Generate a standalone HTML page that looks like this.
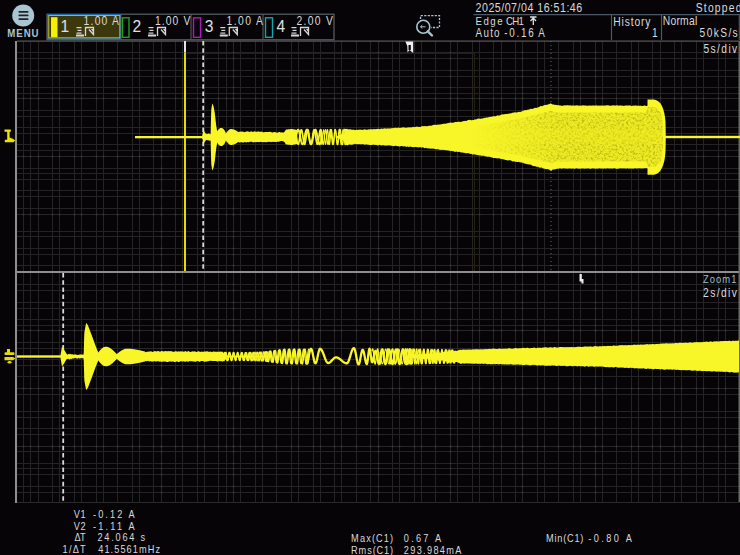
<!DOCTYPE html>
<html><head><meta charset="utf-8"><style>
html,body{margin:0;padding:0;background:#060406;width:740px;height:555px;overflow:hidden}
body{position:relative;font-family:"Liberation Sans",sans-serif}
</style></head><body>
<svg width="740" height="555" viewBox="0 0 740 555" style="position:absolute;left:0;top:0"><g stroke-width="1"><line x1="23.5" y1="41" x2="23.5" y2="271" stroke="#242424"/><line x1="30.5" y1="41" x2="30.5" y2="271" stroke="#242424"/><line x1="38.5" y1="41" x2="38.5" y2="271" stroke="#242424"/><line x1="52.5" y1="41" x2="52.5" y2="271" stroke="#242424"/><line x1="59.5" y1="41" x2="59.5" y2="271" stroke="#242424"/><line x1="74.5" y1="41" x2="74.5" y2="271" stroke="#242424"/><line x1="81.5" y1="41" x2="81.5" y2="271" stroke="#242424"/><line x1="96.5" y1="41" x2="96.5" y2="271" stroke="#242424"/><line x1="103.5" y1="41" x2="103.5" y2="271" stroke="#242424"/><line x1="117.5" y1="41" x2="117.5" y2="271" stroke="#242424"/><line x1="132.5" y1="41" x2="132.5" y2="271" stroke="#242424"/><line x1="139.5" y1="41" x2="139.5" y2="271" stroke="#242424"/><line x1="153.5" y1="41" x2="153.5" y2="271" stroke="#242424"/><line x1="161.5" y1="41" x2="161.5" y2="271" stroke="#262626"/><line x1="175.5" y1="41" x2="175.5" y2="271" stroke="#242424"/><line x1="182.5" y1="41" x2="182.5" y2="271" stroke="#242424"/><line x1="197.5" y1="41" x2="197.5" y2="271" stroke="#242424"/><line x1="204.5" y1="41" x2="204.5" y2="271" stroke="#242424"/><line x1="218.5" y1="41" x2="218.5" y2="271" stroke="#242424"/><line x1="226.5" y1="41" x2="226.5" y2="271" stroke="#242424"/><line x1="233.5" y1="41" x2="233.5" y2="271" stroke="#262626"/><line x1="240.5" y1="41" x2="240.5" y2="271" stroke="#242424"/><line x1="255.5" y1="41" x2="255.5" y2="271" stroke="#242424"/><line x1="262.5" y1="41" x2="262.5" y2="271" stroke="#242424"/><line x1="276.5" y1="41" x2="276.5" y2="271" stroke="#242424"/><line x1="291.5" y1="41" x2="291.5" y2="271" stroke="#242424"/><line x1="298.5" y1="41" x2="298.5" y2="271" stroke="#242424"/><line x1="313.5" y1="41" x2="313.5" y2="271" stroke="#242424"/><line x1="320.5" y1="41" x2="320.5" y2="271" stroke="#242424"/><line x1="334.5" y1="41" x2="334.5" y2="271" stroke="#242424"/><line x1="341.5" y1="41" x2="341.5" y2="271" stroke="#242424"/><line x1="356.5" y1="41" x2="356.5" y2="271" stroke="#242424"/><line x1="370.5" y1="41" x2="370.5" y2="271" stroke="#242424"/><line x1="378.5" y1="41" x2="378.5" y2="271" stroke="#262626"/><line x1="392.5" y1="41" x2="392.5" y2="271" stroke="#242424"/><line x1="399.5" y1="41" x2="399.5" y2="271" stroke="#242424"/><line x1="414.5" y1="41" x2="414.5" y2="271" stroke="#242424"/><line x1="421.5" y1="41" x2="421.5" y2="271" stroke="#242424"/><line x1="435.5" y1="41" x2="435.5" y2="271" stroke="#242424"/><line x1="450.5" y1="41" x2="450.5" y2="271" stroke="#262626"/><line x1="457.5" y1="41" x2="457.5" y2="271" stroke="#242424"/><line x1="472.5" y1="41" x2="472.5" y2="271" stroke="#242424"/><line x1="479.5" y1="41" x2="479.5" y2="271" stroke="#242424"/><line x1="493.5" y1="41" x2="493.5" y2="271" stroke="#242424"/><line x1="501.5" y1="41" x2="501.5" y2="271" stroke="#242424"/><line x1="515.5" y1="41" x2="515.5" y2="271" stroke="#242424"/><line x1="522.5" y1="41" x2="522.5" y2="271" stroke="#262626"/><line x1="537.5" y1="41" x2="537.5" y2="271" stroke="#242424"/><line x1="544.5" y1="41" x2="544.5" y2="271" stroke="#242424"/><line x1="558.5" y1="41" x2="558.5" y2="271" stroke="#242424"/><line x1="573.5" y1="41" x2="573.5" y2="271" stroke="#242424"/><line x1="580.5" y1="41" x2="580.5" y2="271" stroke="#242424"/><line x1="595.5" y1="41" x2="595.5" y2="271" stroke="#262626"/><line x1="602.5" y1="41" x2="602.5" y2="271" stroke="#242424"/><line x1="616.5" y1="41" x2="616.5" y2="271" stroke="#242424"/><line x1="631.5" y1="41" x2="631.5" y2="271" stroke="#242424"/><line x1="638.5" y1="41" x2="638.5" y2="271" stroke="#242424"/><line x1="652.5" y1="41" x2="652.5" y2="271" stroke="#242424"/><line x1="660.5" y1="41" x2="660.5" y2="271" stroke="#242424"/><line x1="674.5" y1="41" x2="674.5" y2="271" stroke="#242424"/><line x1="681.5" y1="41" x2="681.5" y2="271" stroke="#242424"/><line x1="696.5" y1="41" x2="696.5" y2="271" stroke="#242424"/><line x1="703.5" y1="41" x2="703.5" y2="271" stroke="#242424"/><line x1="718.5" y1="41" x2="718.5" y2="271" stroke="#242424"/><line x1="725.5" y1="41" x2="725.5" y2="271" stroke="#242424"/><line x1="16" y1="52.5" x2="739.2" y2="52.5" stroke="#242424"/><line x1="16" y1="58.5" x2="739.2" y2="58.5" stroke="#242424"/><line x1="16" y1="70.5" x2="739.2" y2="70.5" stroke="#242424"/><line x1="16" y1="76.5" x2="739.2" y2="76.5" stroke="#242424"/><line x1="16" y1="87.5" x2="739.2" y2="87.5" stroke="#242424"/><line x1="16" y1="93.5" x2="739.2" y2="93.5" stroke="#242424"/><line x1="16" y1="98.5" x2="739.2" y2="98.5" stroke="#262626"/><line x1="16" y1="110.5" x2="739.2" y2="110.5" stroke="#242424"/><line x1="16" y1="116.5" x2="739.2" y2="116.5" stroke="#242424"/><line x1="16" y1="127.5" x2="739.2" y2="127.5" stroke="#242424"/><line x1="16" y1="133.5" x2="739.2" y2="133.5" stroke="#242424"/><line x1="16" y1="144.5" x2="739.2" y2="144.5" stroke="#242424"/><line x1="16" y1="150.5" x2="739.2" y2="150.5" stroke="#242424"/><line x1="16" y1="156.5" x2="739.2" y2="156.5" stroke="#262626"/><line x1="16" y1="168.5" x2="739.2" y2="168.5" stroke="#242424"/><line x1="16" y1="173.5" x2="739.2" y2="173.5" stroke="#242424"/><line x1="16" y1="179.5" x2="739.2" y2="179.5" stroke="#242424"/><line x1="16" y1="190.5" x2="739.2" y2="190.5" stroke="#242424"/><line x1="16" y1="196.5" x2="739.2" y2="196.5" stroke="#242424"/><line x1="16" y1="208.5" x2="739.2" y2="208.5" stroke="#242424"/><line x1="16" y1="214.5" x2="739.2" y2="214.5" stroke="#262626"/><line x1="16" y1="231.5" x2="739.2" y2="231.5" stroke="#242424"/><line x1="16" y1="236.5" x2="739.2" y2="236.5" stroke="#242424"/><line x1="16" y1="248.5" x2="739.2" y2="248.5" stroke="#242424"/><line x1="16" y1="254.5" x2="739.2" y2="254.5" stroke="#242424"/><line x1="16" y1="265.5" x2="739.2" y2="265.5" stroke="#242424"/><rect x="160.7" y="51.7" width="1.6" height="1.6" fill="#3a3a3a"/><rect x="160.7" y="57.7" width="1.6" height="1.6" fill="#3a3a3a"/><rect x="160.7" y="69.7" width="1.6" height="1.6" fill="#3a3a3a"/><rect x="160.7" y="75.7" width="1.6" height="1.6" fill="#3a3a3a"/><rect x="160.7" y="86.7" width="1.6" height="1.6" fill="#3a3a3a"/><rect x="160.7" y="92.7" width="1.6" height="1.6" fill="#3a3a3a"/><rect x="160.7" y="97.7" width="1.6" height="1.6" fill="#3a3a3a"/><rect x="160.7" y="109.7" width="1.6" height="1.6" fill="#3a3a3a"/><rect x="160.7" y="115.7" width="1.6" height="1.6" fill="#3a3a3a"/><rect x="160.7" y="126.7" width="1.6" height="1.6" fill="#3a3a3a"/><rect x="160.7" y="132.7" width="1.6" height="1.6" fill="#3a3a3a"/><rect x="160.7" y="143.7" width="1.6" height="1.6" fill="#3a3a3a"/><rect x="160.7" y="149.7" width="1.6" height="1.6" fill="#3a3a3a"/><rect x="160.7" y="155.7" width="1.6" height="1.6" fill="#3a3a3a"/><rect x="160.7" y="167.7" width="1.6" height="1.6" fill="#3a3a3a"/><rect x="160.7" y="172.7" width="1.6" height="1.6" fill="#3a3a3a"/><rect x="160.7" y="178.7" width="1.6" height="1.6" fill="#3a3a3a"/><rect x="160.7" y="189.7" width="1.6" height="1.6" fill="#3a3a3a"/><rect x="160.7" y="195.7" width="1.6" height="1.6" fill="#3a3a3a"/><rect x="160.7" y="207.7" width="1.6" height="1.6" fill="#3a3a3a"/><rect x="160.7" y="213.7" width="1.6" height="1.6" fill="#3a3a3a"/><rect x="160.7" y="230.7" width="1.6" height="1.6" fill="#3a3a3a"/><rect x="160.7" y="235.7" width="1.6" height="1.6" fill="#3a3a3a"/><rect x="160.7" y="247.7" width="1.6" height="1.6" fill="#3a3a3a"/><rect x="160.7" y="253.7" width="1.6" height="1.6" fill="#3a3a3a"/><rect x="160.7" y="264.7" width="1.6" height="1.6" fill="#3a3a3a"/><rect x="232.7" y="51.7" width="1.6" height="1.6" fill="#3a3a3a"/><rect x="232.7" y="57.7" width="1.6" height="1.6" fill="#3a3a3a"/><rect x="232.7" y="69.7" width="1.6" height="1.6" fill="#3a3a3a"/><rect x="232.7" y="75.7" width="1.6" height="1.6" fill="#3a3a3a"/><rect x="232.7" y="86.7" width="1.6" height="1.6" fill="#3a3a3a"/><rect x="232.7" y="92.7" width="1.6" height="1.6" fill="#3a3a3a"/><rect x="232.7" y="97.7" width="1.6" height="1.6" fill="#3a3a3a"/><rect x="232.7" y="109.7" width="1.6" height="1.6" fill="#3a3a3a"/><rect x="232.7" y="115.7" width="1.6" height="1.6" fill="#3a3a3a"/><rect x="232.7" y="126.7" width="1.6" height="1.6" fill="#3a3a3a"/><rect x="232.7" y="132.7" width="1.6" height="1.6" fill="#3a3a3a"/><rect x="232.7" y="143.7" width="1.6" height="1.6" fill="#3a3a3a"/><rect x="232.7" y="149.7" width="1.6" height="1.6" fill="#3a3a3a"/><rect x="232.7" y="155.7" width="1.6" height="1.6" fill="#3a3a3a"/><rect x="232.7" y="167.7" width="1.6" height="1.6" fill="#3a3a3a"/><rect x="232.7" y="172.7" width="1.6" height="1.6" fill="#3a3a3a"/><rect x="232.7" y="178.7" width="1.6" height="1.6" fill="#3a3a3a"/><rect x="232.7" y="189.7" width="1.6" height="1.6" fill="#3a3a3a"/><rect x="232.7" y="195.7" width="1.6" height="1.6" fill="#3a3a3a"/><rect x="232.7" y="207.7" width="1.6" height="1.6" fill="#3a3a3a"/><rect x="232.7" y="213.7" width="1.6" height="1.6" fill="#3a3a3a"/><rect x="232.7" y="230.7" width="1.6" height="1.6" fill="#3a3a3a"/><rect x="232.7" y="235.7" width="1.6" height="1.6" fill="#3a3a3a"/><rect x="232.7" y="247.7" width="1.6" height="1.6" fill="#3a3a3a"/><rect x="232.7" y="253.7" width="1.6" height="1.6" fill="#3a3a3a"/><rect x="232.7" y="264.7" width="1.6" height="1.6" fill="#3a3a3a"/><rect x="377.7" y="51.7" width="1.6" height="1.6" fill="#3a3a3a"/><rect x="377.7" y="57.7" width="1.6" height="1.6" fill="#3a3a3a"/><rect x="377.7" y="69.7" width="1.6" height="1.6" fill="#3a3a3a"/><rect x="377.7" y="75.7" width="1.6" height="1.6" fill="#3a3a3a"/><rect x="377.7" y="86.7" width="1.6" height="1.6" fill="#3a3a3a"/><rect x="377.7" y="92.7" width="1.6" height="1.6" fill="#3a3a3a"/><rect x="377.7" y="97.7" width="1.6" height="1.6" fill="#3a3a3a"/><rect x="377.7" y="109.7" width="1.6" height="1.6" fill="#3a3a3a"/><rect x="377.7" y="115.7" width="1.6" height="1.6" fill="#3a3a3a"/><rect x="377.7" y="126.7" width="1.6" height="1.6" fill="#3a3a3a"/><rect x="377.7" y="132.7" width="1.6" height="1.6" fill="#3a3a3a"/><rect x="377.7" y="143.7" width="1.6" height="1.6" fill="#3a3a3a"/><rect x="377.7" y="149.7" width="1.6" height="1.6" fill="#3a3a3a"/><rect x="377.7" y="155.7" width="1.6" height="1.6" fill="#3a3a3a"/><rect x="377.7" y="167.7" width="1.6" height="1.6" fill="#3a3a3a"/><rect x="377.7" y="172.7" width="1.6" height="1.6" fill="#3a3a3a"/><rect x="377.7" y="178.7" width="1.6" height="1.6" fill="#3a3a3a"/><rect x="377.7" y="189.7" width="1.6" height="1.6" fill="#3a3a3a"/><rect x="377.7" y="195.7" width="1.6" height="1.6" fill="#3a3a3a"/><rect x="377.7" y="207.7" width="1.6" height="1.6" fill="#3a3a3a"/><rect x="377.7" y="213.7" width="1.6" height="1.6" fill="#3a3a3a"/><rect x="377.7" y="230.7" width="1.6" height="1.6" fill="#3a3a3a"/><rect x="377.7" y="235.7" width="1.6" height="1.6" fill="#3a3a3a"/><rect x="377.7" y="247.7" width="1.6" height="1.6" fill="#3a3a3a"/><rect x="377.7" y="253.7" width="1.6" height="1.6" fill="#3a3a3a"/><rect x="377.7" y="264.7" width="1.6" height="1.6" fill="#3a3a3a"/><rect x="449.7" y="51.7" width="1.6" height="1.6" fill="#3a3a3a"/><rect x="449.7" y="57.7" width="1.6" height="1.6" fill="#3a3a3a"/><rect x="449.7" y="69.7" width="1.6" height="1.6" fill="#3a3a3a"/><rect x="449.7" y="75.7" width="1.6" height="1.6" fill="#3a3a3a"/><rect x="449.7" y="86.7" width="1.6" height="1.6" fill="#3a3a3a"/><rect x="449.7" y="92.7" width="1.6" height="1.6" fill="#3a3a3a"/><rect x="449.7" y="97.7" width="1.6" height="1.6" fill="#3a3a3a"/><rect x="449.7" y="109.7" width="1.6" height="1.6" fill="#3a3a3a"/><rect x="449.7" y="115.7" width="1.6" height="1.6" fill="#3a3a3a"/><rect x="449.7" y="126.7" width="1.6" height="1.6" fill="#3a3a3a"/><rect x="449.7" y="132.7" width="1.6" height="1.6" fill="#3a3a3a"/><rect x="449.7" y="143.7" width="1.6" height="1.6" fill="#3a3a3a"/><rect x="449.7" y="149.7" width="1.6" height="1.6" fill="#3a3a3a"/><rect x="449.7" y="155.7" width="1.6" height="1.6" fill="#3a3a3a"/><rect x="449.7" y="167.7" width="1.6" height="1.6" fill="#3a3a3a"/><rect x="449.7" y="172.7" width="1.6" height="1.6" fill="#3a3a3a"/><rect x="449.7" y="178.7" width="1.6" height="1.6" fill="#3a3a3a"/><rect x="449.7" y="189.7" width="1.6" height="1.6" fill="#3a3a3a"/><rect x="449.7" y="195.7" width="1.6" height="1.6" fill="#3a3a3a"/><rect x="449.7" y="207.7" width="1.6" height="1.6" fill="#3a3a3a"/><rect x="449.7" y="213.7" width="1.6" height="1.6" fill="#3a3a3a"/><rect x="449.7" y="230.7" width="1.6" height="1.6" fill="#3a3a3a"/><rect x="449.7" y="235.7" width="1.6" height="1.6" fill="#3a3a3a"/><rect x="449.7" y="247.7" width="1.6" height="1.6" fill="#3a3a3a"/><rect x="449.7" y="253.7" width="1.6" height="1.6" fill="#3a3a3a"/><rect x="449.7" y="264.7" width="1.6" height="1.6" fill="#3a3a3a"/><rect x="521.7" y="51.7" width="1.6" height="1.6" fill="#3a3a3a"/><rect x="521.7" y="57.7" width="1.6" height="1.6" fill="#3a3a3a"/><rect x="521.7" y="69.7" width="1.6" height="1.6" fill="#3a3a3a"/><rect x="521.7" y="75.7" width="1.6" height="1.6" fill="#3a3a3a"/><rect x="521.7" y="86.7" width="1.6" height="1.6" fill="#3a3a3a"/><rect x="521.7" y="92.7" width="1.6" height="1.6" fill="#3a3a3a"/><rect x="521.7" y="97.7" width="1.6" height="1.6" fill="#3a3a3a"/><rect x="521.7" y="109.7" width="1.6" height="1.6" fill="#3a3a3a"/><rect x="521.7" y="115.7" width="1.6" height="1.6" fill="#3a3a3a"/><rect x="521.7" y="126.7" width="1.6" height="1.6" fill="#3a3a3a"/><rect x="521.7" y="132.7" width="1.6" height="1.6" fill="#3a3a3a"/><rect x="521.7" y="143.7" width="1.6" height="1.6" fill="#3a3a3a"/><rect x="521.7" y="149.7" width="1.6" height="1.6" fill="#3a3a3a"/><rect x="521.7" y="155.7" width="1.6" height="1.6" fill="#3a3a3a"/><rect x="521.7" y="167.7" width="1.6" height="1.6" fill="#3a3a3a"/><rect x="521.7" y="172.7" width="1.6" height="1.6" fill="#3a3a3a"/><rect x="521.7" y="178.7" width="1.6" height="1.6" fill="#3a3a3a"/><rect x="521.7" y="189.7" width="1.6" height="1.6" fill="#3a3a3a"/><rect x="521.7" y="195.7" width="1.6" height="1.6" fill="#3a3a3a"/><rect x="521.7" y="207.7" width="1.6" height="1.6" fill="#3a3a3a"/><rect x="521.7" y="213.7" width="1.6" height="1.6" fill="#3a3a3a"/><rect x="521.7" y="230.7" width="1.6" height="1.6" fill="#3a3a3a"/><rect x="521.7" y="235.7" width="1.6" height="1.6" fill="#3a3a3a"/><rect x="521.7" y="247.7" width="1.6" height="1.6" fill="#3a3a3a"/><rect x="521.7" y="253.7" width="1.6" height="1.6" fill="#3a3a3a"/><rect x="521.7" y="264.7" width="1.6" height="1.6" fill="#3a3a3a"/><rect x="594.7" y="51.7" width="1.6" height="1.6" fill="#3a3a3a"/><rect x="594.7" y="57.7" width="1.6" height="1.6" fill="#3a3a3a"/><rect x="594.7" y="69.7" width="1.6" height="1.6" fill="#3a3a3a"/><rect x="594.7" y="75.7" width="1.6" height="1.6" fill="#3a3a3a"/><rect x="594.7" y="86.7" width="1.6" height="1.6" fill="#3a3a3a"/><rect x="594.7" y="92.7" width="1.6" height="1.6" fill="#3a3a3a"/><rect x="594.7" y="97.7" width="1.6" height="1.6" fill="#3a3a3a"/><rect x="594.7" y="109.7" width="1.6" height="1.6" fill="#3a3a3a"/><rect x="594.7" y="115.7" width="1.6" height="1.6" fill="#3a3a3a"/><rect x="594.7" y="126.7" width="1.6" height="1.6" fill="#3a3a3a"/><rect x="594.7" y="132.7" width="1.6" height="1.6" fill="#3a3a3a"/><rect x="594.7" y="143.7" width="1.6" height="1.6" fill="#3a3a3a"/><rect x="594.7" y="149.7" width="1.6" height="1.6" fill="#3a3a3a"/><rect x="594.7" y="155.7" width="1.6" height="1.6" fill="#3a3a3a"/><rect x="594.7" y="167.7" width="1.6" height="1.6" fill="#3a3a3a"/><rect x="594.7" y="172.7" width="1.6" height="1.6" fill="#3a3a3a"/><rect x="594.7" y="178.7" width="1.6" height="1.6" fill="#3a3a3a"/><rect x="594.7" y="189.7" width="1.6" height="1.6" fill="#3a3a3a"/><rect x="594.7" y="195.7" width="1.6" height="1.6" fill="#3a3a3a"/><rect x="594.7" y="207.7" width="1.6" height="1.6" fill="#3a3a3a"/><rect x="594.7" y="213.7" width="1.6" height="1.6" fill="#3a3a3a"/><rect x="594.7" y="230.7" width="1.6" height="1.6" fill="#3a3a3a"/><rect x="594.7" y="235.7" width="1.6" height="1.6" fill="#3a3a3a"/><rect x="594.7" y="247.7" width="1.6" height="1.6" fill="#3a3a3a"/><rect x="594.7" y="253.7" width="1.6" height="1.6" fill="#3a3a3a"/><rect x="594.7" y="264.7" width="1.6" height="1.6" fill="#3a3a3a"/><rect x="22.7" y="97.7" width="1.6" height="1.6" fill="#3a3a3a"/><rect x="29.7" y="97.7" width="1.6" height="1.6" fill="#3a3a3a"/><rect x="37.7" y="97.7" width="1.6" height="1.6" fill="#3a3a3a"/><rect x="51.7" y="97.7" width="1.6" height="1.6" fill="#3a3a3a"/><rect x="58.7" y="97.7" width="1.6" height="1.6" fill="#3a3a3a"/><rect x="73.7" y="97.7" width="1.6" height="1.6" fill="#3a3a3a"/><rect x="80.7" y="97.7" width="1.6" height="1.6" fill="#3a3a3a"/><rect x="95.7" y="97.7" width="1.6" height="1.6" fill="#3a3a3a"/><rect x="102.7" y="97.7" width="1.6" height="1.6" fill="#3a3a3a"/><rect x="116.7" y="97.7" width="1.6" height="1.6" fill="#3a3a3a"/><rect x="131.7" y="97.7" width="1.6" height="1.6" fill="#3a3a3a"/><rect x="138.7" y="97.7" width="1.6" height="1.6" fill="#3a3a3a"/><rect x="152.7" y="97.7" width="1.6" height="1.6" fill="#3a3a3a"/><rect x="160.7" y="97.7" width="1.6" height="1.6" fill="#3a3a3a"/><rect x="174.7" y="97.7" width="1.6" height="1.6" fill="#3a3a3a"/><rect x="181.7" y="97.7" width="1.6" height="1.6" fill="#3a3a3a"/><rect x="196.7" y="97.7" width="1.6" height="1.6" fill="#3a3a3a"/><rect x="203.7" y="97.7" width="1.6" height="1.6" fill="#3a3a3a"/><rect x="217.7" y="97.7" width="1.6" height="1.6" fill="#3a3a3a"/><rect x="225.7" y="97.7" width="1.6" height="1.6" fill="#3a3a3a"/><rect x="232.7" y="97.7" width="1.6" height="1.6" fill="#3a3a3a"/><rect x="239.7" y="97.7" width="1.6" height="1.6" fill="#3a3a3a"/><rect x="254.7" y="97.7" width="1.6" height="1.6" fill="#3a3a3a"/><rect x="261.7" y="97.7" width="1.6" height="1.6" fill="#3a3a3a"/><rect x="275.7" y="97.7" width="1.6" height="1.6" fill="#3a3a3a"/><rect x="290.7" y="97.7" width="1.6" height="1.6" fill="#3a3a3a"/><rect x="297.7" y="97.7" width="1.6" height="1.6" fill="#3a3a3a"/><rect x="312.7" y="97.7" width="1.6" height="1.6" fill="#3a3a3a"/><rect x="319.7" y="97.7" width="1.6" height="1.6" fill="#3a3a3a"/><rect x="333.7" y="97.7" width="1.6" height="1.6" fill="#3a3a3a"/><rect x="340.7" y="97.7" width="1.6" height="1.6" fill="#3a3a3a"/><rect x="355.7" y="97.7" width="1.6" height="1.6" fill="#3a3a3a"/><rect x="369.7" y="97.7" width="1.6" height="1.6" fill="#3a3a3a"/><rect x="377.7" y="97.7" width="1.6" height="1.6" fill="#3a3a3a"/><rect x="391.7" y="97.7" width="1.6" height="1.6" fill="#3a3a3a"/><rect x="398.7" y="97.7" width="1.6" height="1.6" fill="#3a3a3a"/><rect x="413.7" y="97.7" width="1.6" height="1.6" fill="#3a3a3a"/><rect x="420.7" y="97.7" width="1.6" height="1.6" fill="#3a3a3a"/><rect x="434.7" y="97.7" width="1.6" height="1.6" fill="#3a3a3a"/><rect x="449.7" y="97.7" width="1.6" height="1.6" fill="#3a3a3a"/><rect x="456.7" y="97.7" width="1.6" height="1.6" fill="#3a3a3a"/><rect x="471.7" y="97.7" width="1.6" height="1.6" fill="#3a3a3a"/><rect x="478.7" y="97.7" width="1.6" height="1.6" fill="#3a3a3a"/><rect x="492.7" y="97.7" width="1.6" height="1.6" fill="#3a3a3a"/><rect x="500.7" y="97.7" width="1.6" height="1.6" fill="#3a3a3a"/><rect x="514.7" y="97.7" width="1.6" height="1.6" fill="#3a3a3a"/><rect x="521.7" y="97.7" width="1.6" height="1.6" fill="#3a3a3a"/><rect x="536.7" y="97.7" width="1.6" height="1.6" fill="#3a3a3a"/><rect x="543.7" y="97.7" width="1.6" height="1.6" fill="#3a3a3a"/><rect x="557.7" y="97.7" width="1.6" height="1.6" fill="#3a3a3a"/><rect x="572.7" y="97.7" width="1.6" height="1.6" fill="#3a3a3a"/><rect x="579.7" y="97.7" width="1.6" height="1.6" fill="#3a3a3a"/><rect x="594.7" y="97.7" width="1.6" height="1.6" fill="#3a3a3a"/><rect x="601.7" y="97.7" width="1.6" height="1.6" fill="#3a3a3a"/><rect x="615.7" y="97.7" width="1.6" height="1.6" fill="#3a3a3a"/><rect x="630.7" y="97.7" width="1.6" height="1.6" fill="#3a3a3a"/><rect x="637.7" y="97.7" width="1.6" height="1.6" fill="#3a3a3a"/><rect x="651.7" y="97.7" width="1.6" height="1.6" fill="#3a3a3a"/><rect x="659.7" y="97.7" width="1.6" height="1.6" fill="#3a3a3a"/><rect x="673.7" y="97.7" width="1.6" height="1.6" fill="#3a3a3a"/><rect x="680.7" y="97.7" width="1.6" height="1.6" fill="#3a3a3a"/><rect x="695.7" y="97.7" width="1.6" height="1.6" fill="#3a3a3a"/><rect x="702.7" y="97.7" width="1.6" height="1.6" fill="#3a3a3a"/><rect x="717.7" y="97.7" width="1.6" height="1.6" fill="#3a3a3a"/><rect x="724.7" y="97.7" width="1.6" height="1.6" fill="#3a3a3a"/><rect x="22.7" y="155.7" width="1.6" height="1.6" fill="#3a3a3a"/><rect x="29.7" y="155.7" width="1.6" height="1.6" fill="#3a3a3a"/><rect x="37.7" y="155.7" width="1.6" height="1.6" fill="#3a3a3a"/><rect x="51.7" y="155.7" width="1.6" height="1.6" fill="#3a3a3a"/><rect x="58.7" y="155.7" width="1.6" height="1.6" fill="#3a3a3a"/><rect x="73.7" y="155.7" width="1.6" height="1.6" fill="#3a3a3a"/><rect x="80.7" y="155.7" width="1.6" height="1.6" fill="#3a3a3a"/><rect x="95.7" y="155.7" width="1.6" height="1.6" fill="#3a3a3a"/><rect x="102.7" y="155.7" width="1.6" height="1.6" fill="#3a3a3a"/><rect x="116.7" y="155.7" width="1.6" height="1.6" fill="#3a3a3a"/><rect x="131.7" y="155.7" width="1.6" height="1.6" fill="#3a3a3a"/><rect x="138.7" y="155.7" width="1.6" height="1.6" fill="#3a3a3a"/><rect x="152.7" y="155.7" width="1.6" height="1.6" fill="#3a3a3a"/><rect x="160.7" y="155.7" width="1.6" height="1.6" fill="#3a3a3a"/><rect x="174.7" y="155.7" width="1.6" height="1.6" fill="#3a3a3a"/><rect x="181.7" y="155.7" width="1.6" height="1.6" fill="#3a3a3a"/><rect x="196.7" y="155.7" width="1.6" height="1.6" fill="#3a3a3a"/><rect x="203.7" y="155.7" width="1.6" height="1.6" fill="#3a3a3a"/><rect x="217.7" y="155.7" width="1.6" height="1.6" fill="#3a3a3a"/><rect x="225.7" y="155.7" width="1.6" height="1.6" fill="#3a3a3a"/><rect x="232.7" y="155.7" width="1.6" height="1.6" fill="#3a3a3a"/><rect x="239.7" y="155.7" width="1.6" height="1.6" fill="#3a3a3a"/><rect x="254.7" y="155.7" width="1.6" height="1.6" fill="#3a3a3a"/><rect x="261.7" y="155.7" width="1.6" height="1.6" fill="#3a3a3a"/><rect x="275.7" y="155.7" width="1.6" height="1.6" fill="#3a3a3a"/><rect x="290.7" y="155.7" width="1.6" height="1.6" fill="#3a3a3a"/><rect x="297.7" y="155.7" width="1.6" height="1.6" fill="#3a3a3a"/><rect x="312.7" y="155.7" width="1.6" height="1.6" fill="#3a3a3a"/><rect x="319.7" y="155.7" width="1.6" height="1.6" fill="#3a3a3a"/><rect x="333.7" y="155.7" width="1.6" height="1.6" fill="#3a3a3a"/><rect x="340.7" y="155.7" width="1.6" height="1.6" fill="#3a3a3a"/><rect x="355.7" y="155.7" width="1.6" height="1.6" fill="#3a3a3a"/><rect x="369.7" y="155.7" width="1.6" height="1.6" fill="#3a3a3a"/><rect x="377.7" y="155.7" width="1.6" height="1.6" fill="#3a3a3a"/><rect x="391.7" y="155.7" width="1.6" height="1.6" fill="#3a3a3a"/><rect x="398.7" y="155.7" width="1.6" height="1.6" fill="#3a3a3a"/><rect x="413.7" y="155.7" width="1.6" height="1.6" fill="#3a3a3a"/><rect x="420.7" y="155.7" width="1.6" height="1.6" fill="#3a3a3a"/><rect x="434.7" y="155.7" width="1.6" height="1.6" fill="#3a3a3a"/><rect x="449.7" y="155.7" width="1.6" height="1.6" fill="#3a3a3a"/><rect x="456.7" y="155.7" width="1.6" height="1.6" fill="#3a3a3a"/><rect x="471.7" y="155.7" width="1.6" height="1.6" fill="#3a3a3a"/><rect x="478.7" y="155.7" width="1.6" height="1.6" fill="#3a3a3a"/><rect x="492.7" y="155.7" width="1.6" height="1.6" fill="#3a3a3a"/><rect x="500.7" y="155.7" width="1.6" height="1.6" fill="#3a3a3a"/><rect x="514.7" y="155.7" width="1.6" height="1.6" fill="#3a3a3a"/><rect x="521.7" y="155.7" width="1.6" height="1.6" fill="#3a3a3a"/><rect x="536.7" y="155.7" width="1.6" height="1.6" fill="#3a3a3a"/><rect x="543.7" y="155.7" width="1.6" height="1.6" fill="#3a3a3a"/><rect x="557.7" y="155.7" width="1.6" height="1.6" fill="#3a3a3a"/><rect x="572.7" y="155.7" width="1.6" height="1.6" fill="#3a3a3a"/><rect x="579.7" y="155.7" width="1.6" height="1.6" fill="#3a3a3a"/><rect x="594.7" y="155.7" width="1.6" height="1.6" fill="#3a3a3a"/><rect x="601.7" y="155.7" width="1.6" height="1.6" fill="#3a3a3a"/><rect x="615.7" y="155.7" width="1.6" height="1.6" fill="#3a3a3a"/><rect x="630.7" y="155.7" width="1.6" height="1.6" fill="#3a3a3a"/><rect x="637.7" y="155.7" width="1.6" height="1.6" fill="#3a3a3a"/><rect x="651.7" y="155.7" width="1.6" height="1.6" fill="#3a3a3a"/><rect x="659.7" y="155.7" width="1.6" height="1.6" fill="#3a3a3a"/><rect x="673.7" y="155.7" width="1.6" height="1.6" fill="#3a3a3a"/><rect x="680.7" y="155.7" width="1.6" height="1.6" fill="#3a3a3a"/><rect x="695.7" y="155.7" width="1.6" height="1.6" fill="#3a3a3a"/><rect x="702.7" y="155.7" width="1.6" height="1.6" fill="#3a3a3a"/><rect x="717.7" y="155.7" width="1.6" height="1.6" fill="#3a3a3a"/><rect x="724.7" y="155.7" width="1.6" height="1.6" fill="#3a3a3a"/><rect x="22.7" y="213.7" width="1.6" height="1.6" fill="#3a3a3a"/><rect x="29.7" y="213.7" width="1.6" height="1.6" fill="#3a3a3a"/><rect x="37.7" y="213.7" width="1.6" height="1.6" fill="#3a3a3a"/><rect x="51.7" y="213.7" width="1.6" height="1.6" fill="#3a3a3a"/><rect x="58.7" y="213.7" width="1.6" height="1.6" fill="#3a3a3a"/><rect x="73.7" y="213.7" width="1.6" height="1.6" fill="#3a3a3a"/><rect x="80.7" y="213.7" width="1.6" height="1.6" fill="#3a3a3a"/><rect x="95.7" y="213.7" width="1.6" height="1.6" fill="#3a3a3a"/><rect x="102.7" y="213.7" width="1.6" height="1.6" fill="#3a3a3a"/><rect x="116.7" y="213.7" width="1.6" height="1.6" fill="#3a3a3a"/><rect x="131.7" y="213.7" width="1.6" height="1.6" fill="#3a3a3a"/><rect x="138.7" y="213.7" width="1.6" height="1.6" fill="#3a3a3a"/><rect x="152.7" y="213.7" width="1.6" height="1.6" fill="#3a3a3a"/><rect x="160.7" y="213.7" width="1.6" height="1.6" fill="#3a3a3a"/><rect x="174.7" y="213.7" width="1.6" height="1.6" fill="#3a3a3a"/><rect x="181.7" y="213.7" width="1.6" height="1.6" fill="#3a3a3a"/><rect x="196.7" y="213.7" width="1.6" height="1.6" fill="#3a3a3a"/><rect x="203.7" y="213.7" width="1.6" height="1.6" fill="#3a3a3a"/><rect x="217.7" y="213.7" width="1.6" height="1.6" fill="#3a3a3a"/><rect x="225.7" y="213.7" width="1.6" height="1.6" fill="#3a3a3a"/><rect x="232.7" y="213.7" width="1.6" height="1.6" fill="#3a3a3a"/><rect x="239.7" y="213.7" width="1.6" height="1.6" fill="#3a3a3a"/><rect x="254.7" y="213.7" width="1.6" height="1.6" fill="#3a3a3a"/><rect x="261.7" y="213.7" width="1.6" height="1.6" fill="#3a3a3a"/><rect x="275.7" y="213.7" width="1.6" height="1.6" fill="#3a3a3a"/><rect x="290.7" y="213.7" width="1.6" height="1.6" fill="#3a3a3a"/><rect x="297.7" y="213.7" width="1.6" height="1.6" fill="#3a3a3a"/><rect x="312.7" y="213.7" width="1.6" height="1.6" fill="#3a3a3a"/><rect x="319.7" y="213.7" width="1.6" height="1.6" fill="#3a3a3a"/><rect x="333.7" y="213.7" width="1.6" height="1.6" fill="#3a3a3a"/><rect x="340.7" y="213.7" width="1.6" height="1.6" fill="#3a3a3a"/><rect x="355.7" y="213.7" width="1.6" height="1.6" fill="#3a3a3a"/><rect x="369.7" y="213.7" width="1.6" height="1.6" fill="#3a3a3a"/><rect x="377.7" y="213.7" width="1.6" height="1.6" fill="#3a3a3a"/><rect x="391.7" y="213.7" width="1.6" height="1.6" fill="#3a3a3a"/><rect x="398.7" y="213.7" width="1.6" height="1.6" fill="#3a3a3a"/><rect x="413.7" y="213.7" width="1.6" height="1.6" fill="#3a3a3a"/><rect x="420.7" y="213.7" width="1.6" height="1.6" fill="#3a3a3a"/><rect x="434.7" y="213.7" width="1.6" height="1.6" fill="#3a3a3a"/><rect x="449.7" y="213.7" width="1.6" height="1.6" fill="#3a3a3a"/><rect x="456.7" y="213.7" width="1.6" height="1.6" fill="#3a3a3a"/><rect x="471.7" y="213.7" width="1.6" height="1.6" fill="#3a3a3a"/><rect x="478.7" y="213.7" width="1.6" height="1.6" fill="#3a3a3a"/><rect x="492.7" y="213.7" width="1.6" height="1.6" fill="#3a3a3a"/><rect x="500.7" y="213.7" width="1.6" height="1.6" fill="#3a3a3a"/><rect x="514.7" y="213.7" width="1.6" height="1.6" fill="#3a3a3a"/><rect x="521.7" y="213.7" width="1.6" height="1.6" fill="#3a3a3a"/><rect x="536.7" y="213.7" width="1.6" height="1.6" fill="#3a3a3a"/><rect x="543.7" y="213.7" width="1.6" height="1.6" fill="#3a3a3a"/><rect x="557.7" y="213.7" width="1.6" height="1.6" fill="#3a3a3a"/><rect x="572.7" y="213.7" width="1.6" height="1.6" fill="#3a3a3a"/><rect x="579.7" y="213.7" width="1.6" height="1.6" fill="#3a3a3a"/><rect x="594.7" y="213.7" width="1.6" height="1.6" fill="#3a3a3a"/><rect x="601.7" y="213.7" width="1.6" height="1.6" fill="#3a3a3a"/><rect x="615.7" y="213.7" width="1.6" height="1.6" fill="#3a3a3a"/><rect x="630.7" y="213.7" width="1.6" height="1.6" fill="#3a3a3a"/><rect x="637.7" y="213.7" width="1.6" height="1.6" fill="#3a3a3a"/><rect x="651.7" y="213.7" width="1.6" height="1.6" fill="#3a3a3a"/><rect x="659.7" y="213.7" width="1.6" height="1.6" fill="#3a3a3a"/><rect x="673.7" y="213.7" width="1.6" height="1.6" fill="#3a3a3a"/><rect x="680.7" y="213.7" width="1.6" height="1.6" fill="#3a3a3a"/><rect x="695.7" y="213.7" width="1.6" height="1.6" fill="#3a3a3a"/><rect x="702.7" y="213.7" width="1.6" height="1.6" fill="#3a3a3a"/><rect x="717.7" y="213.7" width="1.6" height="1.6" fill="#3a3a3a"/><rect x="724.7" y="213.7" width="1.6" height="1.6" fill="#3a3a3a"/></g><g stroke-width="1"><line x1="23.5" y1="273" x2="23.5" y2="503" stroke="#242424"/><line x1="30.5" y1="273" x2="30.5" y2="503" stroke="#242424"/><line x1="38.5" y1="273" x2="38.5" y2="503" stroke="#242424"/><line x1="52.5" y1="273" x2="52.5" y2="503" stroke="#242424"/><line x1="59.5" y1="273" x2="59.5" y2="503" stroke="#242424"/><line x1="74.5" y1="273" x2="74.5" y2="503" stroke="#242424"/><line x1="81.5" y1="273" x2="81.5" y2="503" stroke="#242424"/><line x1="96.5" y1="273" x2="96.5" y2="503" stroke="#242424"/><line x1="103.5" y1="273" x2="103.5" y2="503" stroke="#242424"/><line x1="117.5" y1="273" x2="117.5" y2="503" stroke="#242424"/><line x1="132.5" y1="273" x2="132.5" y2="503" stroke="#242424"/><line x1="139.5" y1="273" x2="139.5" y2="503" stroke="#242424"/><line x1="153.5" y1="273" x2="153.5" y2="503" stroke="#242424"/><line x1="161.5" y1="273" x2="161.5" y2="503" stroke="#262626"/><line x1="175.5" y1="273" x2="175.5" y2="503" stroke="#242424"/><line x1="182.5" y1="273" x2="182.5" y2="503" stroke="#242424"/><line x1="197.5" y1="273" x2="197.5" y2="503" stroke="#242424"/><line x1="204.5" y1="273" x2="204.5" y2="503" stroke="#242424"/><line x1="218.5" y1="273" x2="218.5" y2="503" stroke="#242424"/><line x1="226.5" y1="273" x2="226.5" y2="503" stroke="#242424"/><line x1="233.5" y1="273" x2="233.5" y2="503" stroke="#262626"/><line x1="240.5" y1="273" x2="240.5" y2="503" stroke="#242424"/><line x1="255.5" y1="273" x2="255.5" y2="503" stroke="#242424"/><line x1="262.5" y1="273" x2="262.5" y2="503" stroke="#242424"/><line x1="276.5" y1="273" x2="276.5" y2="503" stroke="#242424"/><line x1="291.5" y1="273" x2="291.5" y2="503" stroke="#242424"/><line x1="298.5" y1="273" x2="298.5" y2="503" stroke="#242424"/><line x1="313.5" y1="273" x2="313.5" y2="503" stroke="#242424"/><line x1="320.5" y1="273" x2="320.5" y2="503" stroke="#242424"/><line x1="334.5" y1="273" x2="334.5" y2="503" stroke="#242424"/><line x1="341.5" y1="273" x2="341.5" y2="503" stroke="#242424"/><line x1="356.5" y1="273" x2="356.5" y2="503" stroke="#242424"/><line x1="370.5" y1="273" x2="370.5" y2="503" stroke="#242424"/><line x1="378.5" y1="273" x2="378.5" y2="503" stroke="#262626"/><line x1="392.5" y1="273" x2="392.5" y2="503" stroke="#242424"/><line x1="399.5" y1="273" x2="399.5" y2="503" stroke="#242424"/><line x1="414.5" y1="273" x2="414.5" y2="503" stroke="#242424"/><line x1="421.5" y1="273" x2="421.5" y2="503" stroke="#242424"/><line x1="435.5" y1="273" x2="435.5" y2="503" stroke="#242424"/><line x1="450.5" y1="273" x2="450.5" y2="503" stroke="#262626"/><line x1="457.5" y1="273" x2="457.5" y2="503" stroke="#242424"/><line x1="472.5" y1="273" x2="472.5" y2="503" stroke="#242424"/><line x1="479.5" y1="273" x2="479.5" y2="503" stroke="#242424"/><line x1="493.5" y1="273" x2="493.5" y2="503" stroke="#242424"/><line x1="501.5" y1="273" x2="501.5" y2="503" stroke="#242424"/><line x1="515.5" y1="273" x2="515.5" y2="503" stroke="#242424"/><line x1="522.5" y1="273" x2="522.5" y2="503" stroke="#262626"/><line x1="537.5" y1="273" x2="537.5" y2="503" stroke="#242424"/><line x1="544.5" y1="273" x2="544.5" y2="503" stroke="#242424"/><line x1="558.5" y1="273" x2="558.5" y2="503" stroke="#242424"/><line x1="573.5" y1="273" x2="573.5" y2="503" stroke="#242424"/><line x1="580.5" y1="273" x2="580.5" y2="503" stroke="#242424"/><line x1="595.5" y1="273" x2="595.5" y2="503" stroke="#262626"/><line x1="602.5" y1="273" x2="602.5" y2="503" stroke="#242424"/><line x1="616.5" y1="273" x2="616.5" y2="503" stroke="#242424"/><line x1="631.5" y1="273" x2="631.5" y2="503" stroke="#242424"/><line x1="638.5" y1="273" x2="638.5" y2="503" stroke="#242424"/><line x1="652.5" y1="273" x2="652.5" y2="503" stroke="#242424"/><line x1="660.5" y1="273" x2="660.5" y2="503" stroke="#242424"/><line x1="674.5" y1="273" x2="674.5" y2="503" stroke="#242424"/><line x1="681.5" y1="273" x2="681.5" y2="503" stroke="#242424"/><line x1="696.5" y1="273" x2="696.5" y2="503" stroke="#242424"/><line x1="703.5" y1="273" x2="703.5" y2="503" stroke="#242424"/><line x1="718.5" y1="273" x2="718.5" y2="503" stroke="#242424"/><line x1="725.5" y1="273" x2="725.5" y2="503" stroke="#242424"/><line x1="16" y1="284.5" x2="739.2" y2="284.5" stroke="#242424"/><line x1="16" y1="290.5" x2="739.2" y2="290.5" stroke="#242424"/><line x1="16" y1="302.5" x2="739.2" y2="302.5" stroke="#242424"/><line x1="16" y1="308.5" x2="739.2" y2="308.5" stroke="#242424"/><line x1="16" y1="319.5" x2="739.2" y2="319.5" stroke="#242424"/><line x1="16" y1="325.5" x2="739.2" y2="325.5" stroke="#242424"/><line x1="16" y1="330.5" x2="739.2" y2="330.5" stroke="#262626"/><line x1="16" y1="342.5" x2="739.2" y2="342.5" stroke="#242424"/><line x1="16" y1="348.5" x2="739.2" y2="348.5" stroke="#242424"/><line x1="16" y1="359.5" x2="739.2" y2="359.5" stroke="#242424"/><line x1="16" y1="365.5" x2="739.2" y2="365.5" stroke="#242424"/><line x1="16" y1="376.5" x2="739.2" y2="376.5" stroke="#242424"/><line x1="16" y1="388.5" x2="739.2" y2="388.5" stroke="#262626"/><line x1="16" y1="394.5" x2="739.2" y2="394.5" stroke="#242424"/><line x1="16" y1="411.5" x2="739.2" y2="411.5" stroke="#242424"/><line x1="16" y1="417.5" x2="739.2" y2="417.5" stroke="#242424"/><line x1="16" y1="428.5" x2="739.2" y2="428.5" stroke="#242424"/><line x1="16" y1="434.5" x2="739.2" y2="434.5" stroke="#242424"/><line x1="16" y1="446.5" x2="739.2" y2="446.5" stroke="#262626"/><line x1="16" y1="451.5" x2="739.2" y2="451.5" stroke="#242424"/><line x1="16" y1="463.5" x2="739.2" y2="463.5" stroke="#242424"/><line x1="16" y1="468.5" x2="739.2" y2="468.5" stroke="#242424"/><line x1="16" y1="474.5" x2="739.2" y2="474.5" stroke="#242424"/><line x1="16" y1="486.5" x2="739.2" y2="486.5" stroke="#242424"/><line x1="16" y1="492.5" x2="739.2" y2="492.5" stroke="#242424"/><rect x="160.7" y="283.7" width="1.6" height="1.6" fill="#3a3a3a"/><rect x="160.7" y="289.7" width="1.6" height="1.6" fill="#3a3a3a"/><rect x="160.7" y="301.7" width="1.6" height="1.6" fill="#3a3a3a"/><rect x="160.7" y="307.7" width="1.6" height="1.6" fill="#3a3a3a"/><rect x="160.7" y="318.7" width="1.6" height="1.6" fill="#3a3a3a"/><rect x="160.7" y="324.7" width="1.6" height="1.6" fill="#3a3a3a"/><rect x="160.7" y="329.7" width="1.6" height="1.6" fill="#3a3a3a"/><rect x="160.7" y="341.7" width="1.6" height="1.6" fill="#3a3a3a"/><rect x="160.7" y="347.7" width="1.6" height="1.6" fill="#3a3a3a"/><rect x="160.7" y="358.7" width="1.6" height="1.6" fill="#3a3a3a"/><rect x="160.7" y="364.7" width="1.6" height="1.6" fill="#3a3a3a"/><rect x="160.7" y="375.7" width="1.6" height="1.6" fill="#3a3a3a"/><rect x="160.7" y="387.7" width="1.6" height="1.6" fill="#3a3a3a"/><rect x="160.7" y="393.7" width="1.6" height="1.6" fill="#3a3a3a"/><rect x="160.7" y="410.7" width="1.6" height="1.6" fill="#3a3a3a"/><rect x="160.7" y="416.7" width="1.6" height="1.6" fill="#3a3a3a"/><rect x="160.7" y="427.7" width="1.6" height="1.6" fill="#3a3a3a"/><rect x="160.7" y="433.7" width="1.6" height="1.6" fill="#3a3a3a"/><rect x="160.7" y="445.7" width="1.6" height="1.6" fill="#3a3a3a"/><rect x="160.7" y="450.7" width="1.6" height="1.6" fill="#3a3a3a"/><rect x="160.7" y="462.7" width="1.6" height="1.6" fill="#3a3a3a"/><rect x="160.7" y="467.7" width="1.6" height="1.6" fill="#3a3a3a"/><rect x="160.7" y="473.7" width="1.6" height="1.6" fill="#3a3a3a"/><rect x="160.7" y="485.7" width="1.6" height="1.6" fill="#3a3a3a"/><rect x="160.7" y="491.7" width="1.6" height="1.6" fill="#3a3a3a"/><rect x="232.7" y="283.7" width="1.6" height="1.6" fill="#3a3a3a"/><rect x="232.7" y="289.7" width="1.6" height="1.6" fill="#3a3a3a"/><rect x="232.7" y="301.7" width="1.6" height="1.6" fill="#3a3a3a"/><rect x="232.7" y="307.7" width="1.6" height="1.6" fill="#3a3a3a"/><rect x="232.7" y="318.7" width="1.6" height="1.6" fill="#3a3a3a"/><rect x="232.7" y="324.7" width="1.6" height="1.6" fill="#3a3a3a"/><rect x="232.7" y="329.7" width="1.6" height="1.6" fill="#3a3a3a"/><rect x="232.7" y="341.7" width="1.6" height="1.6" fill="#3a3a3a"/><rect x="232.7" y="347.7" width="1.6" height="1.6" fill="#3a3a3a"/><rect x="232.7" y="358.7" width="1.6" height="1.6" fill="#3a3a3a"/><rect x="232.7" y="364.7" width="1.6" height="1.6" fill="#3a3a3a"/><rect x="232.7" y="375.7" width="1.6" height="1.6" fill="#3a3a3a"/><rect x="232.7" y="387.7" width="1.6" height="1.6" fill="#3a3a3a"/><rect x="232.7" y="393.7" width="1.6" height="1.6" fill="#3a3a3a"/><rect x="232.7" y="410.7" width="1.6" height="1.6" fill="#3a3a3a"/><rect x="232.7" y="416.7" width="1.6" height="1.6" fill="#3a3a3a"/><rect x="232.7" y="427.7" width="1.6" height="1.6" fill="#3a3a3a"/><rect x="232.7" y="433.7" width="1.6" height="1.6" fill="#3a3a3a"/><rect x="232.7" y="445.7" width="1.6" height="1.6" fill="#3a3a3a"/><rect x="232.7" y="450.7" width="1.6" height="1.6" fill="#3a3a3a"/><rect x="232.7" y="462.7" width="1.6" height="1.6" fill="#3a3a3a"/><rect x="232.7" y="467.7" width="1.6" height="1.6" fill="#3a3a3a"/><rect x="232.7" y="473.7" width="1.6" height="1.6" fill="#3a3a3a"/><rect x="232.7" y="485.7" width="1.6" height="1.6" fill="#3a3a3a"/><rect x="232.7" y="491.7" width="1.6" height="1.6" fill="#3a3a3a"/><rect x="377.7" y="283.7" width="1.6" height="1.6" fill="#3a3a3a"/><rect x="377.7" y="289.7" width="1.6" height="1.6" fill="#3a3a3a"/><rect x="377.7" y="301.7" width="1.6" height="1.6" fill="#3a3a3a"/><rect x="377.7" y="307.7" width="1.6" height="1.6" fill="#3a3a3a"/><rect x="377.7" y="318.7" width="1.6" height="1.6" fill="#3a3a3a"/><rect x="377.7" y="324.7" width="1.6" height="1.6" fill="#3a3a3a"/><rect x="377.7" y="329.7" width="1.6" height="1.6" fill="#3a3a3a"/><rect x="377.7" y="341.7" width="1.6" height="1.6" fill="#3a3a3a"/><rect x="377.7" y="347.7" width="1.6" height="1.6" fill="#3a3a3a"/><rect x="377.7" y="358.7" width="1.6" height="1.6" fill="#3a3a3a"/><rect x="377.7" y="364.7" width="1.6" height="1.6" fill="#3a3a3a"/><rect x="377.7" y="375.7" width="1.6" height="1.6" fill="#3a3a3a"/><rect x="377.7" y="387.7" width="1.6" height="1.6" fill="#3a3a3a"/><rect x="377.7" y="393.7" width="1.6" height="1.6" fill="#3a3a3a"/><rect x="377.7" y="410.7" width="1.6" height="1.6" fill="#3a3a3a"/><rect x="377.7" y="416.7" width="1.6" height="1.6" fill="#3a3a3a"/><rect x="377.7" y="427.7" width="1.6" height="1.6" fill="#3a3a3a"/><rect x="377.7" y="433.7" width="1.6" height="1.6" fill="#3a3a3a"/><rect x="377.7" y="445.7" width="1.6" height="1.6" fill="#3a3a3a"/><rect x="377.7" y="450.7" width="1.6" height="1.6" fill="#3a3a3a"/><rect x="377.7" y="462.7" width="1.6" height="1.6" fill="#3a3a3a"/><rect x="377.7" y="467.7" width="1.6" height="1.6" fill="#3a3a3a"/><rect x="377.7" y="473.7" width="1.6" height="1.6" fill="#3a3a3a"/><rect x="377.7" y="485.7" width="1.6" height="1.6" fill="#3a3a3a"/><rect x="377.7" y="491.7" width="1.6" height="1.6" fill="#3a3a3a"/><rect x="449.7" y="283.7" width="1.6" height="1.6" fill="#3a3a3a"/><rect x="449.7" y="289.7" width="1.6" height="1.6" fill="#3a3a3a"/><rect x="449.7" y="301.7" width="1.6" height="1.6" fill="#3a3a3a"/><rect x="449.7" y="307.7" width="1.6" height="1.6" fill="#3a3a3a"/><rect x="449.7" y="318.7" width="1.6" height="1.6" fill="#3a3a3a"/><rect x="449.7" y="324.7" width="1.6" height="1.6" fill="#3a3a3a"/><rect x="449.7" y="329.7" width="1.6" height="1.6" fill="#3a3a3a"/><rect x="449.7" y="341.7" width="1.6" height="1.6" fill="#3a3a3a"/><rect x="449.7" y="347.7" width="1.6" height="1.6" fill="#3a3a3a"/><rect x="449.7" y="358.7" width="1.6" height="1.6" fill="#3a3a3a"/><rect x="449.7" y="364.7" width="1.6" height="1.6" fill="#3a3a3a"/><rect x="449.7" y="375.7" width="1.6" height="1.6" fill="#3a3a3a"/><rect x="449.7" y="387.7" width="1.6" height="1.6" fill="#3a3a3a"/><rect x="449.7" y="393.7" width="1.6" height="1.6" fill="#3a3a3a"/><rect x="449.7" y="410.7" width="1.6" height="1.6" fill="#3a3a3a"/><rect x="449.7" y="416.7" width="1.6" height="1.6" fill="#3a3a3a"/><rect x="449.7" y="427.7" width="1.6" height="1.6" fill="#3a3a3a"/><rect x="449.7" y="433.7" width="1.6" height="1.6" fill="#3a3a3a"/><rect x="449.7" y="445.7" width="1.6" height="1.6" fill="#3a3a3a"/><rect x="449.7" y="450.7" width="1.6" height="1.6" fill="#3a3a3a"/><rect x="449.7" y="462.7" width="1.6" height="1.6" fill="#3a3a3a"/><rect x="449.7" y="467.7" width="1.6" height="1.6" fill="#3a3a3a"/><rect x="449.7" y="473.7" width="1.6" height="1.6" fill="#3a3a3a"/><rect x="449.7" y="485.7" width="1.6" height="1.6" fill="#3a3a3a"/><rect x="449.7" y="491.7" width="1.6" height="1.6" fill="#3a3a3a"/><rect x="521.7" y="283.7" width="1.6" height="1.6" fill="#3a3a3a"/><rect x="521.7" y="289.7" width="1.6" height="1.6" fill="#3a3a3a"/><rect x="521.7" y="301.7" width="1.6" height="1.6" fill="#3a3a3a"/><rect x="521.7" y="307.7" width="1.6" height="1.6" fill="#3a3a3a"/><rect x="521.7" y="318.7" width="1.6" height="1.6" fill="#3a3a3a"/><rect x="521.7" y="324.7" width="1.6" height="1.6" fill="#3a3a3a"/><rect x="521.7" y="329.7" width="1.6" height="1.6" fill="#3a3a3a"/><rect x="521.7" y="341.7" width="1.6" height="1.6" fill="#3a3a3a"/><rect x="521.7" y="347.7" width="1.6" height="1.6" fill="#3a3a3a"/><rect x="521.7" y="358.7" width="1.6" height="1.6" fill="#3a3a3a"/><rect x="521.7" y="364.7" width="1.6" height="1.6" fill="#3a3a3a"/><rect x="521.7" y="375.7" width="1.6" height="1.6" fill="#3a3a3a"/><rect x="521.7" y="387.7" width="1.6" height="1.6" fill="#3a3a3a"/><rect x="521.7" y="393.7" width="1.6" height="1.6" fill="#3a3a3a"/><rect x="521.7" y="410.7" width="1.6" height="1.6" fill="#3a3a3a"/><rect x="521.7" y="416.7" width="1.6" height="1.6" fill="#3a3a3a"/><rect x="521.7" y="427.7" width="1.6" height="1.6" fill="#3a3a3a"/><rect x="521.7" y="433.7" width="1.6" height="1.6" fill="#3a3a3a"/><rect x="521.7" y="445.7" width="1.6" height="1.6" fill="#3a3a3a"/><rect x="521.7" y="450.7" width="1.6" height="1.6" fill="#3a3a3a"/><rect x="521.7" y="462.7" width="1.6" height="1.6" fill="#3a3a3a"/><rect x="521.7" y="467.7" width="1.6" height="1.6" fill="#3a3a3a"/><rect x="521.7" y="473.7" width="1.6" height="1.6" fill="#3a3a3a"/><rect x="521.7" y="485.7" width="1.6" height="1.6" fill="#3a3a3a"/><rect x="521.7" y="491.7" width="1.6" height="1.6" fill="#3a3a3a"/><rect x="594.7" y="283.7" width="1.6" height="1.6" fill="#3a3a3a"/><rect x="594.7" y="289.7" width="1.6" height="1.6" fill="#3a3a3a"/><rect x="594.7" y="301.7" width="1.6" height="1.6" fill="#3a3a3a"/><rect x="594.7" y="307.7" width="1.6" height="1.6" fill="#3a3a3a"/><rect x="594.7" y="318.7" width="1.6" height="1.6" fill="#3a3a3a"/><rect x="594.7" y="324.7" width="1.6" height="1.6" fill="#3a3a3a"/><rect x="594.7" y="329.7" width="1.6" height="1.6" fill="#3a3a3a"/><rect x="594.7" y="341.7" width="1.6" height="1.6" fill="#3a3a3a"/><rect x="594.7" y="347.7" width="1.6" height="1.6" fill="#3a3a3a"/><rect x="594.7" y="358.7" width="1.6" height="1.6" fill="#3a3a3a"/><rect x="594.7" y="364.7" width="1.6" height="1.6" fill="#3a3a3a"/><rect x="594.7" y="375.7" width="1.6" height="1.6" fill="#3a3a3a"/><rect x="594.7" y="387.7" width="1.6" height="1.6" fill="#3a3a3a"/><rect x="594.7" y="393.7" width="1.6" height="1.6" fill="#3a3a3a"/><rect x="594.7" y="410.7" width="1.6" height="1.6" fill="#3a3a3a"/><rect x="594.7" y="416.7" width="1.6" height="1.6" fill="#3a3a3a"/><rect x="594.7" y="427.7" width="1.6" height="1.6" fill="#3a3a3a"/><rect x="594.7" y="433.7" width="1.6" height="1.6" fill="#3a3a3a"/><rect x="594.7" y="445.7" width="1.6" height="1.6" fill="#3a3a3a"/><rect x="594.7" y="450.7" width="1.6" height="1.6" fill="#3a3a3a"/><rect x="594.7" y="462.7" width="1.6" height="1.6" fill="#3a3a3a"/><rect x="594.7" y="467.7" width="1.6" height="1.6" fill="#3a3a3a"/><rect x="594.7" y="473.7" width="1.6" height="1.6" fill="#3a3a3a"/><rect x="594.7" y="485.7" width="1.6" height="1.6" fill="#3a3a3a"/><rect x="594.7" y="491.7" width="1.6" height="1.6" fill="#3a3a3a"/><rect x="22.7" y="329.7" width="1.6" height="1.6" fill="#3a3a3a"/><rect x="29.7" y="329.7" width="1.6" height="1.6" fill="#3a3a3a"/><rect x="37.7" y="329.7" width="1.6" height="1.6" fill="#3a3a3a"/><rect x="51.7" y="329.7" width="1.6" height="1.6" fill="#3a3a3a"/><rect x="58.7" y="329.7" width="1.6" height="1.6" fill="#3a3a3a"/><rect x="73.7" y="329.7" width="1.6" height="1.6" fill="#3a3a3a"/><rect x="80.7" y="329.7" width="1.6" height="1.6" fill="#3a3a3a"/><rect x="95.7" y="329.7" width="1.6" height="1.6" fill="#3a3a3a"/><rect x="102.7" y="329.7" width="1.6" height="1.6" fill="#3a3a3a"/><rect x="116.7" y="329.7" width="1.6" height="1.6" fill="#3a3a3a"/><rect x="131.7" y="329.7" width="1.6" height="1.6" fill="#3a3a3a"/><rect x="138.7" y="329.7" width="1.6" height="1.6" fill="#3a3a3a"/><rect x="152.7" y="329.7" width="1.6" height="1.6" fill="#3a3a3a"/><rect x="160.7" y="329.7" width="1.6" height="1.6" fill="#3a3a3a"/><rect x="174.7" y="329.7" width="1.6" height="1.6" fill="#3a3a3a"/><rect x="181.7" y="329.7" width="1.6" height="1.6" fill="#3a3a3a"/><rect x="196.7" y="329.7" width="1.6" height="1.6" fill="#3a3a3a"/><rect x="203.7" y="329.7" width="1.6" height="1.6" fill="#3a3a3a"/><rect x="217.7" y="329.7" width="1.6" height="1.6" fill="#3a3a3a"/><rect x="225.7" y="329.7" width="1.6" height="1.6" fill="#3a3a3a"/><rect x="232.7" y="329.7" width="1.6" height="1.6" fill="#3a3a3a"/><rect x="239.7" y="329.7" width="1.6" height="1.6" fill="#3a3a3a"/><rect x="254.7" y="329.7" width="1.6" height="1.6" fill="#3a3a3a"/><rect x="261.7" y="329.7" width="1.6" height="1.6" fill="#3a3a3a"/><rect x="275.7" y="329.7" width="1.6" height="1.6" fill="#3a3a3a"/><rect x="290.7" y="329.7" width="1.6" height="1.6" fill="#3a3a3a"/><rect x="297.7" y="329.7" width="1.6" height="1.6" fill="#3a3a3a"/><rect x="312.7" y="329.7" width="1.6" height="1.6" fill="#3a3a3a"/><rect x="319.7" y="329.7" width="1.6" height="1.6" fill="#3a3a3a"/><rect x="333.7" y="329.7" width="1.6" height="1.6" fill="#3a3a3a"/><rect x="340.7" y="329.7" width="1.6" height="1.6" fill="#3a3a3a"/><rect x="355.7" y="329.7" width="1.6" height="1.6" fill="#3a3a3a"/><rect x="369.7" y="329.7" width="1.6" height="1.6" fill="#3a3a3a"/><rect x="377.7" y="329.7" width="1.6" height="1.6" fill="#3a3a3a"/><rect x="391.7" y="329.7" width="1.6" height="1.6" fill="#3a3a3a"/><rect x="398.7" y="329.7" width="1.6" height="1.6" fill="#3a3a3a"/><rect x="413.7" y="329.7" width="1.6" height="1.6" fill="#3a3a3a"/><rect x="420.7" y="329.7" width="1.6" height="1.6" fill="#3a3a3a"/><rect x="434.7" y="329.7" width="1.6" height="1.6" fill="#3a3a3a"/><rect x="449.7" y="329.7" width="1.6" height="1.6" fill="#3a3a3a"/><rect x="456.7" y="329.7" width="1.6" height="1.6" fill="#3a3a3a"/><rect x="471.7" y="329.7" width="1.6" height="1.6" fill="#3a3a3a"/><rect x="478.7" y="329.7" width="1.6" height="1.6" fill="#3a3a3a"/><rect x="492.7" y="329.7" width="1.6" height="1.6" fill="#3a3a3a"/><rect x="500.7" y="329.7" width="1.6" height="1.6" fill="#3a3a3a"/><rect x="514.7" y="329.7" width="1.6" height="1.6" fill="#3a3a3a"/><rect x="521.7" y="329.7" width="1.6" height="1.6" fill="#3a3a3a"/><rect x="536.7" y="329.7" width="1.6" height="1.6" fill="#3a3a3a"/><rect x="543.7" y="329.7" width="1.6" height="1.6" fill="#3a3a3a"/><rect x="557.7" y="329.7" width="1.6" height="1.6" fill="#3a3a3a"/><rect x="572.7" y="329.7" width="1.6" height="1.6" fill="#3a3a3a"/><rect x="579.7" y="329.7" width="1.6" height="1.6" fill="#3a3a3a"/><rect x="594.7" y="329.7" width="1.6" height="1.6" fill="#3a3a3a"/><rect x="601.7" y="329.7" width="1.6" height="1.6" fill="#3a3a3a"/><rect x="615.7" y="329.7" width="1.6" height="1.6" fill="#3a3a3a"/><rect x="630.7" y="329.7" width="1.6" height="1.6" fill="#3a3a3a"/><rect x="637.7" y="329.7" width="1.6" height="1.6" fill="#3a3a3a"/><rect x="651.7" y="329.7" width="1.6" height="1.6" fill="#3a3a3a"/><rect x="659.7" y="329.7" width="1.6" height="1.6" fill="#3a3a3a"/><rect x="673.7" y="329.7" width="1.6" height="1.6" fill="#3a3a3a"/><rect x="680.7" y="329.7" width="1.6" height="1.6" fill="#3a3a3a"/><rect x="695.7" y="329.7" width="1.6" height="1.6" fill="#3a3a3a"/><rect x="702.7" y="329.7" width="1.6" height="1.6" fill="#3a3a3a"/><rect x="717.7" y="329.7" width="1.6" height="1.6" fill="#3a3a3a"/><rect x="724.7" y="329.7" width="1.6" height="1.6" fill="#3a3a3a"/><rect x="22.7" y="387.7" width="1.6" height="1.6" fill="#3a3a3a"/><rect x="29.7" y="387.7" width="1.6" height="1.6" fill="#3a3a3a"/><rect x="37.7" y="387.7" width="1.6" height="1.6" fill="#3a3a3a"/><rect x="51.7" y="387.7" width="1.6" height="1.6" fill="#3a3a3a"/><rect x="58.7" y="387.7" width="1.6" height="1.6" fill="#3a3a3a"/><rect x="73.7" y="387.7" width="1.6" height="1.6" fill="#3a3a3a"/><rect x="80.7" y="387.7" width="1.6" height="1.6" fill="#3a3a3a"/><rect x="95.7" y="387.7" width="1.6" height="1.6" fill="#3a3a3a"/><rect x="102.7" y="387.7" width="1.6" height="1.6" fill="#3a3a3a"/><rect x="116.7" y="387.7" width="1.6" height="1.6" fill="#3a3a3a"/><rect x="131.7" y="387.7" width="1.6" height="1.6" fill="#3a3a3a"/><rect x="138.7" y="387.7" width="1.6" height="1.6" fill="#3a3a3a"/><rect x="152.7" y="387.7" width="1.6" height="1.6" fill="#3a3a3a"/><rect x="160.7" y="387.7" width="1.6" height="1.6" fill="#3a3a3a"/><rect x="174.7" y="387.7" width="1.6" height="1.6" fill="#3a3a3a"/><rect x="181.7" y="387.7" width="1.6" height="1.6" fill="#3a3a3a"/><rect x="196.7" y="387.7" width="1.6" height="1.6" fill="#3a3a3a"/><rect x="203.7" y="387.7" width="1.6" height="1.6" fill="#3a3a3a"/><rect x="217.7" y="387.7" width="1.6" height="1.6" fill="#3a3a3a"/><rect x="225.7" y="387.7" width="1.6" height="1.6" fill="#3a3a3a"/><rect x="232.7" y="387.7" width="1.6" height="1.6" fill="#3a3a3a"/><rect x="239.7" y="387.7" width="1.6" height="1.6" fill="#3a3a3a"/><rect x="254.7" y="387.7" width="1.6" height="1.6" fill="#3a3a3a"/><rect x="261.7" y="387.7" width="1.6" height="1.6" fill="#3a3a3a"/><rect x="275.7" y="387.7" width="1.6" height="1.6" fill="#3a3a3a"/><rect x="290.7" y="387.7" width="1.6" height="1.6" fill="#3a3a3a"/><rect x="297.7" y="387.7" width="1.6" height="1.6" fill="#3a3a3a"/><rect x="312.7" y="387.7" width="1.6" height="1.6" fill="#3a3a3a"/><rect x="319.7" y="387.7" width="1.6" height="1.6" fill="#3a3a3a"/><rect x="333.7" y="387.7" width="1.6" height="1.6" fill="#3a3a3a"/><rect x="340.7" y="387.7" width="1.6" height="1.6" fill="#3a3a3a"/><rect x="355.7" y="387.7" width="1.6" height="1.6" fill="#3a3a3a"/><rect x="369.7" y="387.7" width="1.6" height="1.6" fill="#3a3a3a"/><rect x="377.7" y="387.7" width="1.6" height="1.6" fill="#3a3a3a"/><rect x="391.7" y="387.7" width="1.6" height="1.6" fill="#3a3a3a"/><rect x="398.7" y="387.7" width="1.6" height="1.6" fill="#3a3a3a"/><rect x="413.7" y="387.7" width="1.6" height="1.6" fill="#3a3a3a"/><rect x="420.7" y="387.7" width="1.6" height="1.6" fill="#3a3a3a"/><rect x="434.7" y="387.7" width="1.6" height="1.6" fill="#3a3a3a"/><rect x="449.7" y="387.7" width="1.6" height="1.6" fill="#3a3a3a"/><rect x="456.7" y="387.7" width="1.6" height="1.6" fill="#3a3a3a"/><rect x="471.7" y="387.7" width="1.6" height="1.6" fill="#3a3a3a"/><rect x="478.7" y="387.7" width="1.6" height="1.6" fill="#3a3a3a"/><rect x="492.7" y="387.7" width="1.6" height="1.6" fill="#3a3a3a"/><rect x="500.7" y="387.7" width="1.6" height="1.6" fill="#3a3a3a"/><rect x="514.7" y="387.7" width="1.6" height="1.6" fill="#3a3a3a"/><rect x="521.7" y="387.7" width="1.6" height="1.6" fill="#3a3a3a"/><rect x="536.7" y="387.7" width="1.6" height="1.6" fill="#3a3a3a"/><rect x="543.7" y="387.7" width="1.6" height="1.6" fill="#3a3a3a"/><rect x="557.7" y="387.7" width="1.6" height="1.6" fill="#3a3a3a"/><rect x="572.7" y="387.7" width="1.6" height="1.6" fill="#3a3a3a"/><rect x="579.7" y="387.7" width="1.6" height="1.6" fill="#3a3a3a"/><rect x="594.7" y="387.7" width="1.6" height="1.6" fill="#3a3a3a"/><rect x="601.7" y="387.7" width="1.6" height="1.6" fill="#3a3a3a"/><rect x="615.7" y="387.7" width="1.6" height="1.6" fill="#3a3a3a"/><rect x="630.7" y="387.7" width="1.6" height="1.6" fill="#3a3a3a"/><rect x="637.7" y="387.7" width="1.6" height="1.6" fill="#3a3a3a"/><rect x="651.7" y="387.7" width="1.6" height="1.6" fill="#3a3a3a"/><rect x="659.7" y="387.7" width="1.6" height="1.6" fill="#3a3a3a"/><rect x="673.7" y="387.7" width="1.6" height="1.6" fill="#3a3a3a"/><rect x="680.7" y="387.7" width="1.6" height="1.6" fill="#3a3a3a"/><rect x="695.7" y="387.7" width="1.6" height="1.6" fill="#3a3a3a"/><rect x="702.7" y="387.7" width="1.6" height="1.6" fill="#3a3a3a"/><rect x="717.7" y="387.7" width="1.6" height="1.6" fill="#3a3a3a"/><rect x="724.7" y="387.7" width="1.6" height="1.6" fill="#3a3a3a"/><rect x="22.7" y="445.7" width="1.6" height="1.6" fill="#3a3a3a"/><rect x="29.7" y="445.7" width="1.6" height="1.6" fill="#3a3a3a"/><rect x="37.7" y="445.7" width="1.6" height="1.6" fill="#3a3a3a"/><rect x="51.7" y="445.7" width="1.6" height="1.6" fill="#3a3a3a"/><rect x="58.7" y="445.7" width="1.6" height="1.6" fill="#3a3a3a"/><rect x="73.7" y="445.7" width="1.6" height="1.6" fill="#3a3a3a"/><rect x="80.7" y="445.7" width="1.6" height="1.6" fill="#3a3a3a"/><rect x="95.7" y="445.7" width="1.6" height="1.6" fill="#3a3a3a"/><rect x="102.7" y="445.7" width="1.6" height="1.6" fill="#3a3a3a"/><rect x="116.7" y="445.7" width="1.6" height="1.6" fill="#3a3a3a"/><rect x="131.7" y="445.7" width="1.6" height="1.6" fill="#3a3a3a"/><rect x="138.7" y="445.7" width="1.6" height="1.6" fill="#3a3a3a"/><rect x="152.7" y="445.7" width="1.6" height="1.6" fill="#3a3a3a"/><rect x="160.7" y="445.7" width="1.6" height="1.6" fill="#3a3a3a"/><rect x="174.7" y="445.7" width="1.6" height="1.6" fill="#3a3a3a"/><rect x="181.7" y="445.7" width="1.6" height="1.6" fill="#3a3a3a"/><rect x="196.7" y="445.7" width="1.6" height="1.6" fill="#3a3a3a"/><rect x="203.7" y="445.7" width="1.6" height="1.6" fill="#3a3a3a"/><rect x="217.7" y="445.7" width="1.6" height="1.6" fill="#3a3a3a"/><rect x="225.7" y="445.7" width="1.6" height="1.6" fill="#3a3a3a"/><rect x="232.7" y="445.7" width="1.6" height="1.6" fill="#3a3a3a"/><rect x="239.7" y="445.7" width="1.6" height="1.6" fill="#3a3a3a"/><rect x="254.7" y="445.7" width="1.6" height="1.6" fill="#3a3a3a"/><rect x="261.7" y="445.7" width="1.6" height="1.6" fill="#3a3a3a"/><rect x="275.7" y="445.7" width="1.6" height="1.6" fill="#3a3a3a"/><rect x="290.7" y="445.7" width="1.6" height="1.6" fill="#3a3a3a"/><rect x="297.7" y="445.7" width="1.6" height="1.6" fill="#3a3a3a"/><rect x="312.7" y="445.7" width="1.6" height="1.6" fill="#3a3a3a"/><rect x="319.7" y="445.7" width="1.6" height="1.6" fill="#3a3a3a"/><rect x="333.7" y="445.7" width="1.6" height="1.6" fill="#3a3a3a"/><rect x="340.7" y="445.7" width="1.6" height="1.6" fill="#3a3a3a"/><rect x="355.7" y="445.7" width="1.6" height="1.6" fill="#3a3a3a"/><rect x="369.7" y="445.7" width="1.6" height="1.6" fill="#3a3a3a"/><rect x="377.7" y="445.7" width="1.6" height="1.6" fill="#3a3a3a"/><rect x="391.7" y="445.7" width="1.6" height="1.6" fill="#3a3a3a"/><rect x="398.7" y="445.7" width="1.6" height="1.6" fill="#3a3a3a"/><rect x="413.7" y="445.7" width="1.6" height="1.6" fill="#3a3a3a"/><rect x="420.7" y="445.7" width="1.6" height="1.6" fill="#3a3a3a"/><rect x="434.7" y="445.7" width="1.6" height="1.6" fill="#3a3a3a"/><rect x="449.7" y="445.7" width="1.6" height="1.6" fill="#3a3a3a"/><rect x="456.7" y="445.7" width="1.6" height="1.6" fill="#3a3a3a"/><rect x="471.7" y="445.7" width="1.6" height="1.6" fill="#3a3a3a"/><rect x="478.7" y="445.7" width="1.6" height="1.6" fill="#3a3a3a"/><rect x="492.7" y="445.7" width="1.6" height="1.6" fill="#3a3a3a"/><rect x="500.7" y="445.7" width="1.6" height="1.6" fill="#3a3a3a"/><rect x="514.7" y="445.7" width="1.6" height="1.6" fill="#3a3a3a"/><rect x="521.7" y="445.7" width="1.6" height="1.6" fill="#3a3a3a"/><rect x="536.7" y="445.7" width="1.6" height="1.6" fill="#3a3a3a"/><rect x="543.7" y="445.7" width="1.6" height="1.6" fill="#3a3a3a"/><rect x="557.7" y="445.7" width="1.6" height="1.6" fill="#3a3a3a"/><rect x="572.7" y="445.7" width="1.6" height="1.6" fill="#3a3a3a"/><rect x="579.7" y="445.7" width="1.6" height="1.6" fill="#3a3a3a"/><rect x="594.7" y="445.7" width="1.6" height="1.6" fill="#3a3a3a"/><rect x="601.7" y="445.7" width="1.6" height="1.6" fill="#3a3a3a"/><rect x="615.7" y="445.7" width="1.6" height="1.6" fill="#3a3a3a"/><rect x="630.7" y="445.7" width="1.6" height="1.6" fill="#3a3a3a"/><rect x="637.7" y="445.7" width="1.6" height="1.6" fill="#3a3a3a"/><rect x="651.7" y="445.7" width="1.6" height="1.6" fill="#3a3a3a"/><rect x="659.7" y="445.7" width="1.6" height="1.6" fill="#3a3a3a"/><rect x="673.7" y="445.7" width="1.6" height="1.6" fill="#3a3a3a"/><rect x="680.7" y="445.7" width="1.6" height="1.6" fill="#3a3a3a"/><rect x="695.7" y="445.7" width="1.6" height="1.6" fill="#3a3a3a"/><rect x="702.7" y="445.7" width="1.6" height="1.6" fill="#3a3a3a"/><rect x="717.7" y="445.7" width="1.6" height="1.6" fill="#3a3a3a"/><rect x="724.7" y="445.7" width="1.6" height="1.6" fill="#3a3a3a"/></g><rect x="15" y="41" width="2" height="462" fill="#8e8e8e"/><rect x="17" y="271" width="723" height="2" fill="#8e8e8e"/><rect x="17" y="40.5" width="723" height="1.2" fill="#5a5a5a"/><rect x="738.5" y="41" width="1.5" height="462" fill="#6a6a6a"/><rect x="17" y="502" width="723" height="1" fill="#2a2a2a"/><path d="M185 53.5 H474.5 V271" fill="none" stroke="#24220c" stroke-width="1"/><rect x="184" y="41" width="2" height="11.5" fill="#e4e4e4"/><rect x="184" y="52.5" width="2" height="218.5" fill="#e4dc00"/><line x1="203.2" y1="41" x2="203.2" y2="271" stroke="#d8d8d8" stroke-width="1.8" stroke-dasharray="4.5 2.7"/><line x1="551" y1="41" x2="551" y2="271" stroke="#6a6a6a" stroke-width="1" stroke-dasharray="1 3"/><line x1="63.2" y1="273" x2="63.2" y2="502" stroke="#d8d8d8" stroke-width="1.8" stroke-dasharray="4.5 2.7"/><rect x="135" y="136" width="77" height="2.3" fill="#f8f628"/><path d="M202.50 135.50 L202.75 133.16 L203.00 130.81 L203.25 128.47 L203.50 128.67 L203.75 129.50 L204.00 130.33 L204.25 131.17 L204.50 132.00 L204.75 132.31 L205.00 132.62 L205.25 132.94 L205.50 133.25 L205.75 133.56 L206.00 133.88 L206.25 134.19 L206.50 134.50 L206.50 139.50 L206.25 139.81 L206.00 140.12 L205.75 140.44 L205.50 140.75 L205.25 141.06 L205.00 141.38 L204.75 141.69 L204.50 142.00 L204.25 142.83 L204.00 143.67 L203.75 144.50 L203.50 145.33 L203.25 145.53 L203.00 143.19 L202.75 140.84 L202.50 138.50Z" fill="#f8f628" /><path d="M206.00 133.93 L206.50 134.33 L207.00 133.31 L207.50 134.18 L208.00 133.65 L208.50 133.58 L209.00 133.46 L209.50 133.82 L210.00 134.00 L210.50 134.28 L211.00 134.13 L211.50 134.43 L211.50 140.56 L211.00 139.67 L210.50 140.73 L210.00 140.73 L209.50 140.77 L209.00 140.46 L208.50 140.29 L208.00 140.26 L207.50 140.30 L207.00 139.91 L206.50 139.64 L206.00 140.52Z" fill="#f8f628" /><path d="M210.60 135.00 L210.85 124.58 L211.10 114.17 L211.35 109.10 L211.60 107.60 L211.85 106.10 L212.10 104.60 L212.35 103.51 L212.60 104.05 L212.85 104.59 L213.10 105.13 L213.35 105.67 L213.60 106.54 L213.85 107.88 L214.10 109.23 L214.35 110.58 L214.60 111.92 L214.85 113.46 L215.10 115.75 L215.35 118.04 L215.60 120.33 L215.85 122.62 L216.10 124.62 L216.35 126.19 L216.60 127.75 L216.85 129.31 L217.10 130.88 L217.35 131.50 L217.60 131.50 L217.85 131.50 L217.85 142.50 L217.60 142.50 L217.35 142.50 L217.10 143.12 L216.85 144.69 L216.60 146.25 L216.35 147.81 L216.10 149.38 L215.85 151.38 L215.60 153.67 L215.35 155.96 L215.10 158.25 L214.85 160.54 L214.60 162.08 L214.35 163.42 L214.10 164.77 L213.85 166.12 L213.60 167.46 L213.35 168.33 L213.10 168.87 L212.85 169.41 L212.60 169.95 L212.35 170.49 L212.10 169.40 L211.85 167.90 L211.60 166.40 L211.35 164.90 L211.10 159.83 L210.85 149.42 L210.60 139.00Z" fill="#f8f628" /><path d="M216.50 133.00 L217.00 131.62 L217.50 130.78 L218.00 130.09 L218.50 129.51 L219.00 129.02 L219.50 128.62 L220.00 128.32 L220.50 128.12 L221.00 128.01 L221.50 128.01 L222.00 128.12 L222.50 128.34 L223.00 128.66 L223.50 129.11 L224.00 129.67 L224.50 130.37 L225.00 131.21 L225.50 132.27 L226.00 134.00 L226.00 140.00 L225.50 141.73 L225.00 142.79 L224.50 143.63 L224.00 144.33 L223.50 144.89 L223.00 145.34 L222.50 145.66 L222.00 145.88 L221.50 145.99 L221.00 145.99 L220.50 145.88 L220.00 145.68 L219.50 145.38 L219.00 144.98 L218.50 144.49 L218.00 143.91 L217.50 143.22 L217.00 142.38 L216.50 141.00Z" fill="#f8f628" /><path d="M225.50 134.00 L226.00 133.29 L226.50 132.59 L227.00 131.92 L227.50 131.30 L228.00 130.73 L228.50 130.22 L229.00 129.79 L229.50 129.45 L230.00 129.20 L230.50 129.05 L231.00 129.00 L231.50 129.02 L232.00 129.07 L232.50 129.15 L233.00 129.27 L233.50 129.41 L234.00 129.59 L234.50 129.79 L235.00 130.03 L235.50 130.28 L236.00 130.56 L236.50 130.85 L237.00 131.16 L237.50 131.48 L238.00 131.82 L238.50 132.16 L239.00 132.50 L239.00 141.50 L238.50 141.84 L238.00 142.18 L237.50 142.52 L237.00 142.84 L236.50 143.15 L236.00 143.44 L235.50 143.72 L235.00 143.97 L234.50 144.21 L234.00 144.41 L233.50 144.59 L233.00 144.73 L232.50 144.85 L232.00 144.93 L231.50 144.98 L231.00 145.00 L230.50 144.95 L230.00 144.80 L229.50 144.55 L229.00 144.21 L228.50 143.78 L228.00 143.27 L227.50 142.70 L227.00 142.08 L226.50 141.41 L226.00 140.71 L225.50 140.00Z" fill="#f8f628" /><path d="M236.00 132.96 L237.00 132.44 L238.00 132.36 L239.00 131.73 L240.00 131.68 L241.00 131.56 L242.00 131.74 L243.00 131.39 L244.00 132.14 L245.00 132.05 L246.00 131.86 L247.00 131.28 L248.00 131.51 L249.00 131.67 L250.00 132.03 L251.00 131.31 L252.00 131.38 L253.00 132.24 L254.00 131.36 L255.00 131.59 L256.00 131.63 L257.00 131.87 L258.00 131.48 L259.00 131.42 L260.00 132.02 L261.00 131.41 L262.00 131.74 L263.00 132.18 L264.00 132.23 L265.00 131.89 L266.00 131.99 L267.00 131.94 L268.00 132.02 L269.00 132.12 L270.00 131.69 L271.00 132.08 L272.00 132.62 L273.00 132.61 L274.00 132.01 L275.00 131.90 L276.00 132.47 L277.00 132.64 L278.00 132.61 L279.00 132.01 L280.00 131.94 L281.00 132.75 L282.00 132.10 L283.00 132.92 L284.00 132.09 L285.00 132.22 L286.00 132.77 L286.00 141.74 L285.00 141.74 L284.00 141.77 L283.00 141.14 L282.00 141.10 L281.00 141.07 L280.00 141.20 L279.00 141.68 L278.00 141.69 L277.00 141.82 L276.00 142.08 L275.00 142.03 L274.00 141.72 L273.00 142.07 L272.00 141.69 L271.00 142.23 L270.00 141.80 L269.00 142.11 L268.00 141.69 L267.00 142.17 L266.00 142.21 L265.00 141.91 L264.00 142.19 L263.00 141.98 L262.00 142.24 L261.00 141.85 L260.00 142.08 L259.00 142.26 L258.00 142.04 L257.00 142.08 L256.00 142.37 L255.00 142.04 L254.00 142.23 L253.00 142.59 L252.00 141.81 L251.00 141.87 L250.00 141.75 L249.00 142.23 L248.00 142.29 L247.00 142.04 L246.00 142.63 L245.00 141.78 L244.00 142.59 L243.00 142.58 L242.00 142.61 L241.00 141.99 L240.00 142.58 L239.00 142.39 L238.00 141.59 L237.00 141.91 L236.00 141.22Z" fill="#f8f628" /><path d="M284.00 132.50 L284.50 131.75 L285.00 131.00 L285.50 130.25 L286.00 129.50 L286.50 129.46 L287.00 129.42 L287.50 129.38 L288.00 129.33 L288.50 129.29 L289.00 129.25 L289.50 129.21 L290.00 129.17 L290.50 129.12 L291.00 129.08 L291.50 129.04 L292.00 129.00 L292.50 129.10 L293.00 129.20 L293.50 129.30 L294.00 129.40 L294.50 129.50 L295.00 129.60 L295.50 129.70 L296.00 129.80 L296.50 129.90 L297.00 130.00 L297.00 144.00 L296.50 144.10 L296.00 144.20 L295.50 144.30 L295.00 144.40 L294.50 144.50 L294.00 144.60 L293.50 144.70 L293.00 144.80 L292.50 144.90 L292.00 145.00 L291.50 144.96 L291.00 144.92 L290.50 144.88 L290.00 144.83 L289.50 144.79 L289.00 144.75 L288.50 144.71 L288.00 144.67 L287.50 144.62 L287.00 144.58 L286.50 144.54 L286.00 144.50 L285.50 143.75 L285.00 143.00 L284.50 142.25 L284.00 141.50Z" fill="#f8f628" /><path d="M296.00 137.00 L296.25 135.67 L296.50 134.39 L296.75 133.20 L297.00 132.13 L297.25 131.22 L297.50 130.51 L297.75 130.01 L298.00 129.74 L298.25 129.72 L298.50 129.94 L298.75 130.39 L299.00 131.06 L299.25 131.93 L299.50 132.97 L299.75 134.14 L300.00 135.41 L300.25 136.73 L300.50 138.06 L300.75 139.36 L301.00 140.57 L301.25 141.67 L301.50 142.61 L301.75 143.37 L302.00 143.91 L302.25 144.22 L302.50 144.30 L302.75 144.13 L303.00 143.72 L303.25 143.09 L303.50 142.26 L303.75 141.25 L304.00 140.10 L304.25 138.85 L304.50 137.53 L304.75 136.20 L305.00 134.90 L305.25 133.66 L305.50 132.54 L305.75 131.56 L306.00 130.77 L306.25 130.18 L306.50 129.82 L306.75 129.70 L307.00 129.82 L307.25 130.18 L307.50 130.77 L307.75 131.56 L308.00 132.54 L308.25 133.66 L308.50 134.90 L308.75 136.20 L309.00 137.53 L309.25 138.85 L309.50 140.10 L309.75 141.25 L310.00 142.26 L310.25 143.09 L310.50 143.72 L310.75 144.13 L311.00 144.30 L311.25 144.22 L311.50 143.91 L311.75 143.37 L312.00 142.61 L312.25 141.67 L312.50 140.57 L312.75 139.36 L313.00 138.06 L313.25 136.73 L313.50 135.41 L313.75 134.14 L314.00 132.97 L314.25 131.93 L314.50 131.06 L314.75 130.39 L315.00 129.94 L315.25 129.72 L315.50 129.74 L315.75 130.01 L316.00 130.51 L316.25 131.22 L316.50 132.13 L316.75 133.20 L317.00 134.39 L317.25 135.67 L317.50 137.00 L317.75 138.33 L318.00 139.61 L318.25 140.80 L318.50 141.87 L318.75 142.78 L319.00 143.49 L319.25 143.99 L319.50 144.26 L319.75 144.28 L320.00 144.06 L320.25 143.61 L320.50 142.94 L320.75 142.07 L321.00 141.03 L321.25 139.86 L321.50 138.59 L321.75 137.27 L322.00 135.94" fill="none" stroke="#f8f628" stroke-width="1.9" stroke-linejoin="round"/><path d="M296.00 133.24 L296.25 134.87 L296.50 136.63 L296.75 138.41 L297.00 140.11 L297.25 141.62 L297.50 142.86 L297.75 143.74 L298.00 144.22 L298.25 144.27 L298.50 143.88 L298.75 143.08 L299.00 141.91 L299.25 140.45 L299.50 138.79 L299.75 137.01 L300.00 135.24 L300.25 133.57 L300.50 132.11 L300.75 130.94 L301.00 130.13 L301.25 129.74 L301.50 129.78 L301.75 130.25 L302.00 131.13 L302.25 132.36 L302.50 133.87 L302.75 135.56 L303.00 137.35 L303.25 139.11 L303.50 140.74 L303.75 142.15 L304.00 143.26 L304.25 143.98 L304.50 144.29 L304.75 144.16 L305.00 143.60 L305.25 142.65 L305.50 141.36 L305.75 139.80 L306.00 138.08 L306.25 136.30 L306.50 134.55 L306.75 132.95 L307.00 131.60 L307.25 130.57 L307.50 129.92 L307.75 129.70 L308.00 129.92 L308.25 130.56 L308.50 131.58 L308.75 132.93 L309.00 134.53 L309.25 136.27 L309.50 138.06 L309.75 139.78 L310.00 141.34 L310.25 142.64 L310.50 143.59 L310.75 144.16 L311.00 144.29 L311.25 143.99 L311.50 143.27 L311.75 142.17 L312.00 140.76 L312.25 139.13 L312.50 137.37 L312.75 135.59 L313.00 133.89 L313.25 132.38 L313.50 131.14 L313.75 130.26 L314.00 129.78 L314.25 129.73 L314.50 130.12 L314.75 130.92 L315.00 132.09 L315.25 133.55 L315.50 135.21 L315.75 136.99 L316.00 138.76 L316.25 140.43 L316.50 141.89 L316.75 143.06 L317.00 143.87 L317.25 144.26 L317.50 144.22 L317.75 143.75 L318.00 142.87 L318.25 141.64 L318.50 140.13 L318.75 138.44 L319.00 136.65 L319.25 134.89 L319.50 133.26 L319.75 131.85 L320.00 130.74 L320.25 130.02 L320.50 129.71 L320.75 129.84 L321.00 130.40 L321.25 131.35 L321.50 132.64 L321.75 134.20 L322.00 135.92" fill="none" stroke="#f8f628" stroke-width="1.7" stroke-linejoin="round"/><path d="M320.00 133.50 L320.25 131.62 L320.50 130.32 L320.75 129.72 L321.00 129.89 L321.25 130.82 L321.50 132.40 L321.75 134.48 L322.00 136.83 L322.25 139.20 L322.50 141.33 L322.75 143.01 L323.00 144.06 L323.25 144.35 L323.50 143.87 L323.75 142.65 L324.00 140.84 L324.25 138.61 L324.50 136.21 L324.75 133.89 L325.00 131.90 L325.25 130.44 L325.50 129.69 L325.75 129.70 L326.00 130.50 L326.25 131.98 L326.50 134.00 L326.75 136.34 L327.00 138.75 L327.25 140.98 L327.50 142.79 L327.75 143.99 L328.00 144.45 L328.25 144.11 L328.50 143.02 L328.75 141.29 L329.00 139.10 L329.25 136.69 L329.50 134.30 L329.75 132.20 L330.00 130.61 L330.25 129.69 L330.50 129.55 L330.75 130.20 L331.00 131.57 L331.25 133.52 L331.50 135.84 L331.75 138.29 L332.00 140.61 L332.25 142.54 L332.50 143.89 L332.75 144.51 L333.00 144.33 L333.25 143.37 L333.50 141.74 L333.75 139.60 L334.00 137.18 L334.25 134.74 L334.50 132.54 L334.75 130.80 L335.00 129.73 L335.25 129.42 L335.50 129.92 L335.75 131.18 L336.00 133.05 L336.25 135.34 L336.50 137.81 L336.75 140.20 L337.00 142.26 L337.25 143.75 L337.50 144.53 L337.75 144.52 L338.00 143.70 L338.25 142.17 L338.50 140.09 L338.75 137.68 L339.00 135.19 L339.25 132.90 L339.50 131.03 L339.75 129.80 L340.00 129.33 L340.25 129.68 L340.50 130.80 L340.75 132.58 L341.00 134.84 L341.25 137.32 L341.50 139.78 L341.75 141.94 L342.00 143.58 L342.25 144.53 L342.50 144.67 L342.75 144.00 L343.00 142.59 L343.25 140.58 L343.50 138.19 L343.75 135.67 L344.00 133.29 L344.25 131.30 L344.50 129.91 L344.75 129.27 L345.00 129.46 L345.25 130.44 L345.50 132.12 L345.75 134.33 L346.00 136.82 L346.25 139.33 L346.50 141.60 L346.75 143.38 L347.00 144.48" fill="none" stroke="#f8f628" stroke-width="1.3" stroke-linejoin="round"/><path d="M320.00 130.36 L320.25 132.08 L320.50 134.59 L320.75 137.49 L321.00 140.31 L321.25 142.61 L321.50 144.01 L321.75 144.29 L322.00 143.40 L322.25 141.49 L322.50 138.86 L322.75 135.92 L323.00 133.16 L323.25 131.00 L323.50 129.81 L323.75 129.76 L324.00 130.87 L324.25 132.97 L324.50 135.71 L324.75 138.67 L325.00 141.36 L325.25 143.35 L325.50 144.33 L325.75 144.14 L326.00 142.81 L326.25 140.54 L326.50 137.70 L326.75 134.75 L327.00 132.15 L327.25 130.33 L327.50 129.57 L327.75 130.00 L328.00 131.56 L328.25 133.98 L328.50 136.90 L328.75 139.83 L329.00 142.31 L329.25 143.95 L329.50 144.47 L329.75 143.80 L330.00 142.04 L330.25 139.47 L330.50 136.50 L330.75 133.61 L331.00 131.25 L331.25 129.82 L331.50 129.53 L331.75 130.44 L332.00 132.40 L332.25 135.10 L332.50 138.11 L332.75 140.94 L333.00 143.15 L333.25 144.37 L333.50 144.42 L333.75 143.28 L334.00 141.13 L334.25 138.32 L334.50 135.29 L334.75 132.53 L335.00 130.49 L335.25 129.49 L335.50 129.68 L335.75 131.05 L336.00 133.38 L336.25 136.28 L336.50 139.31 L336.75 141.97 L337.00 143.83 L337.25 144.61 L337.50 144.17 L337.75 142.57 L338.00 140.09 L338.25 137.11 L338.50 134.10 L338.75 131.56 L339.00 129.88 L339.25 129.35 L339.50 130.03 L339.75 131.84 L340.00 134.47 L340.25 137.51 L340.50 140.47 L340.75 142.88 L341.00 144.36 L341.25 144.65 L341.50 143.72 L341.75 141.71 L342.00 138.95 L342.25 135.87 L342.50 132.97 L342.75 130.71 L343.00 129.45 L343.25 129.40 L343.50 130.57 L343.75 132.77 L344.00 135.65 L344.25 138.75 L344.50 141.57 L344.75 143.66 L345.00 144.69 L345.25 144.49 L345.50 143.09 L345.75 140.71 L346.00 137.73 L346.25 134.64 L346.50 131.91 L346.75 130.00 L347.00 129.21" fill="none" stroke="#f8f628" stroke-width="1.1" stroke-linejoin="round"/><path d="M336.00 136.50 L337.00 136.09 L338.00 135.68 L339.00 135.27 L340.00 134.86 L341.00 134.45 L342.00 134.05 L343.00 133.64 L344.00 133.23 L345.00 132.82 L346.00 132.41 L347.00 132.00 L347.00 142.00 L346.00 141.59 L345.00 141.18 L344.00 140.77 L343.00 140.36 L342.00 139.95 L341.00 139.55 L340.00 139.14 L339.00 138.73 L338.00 138.32 L337.00 137.91 L336.00 137.50Z" fill="#f8f628" /><path d="M345.00 128.99 L346.00 128.89 L347.00 128.83 L348.00 129.30 L349.00 129.56 L350.00 129.15 L351.00 129.27 L352.00 129.93 L353.00 129.56 L354.00 129.73 L355.00 130.18 L356.00 129.63 L357.00 129.74 L358.00 129.92 L359.00 129.41 L360.00 129.71 L361.00 129.48 L362.00 130.03 L363.00 129.65 L364.00 129.39 L365.00 129.21 L366.00 129.80 L367.00 129.78 L368.00 129.59 L369.00 129.16 L370.00 129.40 L371.00 129.04 L372.00 129.55 L373.00 129.16 L374.00 129.08 L375.00 129.21 L376.00 129.05 L377.00 129.06 L378.00 128.64 L379.00 128.97 L380.00 129.15 L381.00 128.61 L382.00 128.77 L383.00 128.76 L384.00 128.44 L385.00 128.19 L386.00 128.69 L387.00 128.62 L388.00 128.19 L389.00 128.63 L390.00 128.28 L391.00 128.44 L392.00 128.04 L393.00 128.15 L394.00 127.95 L395.00 127.70 L396.00 127.64 L397.00 128.13 L398.00 127.60 L399.00 127.74 L400.00 128.00 L401.00 127.77 L402.00 127.56 L403.00 127.61 L404.00 127.30 L405.00 127.71 L406.00 127.68 L407.00 127.74 L408.00 127.37 L409.00 127.38 L410.00 127.37 L411.00 127.46 L412.00 127.20 L413.00 126.67 L414.00 127.14 L415.00 126.98 L416.00 126.66 L417.00 126.49 L418.00 126.92 L419.00 126.81 L420.00 127.01 L421.00 126.82 L422.00 126.11 L423.00 126.14 L424.00 126.27 L425.00 125.98 L426.00 126.17 L427.00 126.18 L428.00 126.12 L429.00 125.86 L430.00 125.80 L431.00 125.72 L432.00 125.53 L433.00 124.89 L434.00 124.75 L435.00 124.70 L436.00 125.02 L437.00 124.68 L438.00 124.47 L439.00 124.72 L440.00 124.14 L441.00 124.44 L442.00 124.03 L443.00 124.07 L444.00 123.46 L445.00 123.95 L446.00 123.56 L447.00 123.22 L448.00 123.24 L449.00 122.81 L450.00 122.78 L451.00 122.56 L452.00 122.74 L453.00 122.81 L454.00 122.43 L455.00 122.00 L456.00 122.02 L457.00 122.08 L458.00 122.07 L459.00 121.53 L460.00 121.88 L461.00 121.78 L462.00 121.74 L463.00 121.03 L464.00 121.33 L465.00 120.80 L466.00 120.92 L467.00 120.69 L468.00 120.08 L469.00 120.04 L470.00 119.79 L471.00 120.32 L472.00 120.22 L473.00 119.93 L474.00 119.88 L475.00 119.22 L476.00 119.58 L477.00 118.90 L478.00 118.60 L479.00 118.62 L480.00 118.94 L481.00 118.62 L482.00 118.52 L483.00 118.42 L484.00 117.84 L485.00 117.96 L486.00 117.38 L487.00 117.57 L488.00 117.39 L489.00 117.04 L490.00 117.04 L491.00 116.68 L492.00 116.67 L493.00 116.15 L494.00 116.30 L495.00 116.31 L496.00 116.16 L497.00 115.53 L498.00 115.15 L499.00 115.69 L500.00 115.21 L501.00 114.64 L502.00 114.60 L503.00 114.35 L504.00 114.53 L505.00 114.07 L506.00 113.89 L507.00 113.88 L508.00 113.85 L509.00 113.63 L510.00 113.17 L511.00 113.51 L512.00 112.70 L513.00 112.67 L514.00 112.40 L515.00 112.34 L516.00 112.48 L517.00 112.43 L518.00 111.92 L519.00 111.83 L520.00 111.97 L521.00 111.69 L522.00 111.22 L523.00 111.11 L524.00 110.54 L525.00 110.07 L526.00 110.34 L527.00 110.01 L528.00 109.41 L529.00 109.77 L530.00 109.06 L531.00 108.64 L532.00 108.95 L533.00 108.64 L534.00 108.18 L535.00 107.86 L536.00 107.93 L537.00 107.67 L538.00 107.27 L539.00 107.19 L540.00 106.37 L541.00 106.03 L542.00 106.20 L543.00 105.78 L544.00 105.14 L545.00 105.07 L546.00 104.87 L547.00 104.93 L548.00 104.16 L549.00 104.14 L550.00 103.68 L551.00 103.86 L552.00 104.08 L552.00 170.60 L551.00 170.68 L550.00 170.25 L549.00 169.45 L548.00 169.37 L547.00 169.10 L546.00 169.20 L545.00 168.70 L544.00 168.69 L543.00 168.35 L542.00 167.81 L541.00 167.40 L540.00 167.81 L539.00 167.54 L538.00 166.87 L537.00 166.67 L536.00 166.75 L535.00 166.11 L534.00 166.26 L533.00 166.04 L532.00 165.58 L531.00 164.87 L530.00 164.55 L529.00 164.49 L528.00 164.24 L527.00 164.19 L526.00 163.79 L525.00 163.63 L524.00 163.32 L523.00 162.74 L522.00 162.79 L521.00 162.32 L520.00 162.38 L519.00 161.82 L518.00 162.04 L517.00 162.08 L516.00 161.72 L515.00 161.70 L514.00 161.24 L513.00 161.41 L512.00 161.29 L511.00 160.44 L510.00 160.24 L509.00 160.15 L508.00 160.46 L507.00 160.28 L506.00 159.93 L505.00 160.09 L504.00 159.15 L503.00 159.48 L502.00 158.83 L501.00 159.14 L500.00 158.54 L499.00 158.36 L498.00 158.42 L497.00 158.23 L496.00 158.35 L495.00 157.95 L494.00 158.12 L493.00 157.92 L492.00 157.15 L491.00 157.50 L490.00 156.74 L489.00 156.68 L488.00 156.69 L487.00 156.69 L486.00 156.17 L485.00 156.25 L484.00 155.87 L483.00 155.81 L482.00 155.79 L481.00 155.76 L480.00 155.14 L479.00 155.39 L478.00 155.00 L477.00 155.21 L476.00 154.45 L475.00 154.71 L474.00 154.10 L473.00 154.65 L472.00 154.14 L471.00 153.77 L470.00 153.97 L469.00 153.32 L468.00 153.21 L467.00 152.99 L466.00 153.61 L465.00 152.75 L464.00 153.02 L463.00 152.58 L462.00 152.45 L461.00 152.43 L460.00 152.12 L459.00 151.81 L458.00 151.91 L457.00 151.63 L456.00 151.44 L455.00 152.00 L454.00 151.41 L453.00 151.00 L452.00 151.15 L451.00 150.70 L450.00 150.94 L449.00 150.50 L448.00 150.41 L447.00 150.28 L446.00 150.17 L445.00 149.99 L444.00 149.91 L443.00 149.78 L442.00 149.89 L441.00 149.63 L440.00 149.92 L439.00 149.41 L438.00 149.34 L437.00 149.37 L436.00 149.17 L435.00 149.02 L434.00 148.67 L433.00 148.43 L432.00 148.67 L431.00 148.51 L430.00 148.80 L429.00 148.21 L428.00 148.39 L427.00 148.19 L426.00 147.70 L425.00 148.17 L424.00 148.10 L423.00 147.31 L422.00 147.42 L421.00 147.51 L420.00 147.01 L419.00 147.61 L418.00 147.15 L417.00 147.14 L416.00 147.11 L415.00 147.01 L414.00 146.98 L413.00 147.15 L412.00 147.06 L411.00 146.81 L410.00 146.61 L409.00 147.10 L408.00 146.74 L407.00 146.52 L406.00 146.88 L405.00 146.14 L404.00 146.26 L403.00 146.46 L402.00 146.11 L401.00 146.02 L400.00 146.45 L399.00 146.39 L398.00 145.90 L397.00 146.27 L396.00 145.73 L395.00 145.80 L394.00 146.21 L393.00 146.10 L392.00 145.75 L391.00 145.66 L390.00 145.52 L389.00 145.31 L388.00 145.53 L387.00 145.45 L386.00 145.55 L385.00 145.64 L384.00 145.15 L383.00 145.32 L382.00 145.35 L381.00 145.43 L380.00 144.91 L379.00 144.85 L378.00 145.42 L377.00 145.16 L376.00 144.75 L375.00 145.10 L374.00 144.79 L373.00 144.55 L372.00 144.95 L371.00 144.97 L370.00 144.96 L369.00 144.81 L368.00 144.83 L367.00 144.48 L366.00 144.21 L365.00 144.79 L364.00 144.56 L363.00 144.08 L362.00 144.25 L361.00 144.36 L360.00 144.23 L359.00 144.06 L358.00 144.28 L357.00 143.98 L356.00 144.32 L355.00 143.67 L354.00 144.06 L353.00 144.53 L352.00 144.68 L351.00 144.64 L350.00 144.41 L349.00 144.51 L348.00 145.21 L347.00 145.13 L346.00 144.86 L345.00 145.57Z" fill="#f8f628" /><path d="M550.00 103.42 L551.00 103.72 L552.00 104.18 L553.00 104.42 L554.00 104.51 L555.00 105.02 L556.00 104.81 L557.00 105.26 L558.00 104.99 L559.00 105.38 L560.00 105.23 L561.00 105.66 L562.00 105.79 L563.00 105.79 L564.00 105.31 L565.00 105.46 L566.00 105.23 L567.00 105.26 L568.00 105.35 L569.00 105.45 L570.00 105.23 L571.00 105.58 L572.00 105.75 L573.00 105.35 L574.00 105.65 L575.00 105.51 L576.00 105.53 L577.00 105.30 L578.00 105.59 L579.00 105.74 L580.00 105.60 L581.00 105.69 L582.00 105.45 L583.00 105.30 L584.00 105.61 L585.00 105.53 L586.00 105.41 L587.00 105.68 L588.00 105.78 L589.00 105.39 L590.00 105.45 L591.00 105.70 L592.00 105.57 L593.00 105.54 L594.00 105.49 L595.00 105.63 L596.00 105.26 L597.00 105.42 L598.00 105.74 L599.00 105.59 L600.00 105.75 L601.00 105.43 L602.00 105.40 L603.00 105.78 L604.00 105.41 L605.00 105.39 L606.00 105.38 L607.00 105.28 L608.00 105.35 L609.00 105.55 L610.00 105.74 L611.00 105.74 L612.00 105.42 L613.00 105.30 L614.00 105.55 L615.00 105.59 L616.00 105.41 L617.00 105.36 L618.00 105.38 L619.00 105.68 L620.00 105.37 L621.00 105.74 L622.00 105.41 L623.00 105.82 L624.00 105.88 L625.00 105.53 L626.00 105.54 L627.00 105.48 L628.00 105.40 L629.00 105.53 L630.00 105.37 L631.00 105.89 L632.00 105.92 L633.00 105.55 L634.00 105.63 L635.00 105.53 L636.00 105.56 L637.00 105.82 L638.00 105.64 L639.00 105.63 L640.00 105.87 L641.00 105.73 L642.00 105.88 L643.00 105.96 L644.00 105.48 L645.00 105.51 L646.00 105.98 L647.00 105.92 L648.00 105.41 L648.00 168.52 L647.00 168.07 L646.00 168.25 L645.00 168.04 L644.00 168.18 L643.00 168.52 L642.00 168.13 L641.00 168.59 L640.00 168.15 L639.00 168.36 L638.00 168.36 L637.00 168.39 L636.00 168.50 L635.00 168.07 L634.00 168.48 L633.00 168.63 L632.00 168.21 L631.00 168.67 L630.00 168.19 L629.00 168.63 L628.00 168.16 L627.00 168.17 L626.00 168.68 L625.00 168.16 L624.00 168.42 L623.00 168.13 L622.00 168.60 L621.00 168.22 L620.00 168.15 L619.00 168.51 L618.00 168.72 L617.00 168.67 L616.00 168.71 L615.00 168.17 L614.00 168.30 L613.00 168.31 L612.00 168.73 L611.00 168.16 L610.00 168.54 L609.00 168.61 L608.00 168.21 L607.00 168.31 L606.00 168.76 L605.00 168.26 L604.00 168.42 L603.00 168.75 L602.00 168.35 L601.00 168.69 L600.00 168.31 L599.00 168.32 L598.00 168.78 L597.00 168.51 L596.00 168.60 L595.00 168.75 L594.00 168.37 L593.00 168.53 L592.00 168.22 L591.00 168.76 L590.00 168.71 L589.00 168.51 L588.00 168.29 L587.00 168.47 L586.00 168.47 L585.00 168.44 L584.00 168.80 L583.00 168.31 L582.00 168.51 L581.00 168.56 L580.00 168.76 L579.00 168.48 L578.00 168.74 L577.00 168.21 L576.00 168.37 L575.00 168.70 L574.00 168.67 L573.00 168.28 L572.00 168.69 L571.00 168.61 L570.00 168.46 L569.00 168.36 L568.00 168.68 L567.00 168.39 L566.00 168.53 L565.00 168.40 L564.00 168.21 L563.00 168.22 L562.00 168.67 L561.00 168.48 L560.00 168.32 L559.00 168.44 L558.00 168.80 L557.00 168.63 L556.00 168.92 L555.00 169.40 L554.00 169.34 L553.00 169.71 L552.00 169.86 L551.00 170.14 L550.00 170.30Z" fill="#f8f628" /><path d="M647.5 99.5 L654 99.5 Q664 101 665.5 122 L665.8 137 L665.5 152 Q664 173 654 174.8 L647.5 174.8 Z" fill="#f8f628"/><defs><clipPath id="innerclip"><path d="M470.00 127.00 L471.00 126.85 L472.00 126.70 L473.00 126.55 L474.00 126.40 L475.00 126.25 L476.00 126.10 L477.00 125.95 L478.00 125.80 L479.00 125.65 L480.00 125.50 L481.00 125.33 L482.00 125.15 L483.00 124.97 L484.00 124.80 L485.00 124.62 L486.00 124.45 L487.00 124.28 L488.00 124.10 L489.00 123.92 L490.00 123.75 L491.00 123.58 L492.00 123.40 L493.00 123.22 L494.00 123.05 L495.00 122.88 L496.00 122.70 L497.00 122.53 L498.00 122.35 L499.00 122.17 L500.00 122.00 L501.00 121.83 L502.00 121.65 L503.00 121.47 L504.00 121.30 L505.00 121.12 L506.00 120.95 L507.00 120.78 L508.00 120.60 L509.00 120.42 L510.00 120.25 L511.00 120.08 L512.00 119.90 L513.00 119.72 L514.00 119.55 L515.00 119.38 L516.00 119.20 L517.00 119.03 L518.00 118.85 L519.00 118.67 L520.00 118.50 L521.00 118.25 L522.00 118.00 L523.00 117.75 L524.00 117.49 L525.00 117.24 L526.00 116.99 L527.00 116.74 L528.00 116.49 L529.00 116.24 L530.00 115.98 L531.00 115.73 L532.00 115.48 L533.00 115.23 L534.00 114.98 L535.00 114.73 L536.00 114.47 L537.00 114.22 L538.00 113.97 L539.00 113.72 L540.00 113.47 L541.00 113.22 L542.00 112.96 L543.00 112.71 L544.00 112.46 L545.00 112.21 L546.00 111.96 L547.00 111.71 L548.00 111.45 L549.00 111.20 L550.00 110.95 L551.00 110.70 L552.00 111.06 L553.00 111.42 L554.00 111.78 L555.00 112.14 L556.00 112.50 L557.00 112.50 L558.00 112.50 L559.00 112.50 L560.00 112.50 L561.00 112.50 L562.00 112.50 L563.00 112.50 L564.00 112.50 L565.00 112.50 L566.00 112.50 L567.00 112.50 L568.00 112.50 L569.00 112.50 L570.00 112.50 L571.00 112.50 L572.00 112.50 L573.00 112.50 L574.00 112.50 L575.00 112.50 L576.00 112.50 L577.00 112.50 L578.00 112.50 L579.00 112.50 L580.00 112.50 L581.00 112.50 L582.00 112.50 L583.00 112.50 L584.00 112.50 L585.00 112.50 L586.00 112.50 L587.00 112.50 L588.00 112.50 L589.00 112.50 L590.00 112.50 L591.00 112.50 L592.00 112.50 L593.00 112.50 L594.00 112.50 L595.00 112.50 L596.00 112.50 L597.00 112.50 L598.00 112.50 L599.00 112.50 L600.00 112.50 L601.00 112.50 L602.00 112.50 L603.00 112.50 L604.00 112.50 L605.00 112.50 L606.00 112.50 L607.00 112.50 L608.00 112.50 L609.00 112.50 L610.00 112.50 L611.00 112.50 L612.00 112.50 L613.00 112.50 L614.00 112.50 L615.00 112.50 L616.00 112.50 L617.00 112.50 L618.00 112.50 L619.00 112.50 L620.00 112.50 L621.00 112.50 L622.00 112.50 L623.00 112.50 L624.00 112.50 L625.00 112.50 L626.00 112.50 L627.00 112.50 L628.00 112.50 L629.00 112.50 L630.00 112.50 L631.00 112.50 L632.00 112.50 L633.00 112.50 L634.00 112.50 L635.00 112.50 L636.00 112.50 L637.00 112.50 L638.00 112.50 L639.00 112.50 L640.00 112.50 L641.00 112.50 L642.00 112.50 L643.00 112.50 L644.00 112.50 L645.00 112.50 L646.00 112.50 L647.00 109.75 L648.00 107.00 L649.00 107.00 L650.00 107.00 L651.00 107.00 L652.00 107.00 L653.00 107.00 L654.00 107.00 L655.00 107.00 L656.00 108.00 L657.00 109.00 L658.00 110.00 L659.00 111.00 L660.00 112.00 L661.00 113.00 L662.00 119.00 L663.00 125.00 L663.00 149.00 L662.00 155.00 L661.00 161.00 L660.00 162.00 L659.00 163.00 L658.00 164.00 L657.00 165.00 L656.00 166.00 L655.00 167.00 L654.00 167.00 L653.00 167.00 L652.00 167.00 L651.00 167.00 L650.00 167.00 L649.00 167.00 L648.00 167.00 L647.00 164.25 L646.00 161.50 L645.00 161.50 L644.00 161.50 L643.00 161.50 L642.00 161.50 L641.00 161.50 L640.00 161.50 L639.00 161.50 L638.00 161.50 L637.00 161.50 L636.00 161.50 L635.00 161.50 L634.00 161.50 L633.00 161.50 L632.00 161.50 L631.00 161.50 L630.00 161.50 L629.00 161.50 L628.00 161.50 L627.00 161.50 L626.00 161.50 L625.00 161.50 L624.00 161.50 L623.00 161.50 L622.00 161.50 L621.00 161.50 L620.00 161.50 L619.00 161.50 L618.00 161.50 L617.00 161.50 L616.00 161.50 L615.00 161.50 L614.00 161.50 L613.00 161.50 L612.00 161.50 L611.00 161.50 L610.00 161.50 L609.00 161.50 L608.00 161.50 L607.00 161.50 L606.00 161.50 L605.00 161.50 L604.00 161.50 L603.00 161.50 L602.00 161.50 L601.00 161.50 L600.00 161.50 L599.00 161.50 L598.00 161.50 L597.00 161.50 L596.00 161.50 L595.00 161.50 L594.00 161.50 L593.00 161.50 L592.00 161.50 L591.00 161.50 L590.00 161.50 L589.00 161.50 L588.00 161.50 L587.00 161.50 L586.00 161.50 L585.00 161.50 L584.00 161.50 L583.00 161.50 L582.00 161.50 L581.00 161.50 L580.00 161.50 L579.00 161.50 L578.00 161.50 L577.00 161.50 L576.00 161.50 L575.00 161.50 L574.00 161.50 L573.00 161.50 L572.00 161.50 L571.00 161.50 L570.00 161.50 L569.00 161.50 L568.00 161.50 L567.00 161.50 L566.00 161.50 L565.00 161.50 L564.00 161.50 L563.00 161.50 L562.00 161.50 L561.00 161.50 L560.00 161.50 L559.00 161.50 L558.00 161.50 L557.00 161.50 L556.00 161.50 L555.00 161.86 L554.00 162.22 L553.00 162.58 L552.00 162.94 L551.00 163.30 L550.00 163.05 L549.00 162.80 L548.00 162.55 L547.00 162.29 L546.00 162.04 L545.00 161.79 L544.00 161.54 L543.00 161.29 L542.00 161.04 L541.00 160.78 L540.00 160.53 L539.00 160.28 L538.00 160.03 L537.00 159.78 L536.00 159.53 L535.00 159.27 L534.00 159.02 L533.00 158.77 L532.00 158.52 L531.00 158.27 L530.00 158.02 L529.00 157.76 L528.00 157.51 L527.00 157.26 L526.00 157.01 L525.00 156.76 L524.00 156.51 L523.00 156.25 L522.00 156.00 L521.00 155.75 L520.00 155.50 L519.00 155.32 L518.00 155.15 L517.00 154.97 L516.00 154.80 L515.00 154.62 L514.00 154.45 L513.00 154.28 L512.00 154.10 L511.00 153.93 L510.00 153.75 L509.00 153.57 L508.00 153.40 L507.00 153.22 L506.00 153.05 L505.00 152.88 L504.00 152.70 L503.00 152.53 L502.00 152.35 L501.00 152.18 L500.00 152.00 L499.00 151.82 L498.00 151.65 L497.00 151.47 L496.00 151.30 L495.00 151.12 L494.00 150.95 L493.00 150.78 L492.00 150.60 L491.00 150.43 L490.00 150.25 L489.00 150.07 L488.00 149.90 L487.00 149.72 L486.00 149.55 L485.00 149.38 L484.00 149.20 L483.00 149.03 L482.00 148.85 L481.00 148.68 L480.00 148.50 L479.00 148.35 L478.00 148.20 L477.00 148.05 L476.00 147.90 L475.00 147.75 L474.00 147.60 L473.00 147.45 L472.00 147.30 L471.00 147.15 L470.00 147.00Z"/></clipPath><filter id="spk" x="0" y="0" width="100%" height="100%" filterUnits="userSpaceOnUse"><feTurbulence type="fractalNoise" baseFrequency="0.45" numOctaves="2" seed="7" result="t"/><feColorMatrix type="matrix" values="0 0 0 0 0.35  0 0 0 0 0.32  0 0 0 0 0  2.0 0 0 0 -0.9"/><feGaussianBlur stdDeviation="0.5"/></filter><linearGradient id="fadeg" x1="470" y1="0" x2="560" y2="0" gradientUnits="userSpaceOnUse"><stop offset="0" stop-color="#fff" stop-opacity="0"/><stop offset="1" stop-color="#fff" stop-opacity="1"/></linearGradient><mask id="fadem" maskUnits="userSpaceOnUse" x="0" y="0" width="740" height="555"><rect x="470" y="90" width="200" height="100" fill="url(#fadeg)"/></mask><linearGradient id="centg" x1="0" y1="100" x2="0" y2="174" gradientUnits="userSpaceOnUse"><stop offset="0" stop-color="#000" stop-opacity="0"/><stop offset="0.42" stop-color="#000" stop-opacity="0.0"/><stop offset="0.5" stop-color="#000" stop-opacity="0"/><stop offset="1" stop-color="#000" stop-opacity="0"/></linearGradient></defs><g clip-path="url(#innerclip)" mask="url(#fadem)"><rect x="470" y="95" width="200" height="85" fill="#8a8210" opacity="0.1"/><rect x="470" y="95" width="200" height="85" filter="url(#spk)" opacity="0.9"/><rect x="470" y="129" width="200" height="15" fill="#f0ea20" opacity="0.35"/></g><rect x="665" y="135.8" width="75" height="2.4" fill="#f8f628"/><rect x="17" y="355.3" width="46" height="2.4" fill="#f8f628"/><path d="M60.50 355.00 L61.00 352.17 L61.50 349.33 L62.00 346.50 L62.50 347.25 L63.00 348.00 L63.50 348.75 L64.00 349.50 L64.50 350.33 L65.00 351.17 L65.50 352.00 L66.00 352.83 L66.50 353.67 L67.00 354.50 L67.00 358.50 L66.50 359.33 L66.00 360.17 L65.50 361.00 L65.00 361.83 L64.50 362.67 L64.00 363.50 L63.50 364.25 L63.00 365.00 L62.50 365.75 L62.00 366.50 L61.50 363.67 L61.00 360.83 L60.50 358.00Z" fill="#f8f628" /><path d="M66.00 354.08 L66.50 354.23 L67.00 354.28 L67.50 354.71 L68.00 354.14 L68.50 353.74 L69.00 354.50 L69.50 353.68 L70.00 353.98 L70.50 354.03 L71.00 354.27 L71.50 354.21 L72.00 354.55 L72.50 354.20 L73.00 354.36 L73.50 354.67 L74.00 354.66 L74.50 354.36 L75.00 354.81 L75.50 354.26 L76.00 354.44 L76.50 354.68 L77.00 354.65 L77.50 354.93 L78.00 354.99 L78.50 354.74 L79.00 354.92 L79.50 354.50 L80.00 354.29 L80.50 354.84 L81.00 354.12 L81.50 354.41 L82.00 354.91 L82.50 354.37 L83.00 354.63 L83.50 354.77 L84.00 354.60 L84.50 355.16 L85.00 354.28 L85.00 358.24 L84.50 358.51 L84.00 357.94 L83.50 358.52 L83.00 358.31 L82.50 358.29 L82.00 358.10 L81.50 357.95 L81.00 357.99 L80.50 358.58 L80.00 358.19 L79.50 358.87 L79.00 358.34 L78.50 358.06 L78.00 358.36 L77.50 358.74 L77.00 358.62 L76.50 358.78 L76.00 357.87 L75.50 358.14 L75.00 357.94 L74.50 358.23 L74.00 358.07 L73.50 358.86 L73.00 358.41 L72.50 358.61 L72.00 358.52 L71.50 359.09 L71.00 359.16 L70.50 358.55 L70.00 359.38 L69.50 359.23 L69.00 359.13 L68.50 358.75 L68.00 358.92 L67.50 358.80 L67.00 359.12 L66.50 358.70 L66.00 359.17Z" fill="#f8f628" /><path d="M83.50 354.50 L83.75 352.67 L84.00 343.50 L84.25 334.33 L84.50 331.47 L84.75 330.18 L85.00 328.89 L85.25 327.60 L85.50 326.31 L85.75 325.02 L86.00 323.73 L86.25 322.78 L86.50 323.17 L86.75 323.56 L87.00 323.94 L87.25 324.33 L87.50 324.72 L87.75 325.11 L88.00 325.50 L88.25 326.16 L88.50 326.81 L88.75 327.47 L89.00 328.12 L89.25 328.78 L89.50 329.44 L89.75 330.09 L90.00 330.75 L90.25 331.41 L90.50 332.06 L90.75 332.72 L91.00 333.38 L91.25 334.03 L91.50 334.69 L91.75 335.34 L92.00 336.00 L92.25 336.69 L92.50 337.38 L92.75 338.06 L93.00 338.75 L93.25 339.44 L93.50 340.12 L93.75 340.81 L94.00 341.50 L94.25 342.19 L94.50 342.88 L94.75 343.56 L95.00 344.25 L95.25 344.94 L95.50 345.62 L95.75 346.31 L96.00 347.00 L96.25 347.60 L96.50 348.20 L96.75 348.80 L97.00 349.40 L97.25 350.00 L97.50 350.60 L97.75 351.20 L98.00 351.80 L98.25 352.40 L98.50 353.00 L98.75 353.00 L99.00 353.00 L99.00 360.00 L98.75 360.00 L98.50 360.00 L98.25 360.60 L98.00 361.20 L97.75 361.80 L97.50 362.40 L97.25 363.00 L97.00 363.60 L96.75 364.20 L96.50 364.80 L96.25 365.40 L96.00 366.00 L95.75 366.69 L95.50 367.38 L95.25 368.06 L95.00 368.75 L94.75 369.44 L94.50 370.12 L94.25 370.81 L94.00 371.50 L93.75 372.19 L93.50 372.88 L93.25 373.56 L93.00 374.25 L92.75 374.94 L92.50 375.62 L92.25 376.31 L92.00 377.00 L91.75 377.66 L91.50 378.31 L91.25 378.97 L91.00 379.62 L90.75 380.28 L90.50 380.94 L90.25 381.59 L90.00 382.25 L89.75 382.91 L89.50 383.56 L89.25 384.22 L89.00 384.88 L88.75 385.53 L88.50 386.19 L88.25 386.84 L88.00 387.50 L87.75 387.89 L87.50 388.28 L87.25 388.67 L87.00 389.06 L86.75 389.44 L86.50 389.83 L86.25 390.22 L86.00 389.27 L85.75 387.98 L85.50 386.69 L85.25 385.40 L85.00 384.11 L84.75 382.82 L84.50 381.53 L84.25 378.67 L84.00 369.50 L83.75 360.33 L83.50 358.50Z" fill="#f8f628" /><path d="M97.50 353.50 L98.00 352.85 L98.50 352.21 L99.00 351.57 L99.50 350.96 L100.00 350.37 L100.50 349.80 L101.00 349.27 L101.50 348.78 L102.00 348.34 L102.50 347.94 L103.00 347.59 L103.50 347.29 L104.00 347.06 L104.50 346.88 L105.00 346.76 L105.50 346.70 L106.00 346.71 L106.50 346.75 L107.00 346.82 L107.50 346.94 L108.00 347.09 L108.50 347.27 L109.00 347.49 L109.50 347.74 L110.00 348.02 L110.50 348.33 L111.00 348.67 L111.50 349.04 L112.00 349.43 L112.50 349.85 L113.00 350.29 L113.50 350.75 L114.00 351.22 L114.50 351.71 L115.00 352.21 L115.50 352.73 L116.00 353.25 L116.50 353.77 L117.00 354.30 L117.00 358.70 L116.50 359.23 L116.00 359.75 L115.50 360.27 L115.00 360.79 L114.50 361.29 L114.00 361.78 L113.50 362.25 L113.00 362.71 L112.50 363.15 L112.00 363.57 L111.50 363.96 L111.00 364.33 L110.50 364.67 L110.00 364.98 L109.50 365.26 L109.00 365.51 L108.50 365.73 L108.00 365.91 L107.50 366.06 L107.00 366.18 L106.50 366.25 L106.00 366.29 L105.50 366.30 L105.00 366.24 L104.50 366.12 L104.00 365.94 L103.50 365.71 L103.00 365.41 L102.50 365.06 L102.00 364.66 L101.50 364.22 L101.00 363.73 L100.50 363.20 L100.00 362.63 L99.50 362.04 L99.00 361.43 L98.50 360.79 L98.00 360.15 L97.50 359.50Z" fill="#f8f628" /><path d="M116.50 354.30 L117.00 353.88 L117.50 353.47 L118.00 353.05 L118.50 352.65 L119.00 352.25 L119.50 351.87 L120.00 351.50 L120.50 351.15 L121.00 350.81 L121.50 350.49 L122.00 350.19 L122.50 349.92 L123.00 349.67 L123.50 349.45 L124.00 349.25 L124.50 349.09 L125.00 348.95 L125.50 348.84 L126.00 348.76 L126.50 348.72 L127.00 348.70 L127.50 348.70 L128.00 348.71 L128.50 348.72 L129.00 348.74 L129.50 348.77 L130.00 348.80 L130.50 348.83 L131.00 348.87 L131.50 348.92 L132.00 348.97 L132.50 349.03 L133.00 349.09 L133.50 349.15 L134.00 349.22 L134.50 349.30 L135.00 349.38 L135.50 349.46 L136.00 349.55 L136.50 349.64 L137.00 349.74 L137.50 349.83 L138.00 349.94 L138.50 350.04 L139.00 350.15 L139.50 350.26 L140.00 350.37 L140.50 350.49 L141.00 350.61 L141.50 350.73 L142.00 350.85 L142.50 350.97 L143.00 351.10 L143.50 351.22 L144.00 351.35 L144.50 351.47 L145.00 351.60 L145.00 361.40 L144.50 361.53 L144.00 361.65 L143.50 361.78 L143.00 361.90 L142.50 362.03 L142.00 362.15 L141.50 362.27 L141.00 362.39 L140.50 362.51 L140.00 362.63 L139.50 362.74 L139.00 362.85 L138.50 362.96 L138.00 363.06 L137.50 363.17 L137.00 363.26 L136.50 363.36 L136.00 363.45 L135.50 363.54 L135.00 363.62 L134.50 363.70 L134.00 363.78 L133.50 363.85 L133.00 363.91 L132.50 363.97 L132.00 364.03 L131.50 364.08 L131.00 364.13 L130.50 364.17 L130.00 364.20 L129.50 364.23 L129.00 364.26 L128.50 364.28 L128.00 364.29 L127.50 364.30 L127.00 364.30 L126.50 364.28 L126.00 364.24 L125.50 364.16 L125.00 364.05 L124.50 363.91 L124.00 363.75 L123.50 363.55 L123.00 363.33 L122.50 363.08 L122.00 362.81 L121.50 362.51 L121.00 362.19 L120.50 361.85 L120.00 361.50 L119.50 361.13 L119.00 360.75 L118.50 360.35 L118.00 359.95 L117.50 359.53 L117.00 359.12 L116.50 358.70Z" fill="#f8f628" /><path d="M143.00 352.36 L144.00 351.43 L145.00 352.26 L146.00 352.01 L147.00 351.65 L148.00 351.83 L149.00 351.49 L150.00 351.41 L151.00 351.37 L152.00 351.73 L153.00 352.00 L154.00 351.21 L155.00 351.03 L156.00 351.53 L157.00 351.15 L158.00 350.97 L159.00 351.34 L160.00 351.68 L161.00 351.15 L162.00 350.85 L163.00 351.57 L164.00 351.55 L165.00 351.05 L166.00 351.04 L167.00 351.49 L168.00 350.96 L169.00 351.34 L170.00 351.37 L171.00 351.07 L172.00 351.53 L173.00 351.80 L174.00 351.78 L175.00 351.61 L176.00 351.04 L177.00 351.81 L178.00 351.51 L179.00 351.22 L180.00 351.84 L181.00 351.09 L182.00 351.78 L183.00 351.27 L184.00 351.89 L185.00 350.98 L186.00 351.29 L187.00 351.96 L188.00 351.07 L189.00 351.24 L190.00 351.94 L191.00 351.91 L192.00 351.33 L193.00 351.58 L194.00 351.45 L195.00 351.36 L196.00 352.01 L197.00 351.91 L198.00 351.35 L199.00 351.27 L200.00 352.03 L201.00 351.70 L202.00 351.58 L203.00 352.07 L204.00 351.46 L205.00 351.39 L206.00 351.51 L207.00 351.32 L208.00 351.62 L209.00 351.89 L210.00 351.50 L211.00 351.84 L212.00 352.15 L213.00 351.46 L214.00 351.41 L215.00 351.86 L216.00 351.66 L217.00 351.82 L218.00 351.79 L219.00 351.85 L220.00 351.55 L221.00 351.87 L222.00 351.92 L223.00 351.78 L223.00 360.96 L222.00 361.45 L221.00 360.99 L220.00 361.47 L219.00 360.76 L218.00 361.42 L217.00 361.44 L216.00 360.97 L215.00 361.09 L214.00 361.02 L213.00 361.04 L212.00 361.07 L211.00 360.76 L210.00 360.87 L209.00 361.36 L208.00 361.12 L207.00 361.69 L206.00 361.46 L205.00 361.74 L204.00 361.77 L203.00 361.10 L202.00 360.91 L201.00 360.98 L200.00 361.79 L199.00 361.86 L198.00 361.10 L197.00 360.98 L196.00 361.68 L195.00 361.78 L194.00 361.46 L193.00 361.52 L192.00 361.19 L191.00 361.32 L190.00 361.23 L189.00 361.23 L188.00 361.90 L187.00 361.30 L186.00 361.41 L185.00 361.98 L184.00 361.29 L183.00 361.49 L182.00 361.48 L181.00 361.28 L180.00 361.50 L179.00 361.93 L178.00 362.03 L177.00 361.21 L176.00 361.87 L175.00 362.08 L174.00 361.91 L173.00 361.31 L172.00 361.84 L171.00 361.52 L170.00 361.57 L169.00 361.52 L168.00 361.91 L167.00 361.88 L166.00 361.77 L165.00 361.39 L164.00 361.45 L163.00 361.54 L162.00 361.92 L161.00 361.62 L160.00 361.76 L159.00 361.42 L158.00 361.31 L157.00 361.28 L156.00 361.67 L155.00 361.26 L154.00 361.33 L153.00 361.43 L152.00 361.66 L151.00 361.24 L150.00 361.32 L149.00 361.55 L148.00 360.81 L147.00 361.21 L146.00 361.27 L145.00 361.09 L144.00 361.31 L143.00 360.61Z" fill="#f8f628" /><path d="M221.00 351.90 L222.00 352.22 L223.00 352.54 L224.00 352.86 L225.00 353.18 L226.00 353.50 L226.00 359.50 L225.00 359.82 L224.00 360.14 L223.00 360.46 L222.00 360.78 L221.00 361.10Z" fill="#f8f628" /><path d="M221.00 356.50 L221.25 354.82 L221.50 353.40 L221.75 352.49 L222.00 352.22 L222.25 352.63 L222.50 353.66 L222.75 355.15 L223.00 356.84 L223.25 358.49 L223.50 359.81 L223.75 360.60 L224.00 360.73 L224.25 360.19 L224.50 359.06 L224.75 357.52 L225.00 355.82 L225.25 354.23 L225.50 353.01 L225.75 352.35 L226.00 352.35 L226.25 353.02 L226.50 354.24 L226.75 355.82 L227.00 357.51 L227.25 359.04 L227.50 360.15 L227.75 360.68 L228.00 360.55 L228.25 359.76 L228.50 358.45 L228.75 356.84 L229.00 355.17 L229.25 353.72 L229.50 352.71 L229.75 352.31 L230.00 352.58 L230.25 353.48 L230.50 354.86 L230.75 356.50 L231.00 358.14 L231.25 359.51 L231.50 360.40 L231.75 360.66 L232.00 360.26 L232.25 359.26 L232.50 357.82 L232.75 356.17 L233.00 354.57 L233.25 353.29 L233.50 352.52 L233.75 352.39 L234.00 352.92 L234.25 354.02 L234.50 355.51 L234.75 357.16 L235.00 358.70 L235.25 359.89 L235.50 360.54 L235.75 360.53 L236.00 359.88 L236.25 358.70 L236.50 357.16 L236.75 355.52 L237.00 354.04 L237.25 352.95 L237.50 352.44 L237.75 352.57 L238.00 353.33 L238.25 354.60 L238.50 356.17 L238.75 357.79 L239.00 359.20 L239.25 360.18 L239.50 360.57 L239.75 360.30 L240.00 359.43 L240.25 358.09 L240.50 356.50 L240.75 354.91 L241.00 353.58 L241.25 352.72 L241.50 352.46 L241.75 352.85 L242.00 353.82 L242.25 355.22 L242.50 356.82 L242.75 358.37 L243.00 359.62 L243.25 360.36 L243.50 360.49 L243.75 359.98 L244.00 358.91 L244.25 357.46 L244.50 355.86 L244.75 354.36 L245.00 353.21 L245.25 352.57 L245.50 352.56 L245.75 353.19 L246.00 354.34 L246.25 355.85 L246.50 357.47 L246.75 358.94 L247.00 360.02 L247.25 360.55 L247.50 360.43 L247.75 359.67 L248.00 358.41 L248.25 356.83 L248.50 355.19 L248.75 353.76 L249.00 352.76 L249.25 352.36 L249.50 352.61 L249.75 353.50 L250.00 354.86 L250.25 356.50 L250.50 358.14 L250.75 359.53 L251.00 360.44 L251.25 360.71 L251.50 360.32 L251.75 359.31 L252.00 357.84 L252.25 356.16 L252.50 354.52 L252.75 353.19 L253.00 352.39 L253.25 352.24 L253.50 352.78 L253.75 353.91 L254.00 355.47 L254.25 357.19 L254.50 358.81 L254.75 360.07 L255.00 360.76 L255.25 360.77 L255.50 360.09 L255.75 358.84 L256.00 357.20 L256.25 355.45 L256.50 353.86 L256.75 352.68 L257.00 352.11 L257.25 352.25 L257.50 353.06 L257.75 354.44 L258.00 356.14 L258.25 357.91 L258.50 359.46 L258.75 360.55 L259.00 360.98 L259.25 360.70 L259.50 359.75 L259.75 358.27 L260.00 356.50 L260.25 354.72 L260.50 353.23 L260.75 352.25 L261.00 351.95 L261.25 352.38 L261.50 353.47 L261.75 355.05 L262.00 356.87 L262.25 358.64 L262.50 360.07 L262.75 360.94 L263.00 361.09 L263.25 360.51 L263.50 359.29 L263.75 357.61 L264.00 355.75 L264.25 354.00 L264.50 352.65 L264.75 351.91 L265.00 351.90 L265.25 352.63 L265.50 353.98 L265.75 355.74 L266.00 357.63 L266.25 359.35 L266.50 360.61 L266.75 361.22 L267.00 361.08 L267.25 360.20 L267.50 358.72 L267.75 356.89 L268.00 354.98" fill="none" stroke="#f8f628" stroke-width="1.3" stroke-linejoin="round"/><path d="M221.00 353.02 L221.25 354.16 L221.50 355.60 L221.75 357.16 L222.00 358.63 L222.25 359.82 L222.50 360.56 L222.75 360.77 L223.00 360.42 L223.25 359.55 L223.50 358.28 L223.75 356.78 L224.00 355.24 L224.25 353.87 L224.50 352.85 L224.75 352.31 L225.00 352.33 L225.25 352.89 L225.50 353.93 L225.75 355.31 L226.00 356.84 L226.25 358.33 L226.50 359.57 L226.75 360.40 L227.00 360.72 L227.25 360.48 L227.50 359.72 L227.75 358.53 L228.00 357.08 L228.25 355.55 L228.50 354.15 L228.75 353.06 L229.00 352.43 L229.25 352.33 L229.50 352.79 L229.75 353.73 L230.00 355.04 L230.25 356.53 L230.50 358.03 L230.75 359.31 L231.00 360.23 L231.25 360.65 L231.50 360.52 L231.75 359.87 L232.00 358.77 L232.25 357.37 L232.50 355.86 L232.75 354.44 L233.00 353.29 L233.25 352.56 L233.50 352.36 L233.75 352.70 L234.00 353.55 L234.25 354.78 L234.50 356.23 L234.75 357.72 L235.00 359.05 L235.25 360.04 L235.50 360.56 L235.75 360.54 L236.00 359.99 L236.25 358.98 L236.50 357.65 L236.75 356.17 L237.00 354.73 L237.25 353.53 L237.50 352.72 L237.75 352.41 L238.00 352.64 L238.25 353.38 L238.50 354.53 L238.75 355.94 L239.00 357.42 L239.25 358.77 L239.50 359.83 L239.75 360.44 L240.00 360.53 L240.25 360.09 L240.50 359.18 L240.75 357.92 L241.00 356.47 L241.25 355.02 L241.50 353.78 L241.75 352.89 L242.00 352.48 L242.25 352.61 L242.50 353.24 L242.75 354.31 L243.00 355.66 L243.25 357.12 L243.50 358.50 L243.75 359.61 L244.00 360.31 L244.25 360.51 L244.50 360.17 L244.75 359.36 L245.00 358.17 L245.25 356.76 L245.50 355.31 L245.75 354.01 L246.00 353.04 L246.25 352.52 L246.50 352.52 L246.75 353.05 L247.00 354.04 L247.25 355.36 L247.50 356.83 L247.75 358.27 L248.00 359.48 L248.25 360.30 L248.50 360.62 L248.75 360.40 L249.00 359.66 L249.25 358.50 L249.50 357.07 L249.75 355.56 L250.00 354.17 L250.25 353.08 L250.50 352.44 L250.75 352.33 L251.00 352.77 L251.25 353.71 L251.50 355.02 L251.75 356.53 L252.00 358.05 L252.25 359.36 L252.50 360.31 L252.75 360.75 L253.00 360.63 L253.25 359.97 L253.50 358.84 L253.75 357.40 L254.00 355.84 L254.25 354.35 L254.50 353.15 L254.75 352.38 L255.00 352.16 L255.25 352.50 L255.50 353.38 L255.75 354.68 L256.00 356.22 L256.25 357.80 L256.50 359.22 L256.75 360.28 L257.00 360.85 L257.25 360.85 L257.50 360.27 L257.75 359.19 L258.00 357.75 L258.25 356.14 L258.50 354.57 L258.75 353.25 L259.00 352.36 L259.25 352.01 L259.50 352.25 L259.75 353.05 L260.00 354.32 L260.25 355.88 L260.50 357.52 L260.75 359.04 L261.00 360.23 L261.25 360.93 L261.50 361.04 L261.75 360.56 L262.00 359.54 L262.25 358.11 L262.50 356.46 L262.75 354.82 L263.00 353.38 L263.25 352.36 L263.50 351.88 L263.75 352.01 L264.00 352.73 L264.25 353.96 L264.50 355.52 L264.75 357.22 L265.00 358.83 L265.25 360.14 L265.50 360.97 L265.75 361.22 L266.00 360.84 L266.25 359.88 L266.50 358.48 L266.75 356.81 L267.00 355.09 L267.25 353.55 L267.50 352.40 L267.75 351.78 L268.00 351.79" fill="none" stroke="#f8f628" stroke-width="1.2" stroke-linejoin="round"/><path d="M221.00 355.60 L222.00 355.60 L223.00 355.60 L224.00 355.60 L225.00 355.60 L226.00 355.60 L227.00 355.60 L228.00 355.60 L229.00 355.60 L230.00 355.60 L231.00 355.60 L232.00 355.60 L233.00 355.60 L234.00 355.60 L235.00 355.60 L236.00 355.60 L237.00 355.60 L238.00 355.60 L239.00 355.60 L240.00 355.60 L241.00 355.60 L242.00 355.60 L243.00 355.60 L244.00 355.60 L245.00 355.60 L246.00 355.60 L247.00 355.60 L248.00 355.60 L249.00 355.60 L250.00 355.60 L251.00 355.60 L252.00 355.60 L253.00 355.60 L254.00 355.60 L255.00 355.60 L256.00 355.60 L257.00 355.60 L258.00 355.60 L259.00 355.60 L260.00 355.60 L261.00 355.60 L262.00 355.60 L263.00 355.60 L264.00 355.60 L265.00 355.60 L265.00 357.40 L264.00 357.40 L263.00 357.40 L262.00 357.40 L261.00 357.40 L260.00 357.40 L259.00 357.40 L258.00 357.40 L257.00 357.40 L256.00 357.40 L255.00 357.40 L254.00 357.40 L253.00 357.40 L252.00 357.40 L251.00 357.40 L250.00 357.40 L249.00 357.40 L248.00 357.40 L247.00 357.40 L246.00 357.40 L245.00 357.40 L244.00 357.40 L243.00 357.40 L242.00 357.40 L241.00 357.40 L240.00 357.40 L239.00 357.40 L238.00 357.40 L237.00 357.40 L236.00 357.40 L235.00 357.40 L234.00 357.40 L233.00 357.40 L232.00 357.40 L231.00 357.40 L230.00 357.40 L229.00 357.40 L228.00 357.40 L227.00 357.40 L226.00 357.40 L225.00 357.40 L224.00 357.40 L223.00 357.40 L222.00 357.40 L221.00 357.40Z" fill="#f8f628" /><path d="M265.00 356.50 L265.25 354.81 L265.50 353.32 L265.75 352.20 L266.00 351.62 L266.25 351.65 L266.50 352.28 L266.75 353.45 L267.00 355.01 L267.25 356.78 L267.50 358.53 L267.75 360.05 L268.00 361.15 L268.25 361.69 L268.50 361.60 L268.75 360.88 L269.00 359.62 L269.25 357.96 L269.50 356.11 L269.75 354.28 L270.00 352.70 L270.25 351.57 L270.50 351.02 L270.75 351.11 L271.00 351.86 L271.25 353.17 L271.50 354.89 L271.75 356.82 L272.00 358.73 L272.25 360.40 L272.50 361.62 L272.75 362.25 L273.00 362.22 L273.25 361.51 L273.50 360.21 L273.75 358.47 L274.00 356.48 L274.25 354.47 L274.50 352.68 L274.75 351.31 L275.00 350.53 L275.25 350.42 L275.50 351.01 L275.75 352.24 L276.00 353.96 L276.25 355.98 L276.50 358.09 L276.75 360.03 L277.00 361.59 L277.25 362.59 L277.50 362.92 L277.75 362.53 L278.00 361.46 L278.25 359.83 L278.50 357.82 L278.75 355.64 L279.00 353.53 L279.25 351.74 L279.50 350.45 L279.75 349.82 L280.00 349.92 L280.25 350.73 L280.50 352.19 L280.75 354.12 L281.00 356.33 L281.25 358.58 L281.50 360.62 L281.75 362.23 L282.00 363.24 L282.25 363.53 L282.50 363.08 L282.75 361.92 L283.00 360.17 L283.25 358.01 L283.50 355.68 L283.75 353.42 L284.00 351.47 L284.25 350.03 L284.50 349.25 L284.75 349.24 L285.00 349.98 L285.25 351.43 L285.50 353.40 L285.75 355.70 L286.00 358.07 L286.25 360.28 L286.50 362.09 L286.75 363.34 L287.00 363.88 L287.25 363.67 L287.50 362.73 L287.75 361.16 L288.00 359.12 L288.25 356.82 L288.50 354.49 L288.75 352.36 L289.00 350.65 L289.25 349.53 L289.50 349.10 L289.75 349.42 L290.00 350.43 L290.25 352.05 L290.50 354.11 L290.75 356.40 L291.00 358.70 L291.25 360.78 L291.50 362.43 L291.75 363.51 L292.00 363.90 L292.25 363.57 L292.50 362.55 L292.75 360.95 L293.00 358.91 L293.25 356.65 L293.50 354.38 L293.75 352.31 L294.00 350.64 L294.25 349.54 L294.50 349.11 L294.75 349.37 L295.00 350.32 L295.25 351.85 L295.50 353.82 L295.75 356.04 L296.00 358.30 L296.25 360.39 L296.50 362.11 L296.75 363.31 L297.00 363.87 L297.25 363.74 L297.50 362.94 L297.75 361.54 L298.00 359.68 L298.25 357.52 L298.50 355.28 L298.75 353.15 L299.00 351.33 L299.25 349.98 L299.50 349.23 L299.75 349.15 L300.00 349.73 L300.25 350.93 L300.50 352.63 L300.75 354.68 L301.00 356.89 L301.25 359.06 L301.50 361.01 L301.75 362.54 L302.00 363.53 L302.25 363.90 L302.50 363.60 L302.75 362.68 L303.00 361.21 L303.25 359.32 L303.50 357.19 L303.75 355.00 L304.00 352.94 L304.25 351.20 L304.50 349.92 L304.75 349.22 L305.00 349.15 L305.25 349.72 L305.50 350.89 L305.75 352.53 L306.00 354.52 L306.25 356.67 L306.50 358.81 L306.75 360.75 L307.00 362.32 L307.25 363.39 L307.50 363.88 L307.75 363.73 L308.00 362.97 L308.25 361.67 L308.50 359.92 L308.75 357.89 L309.00 355.75" fill="none" stroke="#f8f628" stroke-width="1.5" stroke-linejoin="round"/><path d="M265.00 351.96 L265.25 352.72 L265.50 353.92 L265.75 355.44 L266.00 357.10 L266.25 358.71 L266.50 360.08 L266.75 361.06 L267.00 361.52 L267.25 361.41 L267.50 360.73 L267.75 359.57 L268.00 358.04 L268.25 356.31 L268.50 354.59 L268.75 353.07 L269.00 351.92 L269.25 351.28 L269.50 351.22 L269.75 351.76 L270.00 352.85 L270.25 354.35 L270.50 356.12 L270.75 357.94 L271.00 359.62 L271.25 360.97 L271.50 361.83 L271.75 362.11 L272.00 361.76 L272.25 360.81 L272.50 359.38 L272.75 357.62 L273.00 355.71 L273.25 353.87 L273.50 352.31 L273.75 351.19 L274.00 350.65 L274.25 350.75 L274.50 351.48 L274.75 352.77 L275.00 354.48 L275.25 356.43 L275.50 358.41 L275.75 360.19 L276.00 361.59 L276.25 362.45 L276.50 362.66 L276.75 362.21 L277.00 361.14 L277.25 359.55 L277.50 357.62 L277.75 355.55 L278.00 353.56 L278.25 351.88 L278.50 350.67 L278.75 350.09 L279.00 350.18 L279.25 350.95 L279.50 352.33 L279.75 354.16 L280.00 356.25 L280.25 358.39 L280.50 360.35 L280.75 361.91 L281.00 362.92 L281.25 363.25 L281.50 362.87 L281.75 361.82 L282.00 360.19 L282.25 358.17 L282.50 355.95 L282.75 353.77 L283.00 351.86 L283.25 350.43 L283.50 349.61 L283.75 349.51 L284.00 350.14 L284.25 351.43 L284.50 353.26 L284.75 355.44 L285.00 357.75 L285.25 359.93 L285.50 361.76 L285.75 363.04 L286.00 363.66 L286.25 363.54 L286.50 362.70 L286.75 361.22 L287.00 359.27 L287.25 357.03 L287.50 354.75 L287.75 352.64 L288.00 350.92 L288.25 349.77 L288.50 349.31 L288.75 349.57 L289.00 350.53 L289.25 352.09 L289.50 354.09 L289.75 356.34 L290.00 358.60 L290.25 360.65 L290.50 362.28 L290.75 363.33 L291.00 363.70 L291.25 363.35 L291.50 362.32 L291.75 360.71 L292.00 358.69 L292.25 356.44 L292.50 354.21 L292.75 352.20 L293.00 350.62 L293.25 349.62 L293.50 349.30 L293.75 349.69 L294.00 350.74 L294.25 352.36 L294.50 354.39 L294.75 356.61 L295.00 358.83 L295.25 360.82 L295.50 362.38 L295.75 363.38 L296.00 363.70 L296.25 363.32 L296.50 362.29 L296.75 360.69 L297.00 358.69 L297.25 356.48 L297.50 354.27 L297.75 352.28 L298.00 350.70 L298.25 349.67 L298.50 349.30 L298.75 349.62 L299.00 350.60 L299.25 352.14 L299.50 354.09 L299.75 356.27 L300.00 358.48 L300.25 360.49 L300.50 362.13 L300.75 363.23 L301.00 363.69 L301.25 363.47 L301.50 362.60 L301.75 361.15 L302.00 359.27 L302.25 357.12 L302.50 354.92 L302.75 352.87 L303.00 351.16 L303.25 349.95 L303.50 349.35 L303.75 349.42 L304.00 350.15 L304.25 351.47 L304.50 353.25 L304.75 355.34 L305.00 357.53 L305.25 359.62 L305.50 361.43 L305.75 362.78 L306.00 363.55 L306.25 363.67 L306.50 363.13 L306.75 361.98 L307.00 360.33 L307.25 358.34 L307.50 356.17 L307.75 354.04 L308.00 352.13 L308.25 350.62 L308.50 349.65 L308.75 349.30 L309.00 349.60" fill="none" stroke="#f8f628" stroke-width="1.3" stroke-linejoin="round"/><path d="M306.50 363.50 L306.75 363.39 L307.00 363.06 L307.25 362.52 L307.50 361.78 L307.75 360.87 L308.00 359.82 L308.25 358.66 L308.50 357.43 L308.75 356.15 L309.00 354.87 L309.25 353.64 L309.50 352.48 L309.75 351.43 L310.00 350.52 L310.25 349.78 L310.50 349.24 L310.75 348.91 L311.00 348.80 L311.26 348.92 L311.52 349.29 L311.78 349.89 L312.04 350.69 L312.29 351.68 L312.55 352.82 L312.81 354.07 L313.07 355.38 L313.33 356.72 L313.59 358.03 L313.85 359.28 L314.11 360.42 L314.36 361.41 L314.62 362.21 L314.88 362.81 L315.14 363.18 L315.40 363.30 L315.66 363.19 L315.92 362.86 L316.18 362.33 L316.44 361.60 L316.71 360.71 L316.97 359.68 L317.23 358.53 L317.49 357.31 L317.75 356.05 L318.01 354.79 L318.27 353.57 L318.53 352.43 L318.79 351.39 L319.06 350.50 L319.32 349.77 L319.58 349.24 L319.84 348.91 L320.10 348.80 L320.35 348.83 L320.61 348.94 L320.86 349.11 L321.11 349.34 L321.37 349.64 L321.62 350.00 L321.87 350.41 L322.12 350.88 L322.38 351.40 L322.63 351.96 L322.88 352.55 L323.14 353.18 L323.39 353.84 L323.64 354.51 L323.90 355.20 L324.15 355.90 L324.40 356.60 L324.66 357.29 L324.91 357.96 L325.16 358.62 L325.42 359.25 L325.67 359.84 L325.92 360.40 L326.18 360.92 L326.43 361.39 L326.68 361.80 L326.93 362.16 L327.19 362.46 L327.44 362.69 L327.69 362.86 L327.95 362.97 L328.20 363.00 L328.45 362.99 L328.70 362.94 L328.95 362.87 L329.21 362.77 L329.46 362.65 L329.71 362.50 L329.96 362.32 L330.21 362.13 L330.46 361.91 L330.72 361.68 L330.97 361.43 L331.22 361.17 L331.47 360.90 L331.72 360.62 L331.97 360.34 L332.23 360.06 L332.48 359.78 L332.73 359.50 L332.98 359.23 L333.23 358.97 L333.48 358.72 L333.74 358.49 L333.99 358.27 L334.24 358.08 L334.49 357.90 L334.74 357.75 L334.99 357.63 L335.25 357.53 L335.50 357.46 L335.75 357.41 L336.00 357.40 L336.25 357.41 L336.50 357.43 L336.75 357.47 L337.00 357.53 L337.26 357.59 L337.51 357.68 L337.76 357.78 L338.01 357.89 L338.26 358.02 L338.51 358.15 L338.76 358.30 L339.01 358.46 L339.27 358.63 L339.52 358.81 L339.77 359.00 L340.02 359.20 L340.27 359.40 L340.52 359.60 L340.77 359.81 L341.02 360.03 L341.27 360.24 L341.53 360.46 L341.78 360.67 L342.03 360.89 L342.28 361.10 L342.53 361.30 L342.78 361.50 L343.03 361.70 L343.28 361.89 L343.53 362.07 L343.79 362.24 L344.04 362.40 L344.29 362.55 L344.54 362.68 L344.79 362.81 L345.04 362.92 L345.29 363.02 L345.54 363.11 L345.80 363.17 L346.05 363.23 L346.30 363.27 L346.55 363.29 L346.80 363.30 L347.05 363.25 L347.31 363.11 L347.56 362.87 L347.81 362.55 L348.07 362.14 L348.32 361.64 L348.57 361.07 L348.83 360.44 L349.08 359.74 L349.34 359.00 L349.59 358.21 L349.84 357.39 L350.10 356.55 L350.35 355.70 L350.60 354.85 L350.86 354.01 L351.11 353.19 L351.36 352.40 L351.62 351.66 L351.87 350.96 L352.12 350.33 L352.38 349.76 L352.63 349.26 L352.89 348.85 L353.14 348.53 L353.39 348.29 L353.65 348.15 L353.90 348.10 L354.16 348.22 L354.42 348.59 L354.68 349.19 L354.94 350.01 L355.21 351.01 L355.47 352.18 L355.73 353.46 L355.99 354.83 L356.25 356.25 L356.51 357.67 L356.77 359.04 L357.03 360.32 L357.29 361.49 L357.56 362.49 L357.82 363.31 L358.08 363.91 L358.34 364.28 L358.60 364.40 L358.86 364.26 L359.11 363.84 L359.37 363.17 L359.62 362.26 L359.88 361.16 L360.14 359.89 L360.39 358.52 L360.65 357.10 L360.91 355.68 L361.16 354.31 L361.42 353.04 L361.68 351.94 L361.93 351.03 L362.19 350.36 L362.44 349.94 L362.70 349.80 L362.96 349.94 L363.21 350.34 L363.47 351.00 L363.73 351.88 L363.98 352.96 L364.24 354.18 L364.49 355.51 L364.75 356.90 L365.01 358.29 L365.26 359.62 L365.52 360.84 L365.77 361.92 L366.03 362.80 L366.29 363.46 L366.54 363.86 L366.80 364.00 L367.07 363.63 L367.34 362.55 L367.61 360.87 L367.88 358.75 L368.15 356.40 L368.42 354.05 L368.69 351.93 L368.96 350.25 L369.23 349.17 L369.50 348.80 L369.77 349.13 L370.04 350.09 L370.31 351.58 L370.58 353.46 L370.85 355.55 L371.12 357.64 L371.39 359.52 L371.66 361.01 L371.93 361.97 L372.20 362.30 L372.45 362.13 L372.71 361.64 L372.96 360.85 L373.22 359.82 L373.47 358.59 L373.72 357.24 L373.98 355.86 L374.23 354.51 L374.48 353.28 L374.74 352.25 L374.99 351.46 L375.25 350.97 L375.50 350.80 L375.75 350.97 L376.00 351.45 L376.25 352.24 L376.50 353.28 L376.75 354.54 L377.00 355.93 L377.25 357.40 L377.50 358.87 L377.75 360.26 L378.00 361.52 L378.25 362.56 L378.50 363.35 L378.75 363.83 L379.00 364.00 L379.25 363.75 L379.50 363.03 L379.75 361.88 L380.00 360.38 L380.25 358.63 L380.50 356.75 L380.75 354.87 L381.00 353.12 L381.25 351.62 L381.50 350.47 L381.75 349.75 L382.00 349.50 L382.25 349.68 L382.50 350.22 L382.75 351.08 L383.00 352.23 L383.25 353.60 L383.50 355.14 L383.75 356.75 L384.00 358.36 L384.25 359.90 L384.50 361.27 L384.75 362.42 L385.00 363.28 L385.25 363.82 L385.50 364.00 L385.75 363.82 L386.00 363.28 L386.25 362.42 L386.50 361.27 L386.75 359.90 L387.00 358.36 L387.25 356.75 L387.50 355.14 L387.75 353.60 L388.00 352.23 L388.25 351.08 L388.50 350.22 L388.75 349.68 L389.00 349.50 L389.25 349.68 L389.50 350.22 L389.75 351.08 L390.00 352.23 L390.25 353.60 L390.50 355.14 L390.75 356.75 L391.00 358.36 L391.25 359.90 L391.50 361.27 L391.75 362.42 L392.00 363.28 L392.25 363.82 L392.50 364.00 L392.75 363.82 L393.00 363.28 L393.25 362.42 L393.50 361.27 L393.75 359.90 L394.00 358.36 L394.25 356.75 L394.50 355.14 L394.75 353.60 L395.00 352.23 L395.25 351.08 L395.50 350.22 L395.75 349.68 L396.00 349.50 L396.25 349.68 L396.50 350.22 L396.75 351.08 L397.00 352.23 L397.25 353.60 L397.50 355.14 L397.75 356.75 L398.00 358.36 L398.25 359.90 L398.50 361.27 L398.75 362.42 L399.00 363.28 L399.25 363.82 L399.50 364.00 L399.75 363.82 L400.00 363.28 L400.25 362.42 L400.50 361.27 L400.75 359.90 L401.00 358.36 L401.25 356.75 L401.50 355.14 L401.75 353.60 L402.00 352.23 L402.25 351.08 L402.50 350.22 L402.75 349.68 L403.00 349.50 L403.25 349.68 L403.50 350.22 L403.75 351.08 L404.00 352.23 L404.25 353.60 L404.50 355.14 L404.75 356.75 L405.00 358.36 L405.25 359.90 L405.50 361.27 L405.75 362.42 L406.00 363.28 L406.25 363.82 L406.50 364.00 L406.75 363.82 L407.00 363.28 L407.25 362.42 L407.50 361.27 L407.75 359.90 L408.00 358.36 L408.25 356.75 L408.50 355.14 L408.75 353.60 L409.00 352.23 L409.25 351.08 L409.50 350.22 L409.75 349.68 L410.00 349.50" fill="none" stroke="#f8f628" stroke-width="2.3" stroke-linejoin="round" stroke-linecap="round"/><path d="M372.00 351.05 L372.25 349.68 L372.50 348.98 L372.75 349.01 L373.00 349.78 L373.25 351.21 L373.50 353.15 L373.75 355.42 L374.00 357.80 L374.25 360.05 L374.50 361.95 L374.75 363.32 L375.00 364.02 L375.25 363.99 L375.50 363.22 L375.75 361.79 L376.00 359.85 L376.25 357.58 L376.50 355.20 L376.75 352.95 L377.00 351.05 L377.25 349.68 L377.50 348.98 L377.75 349.01 L378.00 349.78 L378.25 351.21 L378.50 353.15 L378.75 355.42 L379.00 357.80 L379.25 360.05 L379.50 361.95 L379.75 363.32 L380.00 364.02 L380.25 363.99 L380.50 363.22 L380.75 361.79 L381.00 359.85 L381.25 357.58 L381.50 355.20 L381.75 352.95 L382.00 351.05 L382.25 349.68 L382.50 348.98 L382.75 349.01 L383.00 349.78 L383.25 351.21 L383.50 353.15 L383.75 355.42 L384.00 357.80 L384.25 360.05 L384.50 361.95 L384.75 363.32 L385.00 364.02 L385.25 363.99 L385.50 363.22 L385.75 361.79 L386.00 359.85 L386.25 357.58 L386.50 355.20 L386.75 352.95 L387.00 351.05 L387.25 349.68 L387.50 348.98 L387.75 349.01 L388.00 349.78 L388.25 351.21 L388.50 353.15 L388.75 355.42 L389.00 357.80 L389.25 360.05 L389.50 361.95 L389.75 363.32 L390.00 364.02 L390.25 363.99 L390.50 363.22 L390.75 361.79 L391.00 359.85 L391.25 357.58 L391.50 355.20 L391.75 352.95 L392.00 351.05 L392.25 349.68 L392.50 348.98 L392.75 349.01 L393.00 349.78 L393.25 351.21 L393.50 353.15 L393.75 355.42 L394.00 357.80 L394.25 360.05 L394.50 361.95 L394.75 363.32 L395.00 364.02 L395.25 363.99 L395.50 363.22 L395.75 361.79 L396.00 359.85 L396.25 357.58 L396.50 355.20 L396.75 352.95 L397.00 351.05 L397.25 349.68 L397.50 348.98 L397.75 349.01 L398.00 349.78 L398.25 351.21 L398.50 353.15 L398.75 355.42 L399.00 357.80 L399.25 360.05 L399.50 361.95 L399.75 363.32 L400.00 364.02 L400.25 363.99 L400.50 363.22 L400.75 361.79 L401.00 359.85 L401.25 357.58 L401.50 355.20 L401.75 352.95 L402.00 351.05 L402.25 349.68 L402.50 348.98 L402.75 349.01 L403.00 349.78 L403.25 351.21 L403.50 353.15 L403.75 355.42 L404.00 357.80 L404.25 360.05 L404.50 361.95 L404.75 363.32 L405.00 364.02 L405.25 363.99 L405.50 363.22 L405.75 361.79 L406.00 359.85 L406.25 357.58 L406.50 355.20 L406.75 352.95 L407.00 351.05 L407.25 349.68 L407.50 348.98 L407.75 349.01 L408.00 349.78 L408.25 351.21 L408.50 353.15 L408.75 355.42 L409.00 357.80 L409.25 360.05 L409.50 361.95 L409.75 363.32 L410.00 364.02 L410.25 363.99 L410.50 363.22 L410.75 361.79 L411.00 359.85 L411.25 357.58 L411.50 355.20 L411.75 352.95 L412.00 351.05" fill="none" stroke="#f8f628" stroke-width="1.3" stroke-linejoin="round"/><path d="M380.00 352.07 L380.25 353.59 L380.50 355.28 L380.75 357.04 L381.00 358.76 L381.25 360.36 L381.50 361.74 L381.75 362.82 L382.00 363.55 L382.25 363.88 L382.50 363.80 L382.75 363.30 L383.00 362.42 L383.25 361.21 L383.50 359.73 L383.75 358.07 L384.00 356.32 L384.25 354.58 L384.50 352.95 L384.75 351.52 L385.00 350.37 L385.25 349.56 L385.50 349.15 L385.75 349.15 L386.00 349.57 L386.25 350.38 L386.50 351.53 L386.75 352.96 L387.00 354.59 L387.25 356.33 L387.50 358.08 L387.75 359.74 L388.00 361.22 L388.25 362.43 L388.50 363.31 L388.75 363.80 L389.00 363.88 L389.25 363.55 L389.50 362.81 L389.75 361.73 L390.00 360.35 L390.25 358.75 L390.50 357.02 L390.75 355.27 L391.00 353.58 L391.25 352.06 L391.50 350.79 L391.75 349.84 L392.00 349.27 L392.25 349.10 L392.50 349.35 L392.75 350.01 L393.00 351.03 L393.25 352.36 L393.50 353.92 L393.75 355.63 L394.00 357.39 L394.25 359.09 L394.50 360.65 L394.75 361.98 L395.00 363.00 L395.25 363.65 L395.50 363.90 L395.75 363.73 L396.00 363.15 L396.25 362.20 L396.50 360.93 L396.75 359.41 L397.00 357.72 L397.25 355.96 L397.50 354.24 L397.75 352.64 L398.00 351.26 L398.25 350.18 L398.50 349.45 L398.75 349.12 L399.00 349.20 L399.25 349.70 L399.50 350.58 L399.75 351.79 L400.00 353.27 L400.25 354.93 L400.50 356.68 L400.75 358.42 L401.00 360.05 L401.25 361.48 L401.50 362.63 L401.75 363.44 L402.00 363.85 L402.25 363.85 L402.50 363.43 L402.75 362.62 L403.00 361.47 L403.25 360.04 L403.50 358.41 L403.75 356.67 L404.00 354.92 L404.25 353.26 L404.50 351.78 L404.75 350.57 L405.00 349.69 L405.25 349.20 L405.50 349.12 L405.75 349.45 L406.00 350.19 L406.25 351.27 L406.50 352.65 L406.75 354.25 L407.00 355.98 L407.25 357.73 L407.50 359.42 L407.75 360.94 L408.00 362.21 L408.25 363.16 L408.50 363.73 L408.75 363.90 L409.00 363.65 L409.25 362.99 L409.50 361.97 L409.75 360.64 L410.00 359.08 L410.25 357.37 L410.50 355.61 L410.75 353.91 L411.00 352.35 L411.25 351.02 L411.50 350.00 L411.75 349.35 L412.00 349.10" fill="none" stroke="#f8f628" stroke-width="1.1" stroke-linejoin="round"/><path d="M408.00 355.34 L409.00 355.35 L410.00 354.85 L411.00 355.05 L412.00 354.44 L413.00 354.73 L414.00 353.99 L415.00 354.16 L416.00 354.40 L417.00 354.13 L418.00 354.69 L419.00 353.65 L420.00 354.17 L421.00 354.46 L422.00 353.80 L423.00 354.08 L424.00 354.34 L425.00 353.65 L426.00 353.84 L427.00 353.75 L428.00 353.04 L429.00 353.16 L430.00 353.92 L431.00 353.09 L432.00 353.46 L433.00 353.50 L434.00 353.70 L435.00 352.74 L436.00 353.33 L437.00 352.90 L438.00 352.61 L439.00 352.07 L440.00 352.91 L441.00 352.64 L442.00 352.87 L443.00 351.97 L444.00 351.72 L445.00 351.51 L446.00 351.78 L447.00 352.11 L448.00 352.11 L449.00 351.32 L450.00 351.42 L451.00 351.81 L452.00 351.71 L453.00 350.88 L454.00 351.20 L455.00 350.59 L456.00 350.74 L457.00 350.91 L458.00 350.48 L459.00 349.78 L460.00 349.97 L461.00 350.31 L462.00 350.15 L462.00 363.76 L461.00 363.25 L460.00 363.55 L459.00 362.93 L458.00 362.68 L457.00 361.95 L456.00 362.07 L455.00 362.08 L454.00 362.48 L453.00 361.96 L452.00 362.04 L451.00 361.94 L450.00 361.70 L449.00 361.24 L448.00 360.75 L447.00 361.42 L446.00 361.55 L445.00 361.29 L444.00 361.26 L443.00 360.35 L442.00 360.42 L441.00 360.74 L440.00 361.02 L439.00 360.91 L438.00 360.54 L437.00 359.78 L436.00 360.48 L435.00 359.70 L434.00 359.47 L433.00 359.47 L432.00 359.17 L431.00 359.85 L430.00 359.60 L429.00 358.94 L428.00 358.81 L427.00 359.11 L426.00 359.06 L425.00 358.64 L424.00 359.11 L423.00 359.02 L422.00 359.10 L421.00 358.67 L420.00 358.27 L419.00 358.68 L418.00 358.89 L417.00 358.81 L416.00 358.62 L415.00 359.03 L414.00 358.02 L413.00 358.43 L412.00 357.83 L411.00 357.85 L410.00 358.07 L409.00 357.56 L408.00 357.76Z" fill="#f8f628" /><path d="M405.00 356.50 L405.25 353.21 L405.50 350.53 L405.75 348.98 L406.00 348.84 L406.25 350.14 L406.50 352.62 L406.75 355.82 L407.00 359.15 L407.25 361.98 L407.50 363.77 L407.75 364.20 L408.00 363.19 L408.25 360.93 L408.50 357.84 L408.75 354.50 L409.00 351.55 L409.25 349.52 L409.50 348.81 L409.75 349.53 L410.00 351.56 L410.25 354.51 L410.50 357.83 L410.75 360.89 L411.00 363.13 L411.25 364.12 L411.50 363.68 L411.75 361.90 L412.00 359.11 L412.25 355.84 L412.50 352.69 L412.75 350.26 L413.00 349.01 L413.25 349.16 L413.50 350.68 L413.75 353.29 L414.00 356.50 L414.25 359.70 L414.50 362.30 L414.75 363.81 L415.00 363.95 L415.25 362.69 L415.50 360.27 L415.75 357.16 L416.00 353.92 L416.25 351.18 L416.50 349.43 L416.75 349.01 L417.00 349.99 L417.25 352.19 L417.50 355.20 L417.75 358.44 L418.00 361.31 L418.25 363.28 L418.50 363.98 L418.75 363.27 L419.00 361.30 L419.25 358.43 L419.50 355.21 L419.75 352.23 L420.00 350.06 L420.25 349.09 L420.50 349.52 L420.75 351.25 L421.00 353.96 L421.25 357.15 L421.50 360.20 L421.75 362.56 L422.00 363.78 L422.25 363.63 L422.50 362.15 L422.75 359.62 L423.00 356.50 L423.25 353.39 L423.50 350.86 L423.75 349.40 L424.00 349.27 L424.25 350.49 L424.50 352.83 L424.75 355.86 L425.00 359.00 L425.25 361.67 L425.50 363.37 L425.75 363.77 L426.00 362.82 L426.25 360.68 L426.50 357.76 L426.75 354.62 L427.00 351.83 L427.25 349.91 L427.50 349.24 L427.75 349.93 L428.00 351.84 L428.25 354.63 L428.50 357.76 L428.75 360.65 L429.00 362.76 L429.25 363.69 L429.50 363.28 L429.75 361.60 L430.00 358.96 L430.25 355.87 L430.50 352.91 L430.75 350.62 L431.00 349.43 L431.25 349.57 L431.50 351.01 L431.75 353.47 L432.00 356.50 L432.25 359.52 L432.50 361.97 L432.75 363.39 L433.00 363.52 L433.25 362.33 L433.50 360.06 L433.75 357.12 L434.00 354.07 L434.25 351.48 L434.50 349.84 L434.75 349.44 L435.00 350.37 L435.25 352.44 L435.50 355.27 L435.75 358.33 L436.00 361.04 L436.25 362.89 L436.50 363.54 L436.75 362.88 L437.00 361.02 L437.25 358.32 L437.50 355.28 L437.75 352.48 L438.00 350.43 L438.25 349.52 L438.50 349.93 L438.75 351.56 L439.00 354.11 L439.25 357.11 L439.50 359.99 L439.75 362.21 L440.00 363.35 L440.25 363.22 L440.50 361.82 L440.75 359.43 L441.00 356.50 L441.25 353.57 L441.50 351.20 L441.75 349.82 L442.00 349.69 L442.25 350.84 L442.50 353.05 L442.75 355.90 L443.00 358.86 L443.25 361.37 L443.50 362.96 L443.75 363.34 L444.00 362.44 L444.25 360.43 L444.50 357.69 L444.75 354.73 L445.00 352.10 L445.25 350.31 L445.50 349.67 L445.75 350.32 L446.00 352.12 L446.25 354.74 L446.50 357.68 L446.75 360.40 L447.00 362.38 L447.25 363.26 L447.50 362.87 L447.75 361.29 L448.00 358.81 L448.25 355.91 L448.50 353.12 L448.75 350.97 L449.00 349.86 L449.25 349.99 L449.50 351.34 L449.75 353.66 L450.00 356.50 L450.25 359.34 L450.50 361.64 L450.75 362.97 L451.00 363.09 L451.25 361.98 L451.50 359.84 L451.75 357.08 L452.00 354.22 L452.25 351.79 L452.50 350.24 L452.75 349.87 L453.00 350.74 L453.25 352.69 L453.50 355.35 L453.75 358.22 L454.00 360.76 L454.25 362.50 L454.50 363.11 L454.75 362.49 L455.00 360.74" fill="none" stroke="#f8f628" stroke-width="1.3" stroke-linejoin="round"/><path d="M405.00 349.18 L405.25 348.92 L405.50 349.55 L405.75 350.97 L406.00 353.03 L406.25 355.49 L406.50 358.06 L406.75 360.44 L407.00 362.37 L407.25 363.62 L407.50 364.04 L407.75 363.59 L408.00 362.33 L408.25 360.39 L408.50 358.01 L408.75 355.46 L409.00 353.03 L409.25 351.01 L409.50 349.62 L409.75 349.03 L410.00 349.30 L410.25 350.40 L410.50 352.21 L410.75 354.50 L411.00 357.03 L411.25 359.48 L411.50 361.59 L411.75 363.11 L412.00 363.87 L412.25 363.77 L412.50 362.83 L412.75 361.17 L413.00 358.96 L413.25 356.48 L413.50 354.01 L413.75 351.82 L414.00 350.18 L414.25 349.27 L414.50 349.20 L414.75 349.97 L415.00 351.49 L415.25 353.59 L415.50 356.02 L415.75 358.50 L416.00 360.74 L416.25 362.50 L416.50 363.56 L416.75 363.80 L417.00 363.20 L417.25 361.83 L417.50 359.84 L417.75 357.48 L418.00 355.00 L418.25 352.70 L418.50 350.84 L418.75 349.64 L419.00 349.24 L419.25 349.67 L419.50 350.89 L419.75 352.75 L420.00 355.04 L420.25 357.50 L420.50 359.84 L420.75 361.79 L421.00 363.13 L421.25 363.69 L421.50 363.43 L421.75 362.37 L422.00 360.63 L422.25 358.42 L422.50 355.99 L422.75 353.63 L423.00 351.59 L423.25 350.13 L423.50 349.41 L423.75 349.50 L424.00 350.40 L424.25 352.01 L424.50 354.13 L424.75 356.52 L425.00 358.90 L425.25 361.00 L425.50 362.58 L425.75 363.46 L426.00 363.53 L426.25 362.79 L426.50 361.32 L426.75 359.30 L427.00 356.97 L427.25 354.58 L427.50 352.41 L427.75 350.73 L428.00 349.71 L428.25 349.48 L428.50 350.05 L428.75 351.37 L429.00 353.28 L429.25 355.56 L429.50 357.94 L429.75 360.15 L430.00 361.94 L430.25 363.10 L430.50 363.49 L430.75 363.07 L431.00 361.90 L431.25 360.11 L431.50 357.90 L431.75 355.54 L432.00 353.29 L432.25 351.41 L432.50 350.13 L432.75 349.58 L433.00 349.83 L433.25 350.85 L433.50 352.53 L433.75 354.65 L434.00 356.99 L434.25 359.26 L434.50 361.22 L434.75 362.62 L435.00 363.32 L435.25 363.23 L435.50 362.36 L435.75 360.82 L436.00 358.78 L436.25 356.48 L436.50 354.19 L436.75 352.17 L437.00 350.65 L437.25 349.81 L437.50 349.75 L437.75 350.46 L438.00 351.87 L438.25 353.80 L438.50 356.05 L438.75 358.35 L439.00 360.43 L439.25 362.05 L439.50 363.03 L439.75 363.25 L440.00 362.69 L440.25 361.43 L440.50 359.59 L440.75 357.40 L441.00 355.11 L441.25 352.99 L441.50 351.27 L441.75 350.16 L442.00 349.79 L442.25 350.19 L442.50 351.31 L442.75 353.04 L443.00 355.15 L443.25 357.43 L443.50 359.59 L443.75 361.39 L444.00 362.62 L444.25 363.14 L444.50 362.90 L444.75 361.92 L445.00 360.32 L445.25 358.27 L445.50 356.03 L445.75 353.85 L446.00 351.97 L446.25 350.62 L446.50 349.96 L446.75 350.04 L447.00 350.88 L447.25 352.36 L447.50 354.31 L447.75 356.52 L448.00 358.71 L448.25 360.65 L448.50 362.11 L448.75 362.92 L449.00 362.98 L449.25 362.30 L449.50 360.95 L449.75 359.09 L450.00 356.93 L450.25 354.73 L450.50 352.73 L450.75 351.18 L451.00 350.24 L451.25 350.03 L451.50 350.56 L451.75 351.78 L452.00 353.54 L452.25 355.63 L452.50 357.83 L452.75 359.87 L453.00 361.51 L453.25 362.58 L453.50 362.94 L453.75 362.55 L454.00 361.47 L454.25 359.82 L454.50 357.79 L454.75 355.61 L455.00 353.54" fill="none" stroke="#f8f628" stroke-width="1.2" stroke-linejoin="round"/><path d="M460.00 349.47 L461.00 349.91 L462.00 349.83 L463.00 349.42 L464.00 349.40 L465.00 349.63 L466.00 349.45 L467.00 349.81 L468.00 349.42 L469.00 349.44 L470.00 349.47 L471.00 349.77 L472.00 349.59 L473.00 349.17 L474.00 349.59 L475.00 349.14 L476.00 349.33 L477.00 349.35 L478.00 349.37 L479.00 349.58 L480.00 349.26 L481.00 349.30 L482.00 349.41 L483.00 349.35 L484.00 349.18 L485.00 349.18 L486.00 349.09 L487.00 349.35 L488.00 349.00 L489.00 348.92 L490.00 348.73 L491.00 349.13 L492.00 348.63 L493.00 348.56 L494.00 348.87 L495.00 348.80 L496.00 348.91 L497.00 349.02 L498.00 349.06 L499.00 348.46 L500.00 348.43 L501.00 348.89 L502.00 348.71 L503.00 348.72 L504.00 348.81 L505.00 348.66 L506.00 348.46 L507.00 348.90 L508.00 348.19 L509.00 348.32 L510.00 348.28 L511.00 348.65 L512.00 348.77 L513.00 348.69 L514.00 348.18 L515.00 348.30 L516.00 348.02 L517.00 348.36 L518.00 348.52 L519.00 348.23 L520.00 348.14 L521.00 348.22 L522.00 348.01 L523.00 348.01 L524.00 347.84 L525.00 348.21 L526.00 348.00 L527.00 347.84 L528.00 347.72 L529.00 348.22 L530.00 348.25 L531.00 348.01 L532.00 348.09 L533.00 347.88 L534.00 347.62 L535.00 347.85 L536.00 348.18 L537.00 348.00 L538.00 347.61 L539.00 348.10 L540.00 347.49 L541.00 348.01 L542.00 347.64 L543.00 347.41 L544.00 347.60 L545.00 347.35 L546.00 347.28 L547.00 347.40 L548.00 347.79 L549.00 347.52 L550.00 347.37 L551.00 347.22 L552.00 347.53 L553.00 347.75 L554.00 347.11 L555.00 347.06 L556.00 347.52 L557.00 347.44 L558.00 347.55 L559.00 347.21 L560.00 347.03 L561.00 347.04 L562.00 347.10 L563.00 347.23 L564.00 346.93 L565.00 347.28 L566.00 347.25 L567.00 347.02 L568.00 347.16 L569.00 347.07 L570.00 347.16 L571.00 347.02 L572.00 346.95 L573.00 347.24 L574.00 347.15 L575.00 347.05 L576.00 347.19 L577.00 346.63 L578.00 346.75 L579.00 346.87 L580.00 346.74 L581.00 347.10 L582.00 346.94 L583.00 346.86 L584.00 346.86 L585.00 346.37 L586.00 346.72 L587.00 346.59 L588.00 346.40 L589.00 346.71 L590.00 346.31 L591.00 346.43 L592.00 346.64 L593.00 346.64 L594.00 346.30 L595.00 346.12 L596.00 346.18 L597.00 346.36 L598.00 346.43 L599.00 346.62 L600.00 346.06 L601.00 346.58 L602.00 345.94 L603.00 346.31 L604.00 346.04 L605.00 345.99 L606.00 346.36 L607.00 346.10 L608.00 345.83 L609.00 346.03 L610.00 345.88 L611.00 345.63 L612.00 346.13 L613.00 345.58 L614.00 345.42 L615.00 345.73 L616.00 345.72 L617.00 345.84 L618.00 345.85 L619.00 345.25 L620.00 345.22 L621.00 345.14 L622.00 345.11 L623.00 345.16 L624.00 345.26 L625.00 345.20 L626.00 345.10 L627.00 345.43 L628.00 344.90 L629.00 344.96 L630.00 345.27 L631.00 344.89 L632.00 345.23 L633.00 344.81 L634.00 344.69 L635.00 344.58 L636.00 344.89 L637.00 344.76 L638.00 344.50 L639.00 344.95 L640.00 344.46 L641.00 344.38 L642.00 344.64 L643.00 344.56 L644.00 344.80 L645.00 344.31 L646.00 344.59 L647.00 344.04 L648.00 344.23 L649.00 344.46 L650.00 343.90 L651.00 344.45 L652.00 343.99 L653.00 344.05 L654.00 344.30 L655.00 344.15 L656.00 344.09 L657.00 343.91 L658.00 343.74 L659.00 344.13 L660.00 343.52 L661.00 343.76 L662.00 343.60 L663.00 343.55 L664.00 343.47 L665.00 343.45 L666.00 343.32 L667.00 343.24 L668.00 343.48 L669.00 343.45 L670.00 343.25 L671.00 343.62 L672.00 343.24 L673.00 343.30 L674.00 343.56 L675.00 342.92 L676.00 343.09 L677.00 342.93 L678.00 343.25 L679.00 342.67 L680.00 342.67 L681.00 342.67 L682.00 343.12 L683.00 342.68 L684.00 342.94 L685.00 342.57 L686.00 342.72 L687.00 342.78 L688.00 342.91 L689.00 342.39 L690.00 342.28 L691.00 342.77 L692.00 342.42 L693.00 342.75 L694.00 342.20 L695.00 342.34 L696.00 342.19 L697.00 342.07 L698.00 342.28 L699.00 342.15 L700.00 342.26 L701.00 342.33 L702.00 341.93 L703.00 342.18 L704.00 341.63 L705.00 341.88 L706.00 341.60 L707.00 341.66 L708.00 341.81 L709.00 341.98 L710.00 341.42 L711.00 341.36 L712.00 341.91 L713.00 341.69 L714.00 341.36 L715.00 341.41 L716.00 341.13 L717.00 341.37 L718.00 341.60 L719.00 341.41 L720.00 341.26 L721.00 340.94 L722.00 341.21 L723.00 340.99 L724.00 341.02 L725.00 340.93 L726.00 340.97 L727.00 340.88 L728.00 340.96 L729.00 340.63 L730.00 340.74 L731.00 341.14 L732.00 340.93 L733.00 340.48 L734.00 340.99 L735.00 340.76 L736.00 340.66 L737.00 340.69 L738.00 340.79 L739.00 340.30 L739.00 372.53 L738.00 372.32 L737.00 372.67 L736.00 372.50 L735.00 372.67 L734.00 372.49 L733.00 372.51 L732.00 372.10 L731.00 371.91 L730.00 372.46 L729.00 372.15 L728.00 372.11 L727.00 371.80 L726.00 371.85 L725.00 371.93 L724.00 371.66 L723.00 372.06 L722.00 371.57 L721.00 371.76 L720.00 371.80 L719.00 371.51 L718.00 371.55 L717.00 371.69 L716.00 371.53 L715.00 371.60 L714.00 371.25 L713.00 371.17 L712.00 371.68 L711.00 371.28 L710.00 371.14 L709.00 371.21 L708.00 371.06 L707.00 371.35 L706.00 371.18 L705.00 370.99 L704.00 371.00 L703.00 370.89 L702.00 371.28 L701.00 370.89 L700.00 370.54 L699.00 370.91 L698.00 370.75 L697.00 370.92 L696.00 370.50 L695.00 370.49 L694.00 370.50 L693.00 370.77 L692.00 370.86 L691.00 370.44 L690.00 370.26 L689.00 370.12 L688.00 370.27 L687.00 370.16 L686.00 370.13 L685.00 370.16 L684.00 369.89 L683.00 370.25 L682.00 370.09 L681.00 370.15 L680.00 370.06 L679.00 370.11 L678.00 369.66 L677.00 369.76 L676.00 370.12 L675.00 369.49 L674.00 369.51 L673.00 369.58 L672.00 369.95 L671.00 369.37 L670.00 369.50 L669.00 369.38 L668.00 369.44 L667.00 369.25 L666.00 369.41 L665.00 369.69 L664.00 369.66 L663.00 369.56 L662.00 369.04 L661.00 369.37 L660.00 369.54 L659.00 369.07 L658.00 368.91 L657.00 369.12 L656.00 369.09 L655.00 368.78 L654.00 369.20 L653.00 369.26 L652.00 369.07 L651.00 368.71 L650.00 368.75 L649.00 369.05 L648.00 368.36 L647.00 368.91 L646.00 368.80 L645.00 368.92 L644.00 368.30 L643.00 368.22 L642.00 368.68 L641.00 368.18 L640.00 368.66 L639.00 368.37 L638.00 368.51 L637.00 368.17 L636.00 368.22 L635.00 368.20 L634.00 368.38 L633.00 367.85 L632.00 368.00 L631.00 367.71 L630.00 367.86 L629.00 368.18 L628.00 368.10 L627.00 367.65 L626.00 367.77 L625.00 368.06 L624.00 367.74 L623.00 367.54 L622.00 367.87 L621.00 367.28 L620.00 367.71 L619.00 367.42 L618.00 367.73 L617.00 367.27 L616.00 367.02 L615.00 367.02 L614.00 367.51 L613.00 367.58 L612.00 366.88 L611.00 367.31 L610.00 367.29 L609.00 367.14 L608.00 367.13 L607.00 367.08 L606.00 367.16 L605.00 367.02 L604.00 366.99 L603.00 366.60 L602.00 366.56 L601.00 366.68 L600.00 366.35 L599.00 366.87 L598.00 366.56 L597.00 366.64 L596.00 366.28 L595.00 366.64 L594.00 366.76 L593.00 366.59 L592.00 366.36 L591.00 366.48 L590.00 366.18 L589.00 366.69 L588.00 366.65 L587.00 366.10 L586.00 366.19 L585.00 366.66 L584.00 366.58 L583.00 366.36 L582.00 366.13 L581.00 366.26 L580.00 366.26 L579.00 366.12 L578.00 366.31 L577.00 366.47 L576.00 365.77 L575.00 366.18 L574.00 365.82 L573.00 366.25 L572.00 366.13 L571.00 366.05 L570.00 365.76 L569.00 366.12 L568.00 366.23 L567.00 366.22 L566.00 366.20 L565.00 365.65 L564.00 365.66 L563.00 365.89 L562.00 365.83 L561.00 365.92 L560.00 365.76 L559.00 365.53 L558.00 365.83 L557.00 365.90 L556.00 365.97 L555.00 365.45 L554.00 365.41 L553.00 365.43 L552.00 365.23 L551.00 365.78 L550.00 365.72 L549.00 365.60 L548.00 365.76 L547.00 365.64 L546.00 365.72 L545.00 365.66 L544.00 365.51 L543.00 365.13 L542.00 365.36 L541.00 365.48 L540.00 365.45 L539.00 365.06 L538.00 365.46 L537.00 365.44 L536.00 365.20 L535.00 364.86 L534.00 364.92 L533.00 364.74 L532.00 365.09 L531.00 365.29 L530.00 365.24 L529.00 365.24 L528.00 364.68 L527.00 365.02 L526.00 364.60 L525.00 365.10 L524.00 365.11 L523.00 365.10 L522.00 364.91 L521.00 364.54 L520.00 365.03 L519.00 364.44 L518.00 364.50 L517.00 364.55 L516.00 364.80 L515.00 364.44 L514.00 364.81 L513.00 364.81 L512.00 364.53 L511.00 364.31 L510.00 364.28 L509.00 364.70 L508.00 364.25 L507.00 364.77 L506.00 364.35 L505.00 364.48 L504.00 364.60 L503.00 364.24 L502.00 364.57 L501.00 364.03 L500.00 364.10 L499.00 364.58 L498.00 364.15 L497.00 364.10 L496.00 364.04 L495.00 364.42 L494.00 363.82 L493.00 364.15 L492.00 364.30 L491.00 364.23 L490.00 364.28 L489.00 364.02 L488.00 364.16 L487.00 364.17 L486.00 363.76 L485.00 363.64 L484.00 363.75 L483.00 363.94 L482.00 363.51 L481.00 363.87 L480.00 364.10 L479.00 363.49 L478.00 363.91 L477.00 363.68 L476.00 363.60 L475.00 363.82 L474.00 363.75 L473.00 363.78 L472.00 363.44 L471.00 363.84 L470.00 363.39 L469.00 363.62 L468.00 363.54 L467.00 363.58 L466.00 363.31 L465.00 363.65 L464.00 363.58 L463.00 363.48 L462.00 363.27 L461.00 363.67 L460.00 363.53Z" fill="#f8f628" /><path d="M4.5 129.5 H10.8 V131.8 H9.6 V137.5 Q12 138 15.2 140.2 L13.5 142.2 H4.8 V139.8 H7.2 V131.8 H4.5 Z" fill="#ece400"/><g fill="#e4dc00"><rect x="7" y="349" width="3" height="3.8"/><rect x="4.5" y="352.3" width="10" height="2.8" rx="1"/><path d="M4.5 357 H13 L15.5 358.5 L13 360.3 H4.5 Z"/><ellipse cx="9.5" cy="362.3" rx="2" ry="1.3"/></g><path d="M405.3 41.5 H413.2 V53 L409.5 50 L407.5 52.5 L407.3 46 Z" fill="#f0f0f0"/><path d="M408.5 45 H410.8 V50 H408.5 Z" fill="#080808"/><path d="M579.5 274 H581.8 V279 H583.5 V283.5 H581.5 V281.5 H579.5 Z" fill="#eeeeee"/><circle cx="23.2" cy="15.5" r="11" fill="#a9c5d2"/><rect x="18.5" y="11.0" width="10" height="1.7" rx="0.6" fill="#1c2428"/><rect x="18.5" y="14.6" width="10" height="1.7" rx="0.6" fill="#1c2428"/><rect x="18.5" y="18.2" width="10" height="1.7" rx="0.6" fill="#1c2428"/><rect x="47" y="14.2" width="287" height="25.6" fill="none" stroke="#5c626a" stroke-width="1.2"/><rect x="47" y="14" width="74.5" height="26" fill="#1a6ab0"/><rect x="48.8" y="15.5" width="71" height="22.3" fill="#3d380c" stroke="#c8b400" stroke-width="1"/><rect x="51" y="17.2" width="6.5" height="20" fill="#f4f000"/><rect x="122.5" y="17.8" width="6.5" height="19.5" fill="none" stroke="#22a022" stroke-width="1.4"/><rect x="193.5" y="17.8" width="7" height="19.5" fill="none" stroke="#b018c0" stroke-width="1.4"/><rect x="265.5" y="17.8" width="7" height="19.5" fill="none" stroke="#10a8a8" stroke-width="1.4"/><line x1="191" y1="14.5" x2="191" y2="39.5" stroke="#5c626a" stroke-width="1"/><line x1="263" y1="14.5" x2="263" y2="39.5" stroke="#5c626a" stroke-width="1"/><path d="M420.5 19 V15.7 H439.5 V27.5 H431" fill="none" stroke="#a9c5d2" stroke-width="1.3" stroke-dasharray="2.2 1.3"/><circle cx="423.3" cy="26.8" r="6.5" fill="none" stroke="#a9c5d2" stroke-width="1.6"/><line x1="427.8" y1="31.3" x2="432" y2="35.5" stroke="#a9c5d2" stroke-width="2.4" stroke-linecap="round"/><path d="M420.5 26.8 H425.5 M420.5 26.8 L422.3 25.2 M420.5 26.8 L422.3 28.4" stroke="#a9c5d2" stroke-width="1" fill="none"/><line x1="473.5" y1="14.6" x2="740" y2="14.6" stroke="#4c5a68" stroke-width="1.4"/><line x1="611.5" y1="15" x2="611.5" y2="40" stroke="#4c5a68" stroke-width="1.2"/><line x1="661.5" y1="15" x2="661.5" y2="40" stroke="#4c5a68" stroke-width="1.2"/><line x1="739.3" y1="15" x2="739.3" y2="40" stroke="#4c5a68" stroke-width="1.2"/><path d="M530 17 H536.5 M533.3 17 V25 M530.5 21 L533.3 18 L536 21" stroke="#e0e0e0" stroke-width="1.3" fill="none"/><g fill="#d8d8d8"><rect x="76.5" y="27" width="5" height="1.2"/><rect x="77.5" y="29.8" width="4" height="1.2"/><rect x="76.5" y="32.5" width="5" height="1.2"/><rect x="76.0" y="34.5" width="8" height="2"/><path d="M85.5 36 V27.5 H93.5 V34.5 L89.0 29.5" fill="none" stroke="#d8d8d8" stroke-width="1.3"/><path d="M91.0 29 L94.0 29 L94.0 33 Z"/></g><g fill="#d8d8d8"><rect x="148.5" y="27" width="5" height="1.2"/><rect x="149.5" y="29.8" width="4" height="1.2"/><rect x="148.5" y="32.5" width="5" height="1.2"/><rect x="148.0" y="34.5" width="8" height="2"/><path d="M157.5 36 V27.5 H165.5 V34.5 L161.0 29.5" fill="none" stroke="#d8d8d8" stroke-width="1.3"/><path d="M163.0 29 L166.0 29 L166.0 33 Z"/></g><g fill="#d8d8d8"><rect x="220.3" y="27" width="5" height="1.2"/><rect x="221.3" y="29.8" width="4" height="1.2"/><rect x="220.3" y="32.5" width="5" height="1.2"/><rect x="219.8" y="34.5" width="8" height="2"/><path d="M229.3 36 V27.5 H237.3 V34.5 L232.8 29.5" fill="none" stroke="#d8d8d8" stroke-width="1.3"/><path d="M234.8 29 L237.8 29 L237.8 33 Z"/></g><g fill="#d8d8d8"><rect x="291.5" y="27" width="5" height="1.2"/><rect x="292.5" y="29.8" width="4" height="1.2"/><rect x="291.5" y="32.5" width="5" height="1.2"/><rect x="291.0" y="34.5" width="8" height="2"/><path d="M300.5 36 V27.5 H308.5 V34.5 L304.0 29.5" fill="none" stroke="#d8d8d8" stroke-width="1.3"/><path d="M306.0 29 L309.0 29 L309.0 33 Z"/></g><g transform="translate(7.30,36.90) scale(0.95,1)"><text x="0" y="0" font-family="Liberation Sans" font-size="10.2" fill="#a9c5d2" font-weight="bold" textLength="32.95" lengthAdjust="spacing">MENU</text></g><g transform="translate(60.60,31.80) scale(1.0,1)"><text x="0" y="0" font-family="Liberation Sans" font-size="15.6" fill="#e0e0e0" font-weight="normal" textLength="7.40" lengthAdjust="spacing">1</text></g><g transform="translate(132.60,32.30) scale(1.0,1)"><text x="0" y="0" font-family="Liberation Sans" font-size="15.6" fill="#e0e0e0" font-weight="normal" textLength="8.70" lengthAdjust="spacing">2</text></g><g transform="translate(204.80,32.30) scale(1.0,1)"><text x="0" y="0" font-family="Liberation Sans" font-size="15.6" fill="#e0e0e0" font-weight="normal" textLength="8.10" lengthAdjust="spacing">3</text></g><g transform="translate(276.50,32.30) scale(1.0,1)"><text x="0" y="0" font-family="Liberation Sans" font-size="15.6" fill="#e0e0e0" font-weight="normal" textLength="7.50" lengthAdjust="spacing">4</text></g><g transform="translate(83.60,25.30) scale(0.82,1)"><text x="0" y="0" font-family="Liberation Sans" font-size="12.6" fill="#dadada" font-weight="normal" textLength="43.17" lengthAdjust="spacing">1.00 A</text></g><g transform="translate(154.90,25.30) scale(0.82,1)"><text x="0" y="0" font-family="Liberation Sans" font-size="12.6" fill="#dadada" font-weight="normal" textLength="43.17" lengthAdjust="spacing">1.00 V</text></g><g transform="translate(226.50,25.30) scale(0.82,1)"><text x="0" y="0" font-family="Liberation Sans" font-size="12.6" fill="#dadada" font-weight="normal" textLength="44.51" lengthAdjust="spacing">1.00 A</text></g><g transform="translate(296.50,25.30) scale(0.82,1)"><text x="0" y="0" font-family="Liberation Sans" font-size="12.6" fill="#dadada" font-weight="normal" textLength="44.51" lengthAdjust="spacing">2.00 V</text></g><g transform="translate(475.60,12.20) scale(0.82,1)"><text x="0" y="0" font-family="Liberation Sans" font-size="13.0" fill="#dadada" font-weight="normal" textLength="130.00" lengthAdjust="spacing">2025/07/04 16:51:46</text></g><g transform="translate(695.70,12.20) scale(0.82,1)"><text x="0" y="0" font-family="Liberation Sans" font-size="12.6" fill="#dadada" font-weight="normal" textLength="55.85" lengthAdjust="spacing">Stopped</text></g><g transform="translate(475.60,24.80) scale(0.82,1)"><text x="0" y="0" font-family="Liberation Sans" font-size="11.8" fill="#dadada" font-weight="normal" textLength="32.93" lengthAdjust="spacing">Edge</text></g><g transform="translate(506.00,24.80) scale(0.82,1)"><text x="0" y="0" font-family="Liberation Sans" font-size="11.8" fill="#dadada" font-weight="normal" textLength="21.95" lengthAdjust="spacing">CH1</text></g><g transform="translate(475.60,37.30) scale(0.82,1)"><text x="0" y="0" font-family="Liberation Sans" font-size="12.0" fill="#dadada" font-weight="normal" textLength="29.27" lengthAdjust="spacing">Auto</text></g><g transform="translate(504.30,37.30) scale(0.82,1)"><text x="0" y="0" font-family="Liberation Sans" font-size="12.0" fill="#dadada" font-weight="normal" textLength="35.85" lengthAdjust="spacing">-0.16</text></g><g transform="translate(538.30,37.30) scale(0.82,1)"><text x="0" y="0" font-family="Liberation Sans" font-size="12.0" fill="#dadada" font-weight="normal" textLength="9.88" lengthAdjust="spacing">A</text></g><g transform="translate(613.20,25.50) scale(0.82,1)"><text x="0" y="0" font-family="Liberation Sans" font-size="12.6" fill="#dadada" font-weight="normal" textLength="45.49" lengthAdjust="spacing">History</text></g><g transform="translate(652.00,37.20) scale(0.82,1)"><text x="0" y="0" font-family="Liberation Sans" font-size="12.4" fill="#dadada" font-weight="normal" textLength="6.71" lengthAdjust="spacing">1</text></g><g transform="translate(662.70,25.00) scale(0.82,1)"><text x="0" y="0" font-family="Liberation Sans" font-size="12.6" fill="#dadada" font-weight="normal" textLength="42.07" lengthAdjust="spacing">Normal</text></g><g transform="translate(699.60,37.00) scale(0.82,1)"><text x="0" y="0" font-family="Liberation Sans" font-size="12.4" fill="#dadada" font-weight="normal" textLength="46.46" lengthAdjust="spacing">50kS/s</text></g><g transform="translate(703.40,53.10) scale(0.82,1)"><text x="0" y="0" font-family="Liberation Sans" font-size="12.5" fill="#dadada" font-weight="normal" textLength="41.22" lengthAdjust="spacing">5s/div</text></g><g transform="translate(703.10,283.20) scale(0.82,1)"><text x="0" y="0" font-family="Liberation Sans" font-size="11.5" fill="#9cbccc" font-weight="normal" textLength="40.61" lengthAdjust="spacing">Zoom1</text></g><g transform="translate(703.10,296.80) scale(0.82,1)"><text x="0" y="0" font-family="Liberation Sans" font-size="12.5" fill="#dadada" font-weight="normal" textLength="41.22" lengthAdjust="spacing">2s/div</text></g><g transform="translate(73.70,518.40) scale(0.82,1)"><text x="0" y="0" font-family="Liberation Sans" font-size="11.2" fill="#dadada" font-weight="normal" textLength="14.63" lengthAdjust="spacing">V1</text></g><g transform="translate(93.00,518.40) scale(0.82,1)"><text x="0" y="0" font-family="Liberation Sans" font-size="11.2" fill="#dadada" font-weight="normal" textLength="50.85" lengthAdjust="spacing">-0.12 A</text></g><g transform="translate(73.70,529.50) scale(0.82,1)"><text x="0" y="0" font-family="Liberation Sans" font-size="11.2" fill="#dadada" font-weight="normal" textLength="14.63" lengthAdjust="spacing">V2</text></g><g transform="translate(93.00,529.50) scale(0.82,1)"><text x="0" y="0" font-family="Liberation Sans" font-size="11.2" fill="#dadada" font-weight="normal" textLength="50.85" lengthAdjust="spacing">-1.11 A</text></g><g transform="translate(74.50,541.40) scale(0.82,1)"><text x="0" y="0" font-family="Liberation Sans" font-size="11.2" fill="#dadada" font-weight="normal" textLength="13.66" lengthAdjust="spacing">ΔT</text></g><g transform="translate(97.50,541.40) scale(0.82,1)"><text x="0" y="0" font-family="Liberation Sans" font-size="11.2" fill="#dadada" font-weight="normal" textLength="58.05" lengthAdjust="spacing">24.064 s</text></g><g transform="translate(62.60,552.60) scale(0.82,1)"><text x="0" y="0" font-family="Liberation Sans" font-size="11.2" fill="#dadada" font-weight="normal" textLength="28.17" lengthAdjust="spacing">1/ΔT</text></g><g transform="translate(98.20,552.60) scale(0.82,1)"><text x="0" y="0" font-family="Liberation Sans" font-size="11.2" fill="#dadada" font-weight="normal" textLength="75.37" lengthAdjust="spacing">41.5561mHz</text></g><g transform="translate(351.10,542.30) scale(0.82,1)"><text x="0" y="0" font-family="Liberation Sans" font-size="11.2" fill="#dadada" font-weight="normal" textLength="51.34" lengthAdjust="spacing">Max(C1)</text></g><g transform="translate(403.80,542.30) scale(0.82,1)"><text x="0" y="0" font-family="Liberation Sans" font-size="11.2" fill="#dadada" font-weight="normal" textLength="45.49" lengthAdjust="spacing">0.67 A</text></g><g transform="translate(351.10,553.50) scale(0.82,1)"><text x="0" y="0" font-family="Liberation Sans" font-size="11.2" fill="#dadada" font-weight="normal" textLength="51.34" lengthAdjust="spacing">Rms(C1)</text></g><g transform="translate(403.80,553.50) scale(0.82,1)"><text x="0" y="0" font-family="Liberation Sans" font-size="11.2" fill="#dadada" font-weight="normal" textLength="70.24" lengthAdjust="spacing">293.984mA</text></g><g transform="translate(546.10,542.30) scale(0.82,1)"><text x="0" y="0" font-family="Liberation Sans" font-size="11.2" fill="#dadada" font-weight="normal" textLength="45.49" lengthAdjust="spacing">Min(C1)</text></g><g transform="translate(588.20,542.30) scale(0.82,1)"><text x="0" y="0" font-family="Liberation Sans" font-size="11.2" fill="#dadada" font-weight="normal" textLength="53.41" lengthAdjust="spacing">-0.80 A</text></g></svg>
</body></html>
